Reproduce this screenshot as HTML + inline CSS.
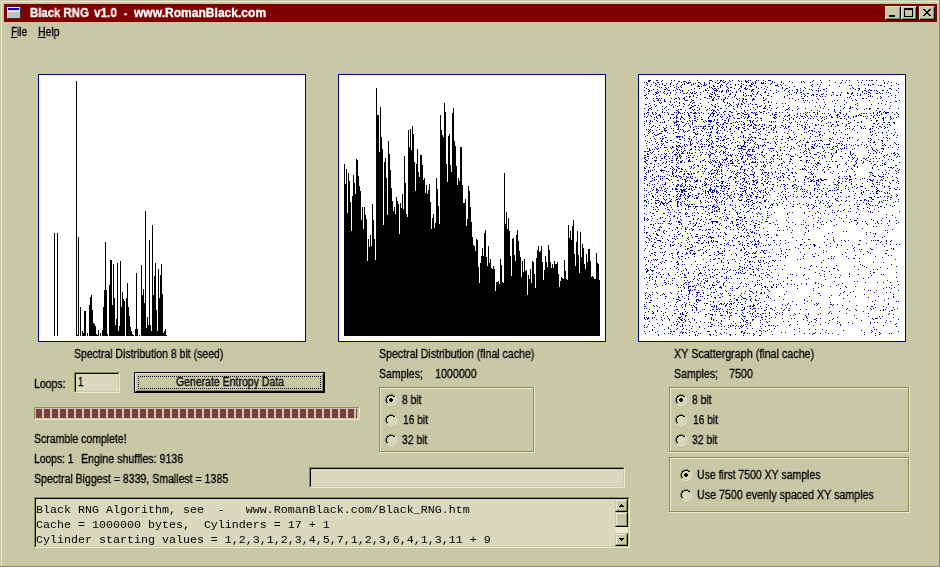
<!DOCTYPE html>
<html><head><meta charset="utf-8"><title>Black RNG</title>
<style>
html,body{margin:0;padding:0}
body{width:940px;height:567px;background:#c8c7a6;position:relative;overflow:hidden;font-family:"Liberation Sans",sans-serif;font-size:12px;color:#000}
.t{position:absolute;white-space:pre;font:12px/14px "Liberation Sans",sans-serif;color:#000;transform-origin:0 0;will-change:transform;-webkit-text-stroke:0.3px currentColor}
.m{position:absolute;white-space:pre;font:11.667px/15px "Liberation Mono",monospace;color:#000;left:0.4px;will-change:transform}
.panel{position:absolute;top:74px;width:266px;height:266px;border:1px solid #000080;background:#fff}
svg{display:block}
u{text-decoration:underline}
</style></head><body>
<div style="position:absolute;left:1px;top:1px;width:938px;height:1px;background:#ebe8d5"></div>
<div style="position:absolute;left:1px;top:1px;width:1px;height:565px;background:#ebe8d5"></div>
<div style="position:absolute;left:939px;top:0;width:1px;height:567px;background:#908c53"></div>
<div style="position:absolute;left:0;top:566px;width:940px;height:1px;background:#908c53"></div>
<div style="position:absolute;left:4px;top:4px;width:933px;height:18px;background:#800000"></div>
<svg style="position:absolute;left:7px;top:7px" width="14" height="12" viewBox="0 0 14 12" shape-rendering="crispEdges">
<rect x="0" y="0" width="14" height="12" fill="#303838"/>
<rect x="0" y="0" width="13" height="11" fill="#ffffff"/>
<rect x="1" y="1" width="12" height="10" fill="#c0c0c0"/>
<rect x="1" y="1" width="12" height="3" fill="#dcdcdc"/>
<rect x="1" y="4" width="12" height="1" fill="#ececec"/>
<rect x="1" y="1" width="11" height="2" fill="#0000ff"/>
</svg>
<div class="t" id="t_title1" style="left:29.91px;top:6px;transform:scaleX(0.9484);color:#fff;font-weight:bold">Black RNG</div><div class="t" id="t_title2" style="left:94.15px;top:6px;transform:scaleX(0.9789);color:#fff;font-weight:bold">v1.0</div><div class="t" id="t_title3" style="left:124.47px;top:7px;transform:scaleX(0.8000);color:#fff;font-weight:bold">-</div><div class="t" id="t_title4" style="left:134.25px;top:6px;transform:scaleX(1.0038);color:#fff;font-weight:bold">www.RomanBlack.com</div>
<div style="position:absolute;left:885px;top:6px;width:14px;height:12px;border:1px solid #ebe8d5;border-right-color:#000;border-bottom-color:#000;background:#c8c7a6"></div><div style="position:absolute;left:886px;top:7px;width:12px;height:10px;border:1px solid #c8c7a6;border-right-color:#908c53;border-bottom-color:#908c53;"><div style="position:absolute;left:2px;top:7px;width:6px;height:2px;background:#000"></div></div>
<div style="position:absolute;left:901px;top:6px;width:14px;height:12px;border:1px solid #ebe8d5;border-right-color:#000;border-bottom-color:#000;background:#c8c7a6"></div><div style="position:absolute;left:902px;top:7px;width:12px;height:10px;border:1px solid #c8c7a6;border-right-color:#908c53;border-bottom-color:#908c53;"><div style="position:absolute;left:1px;top:0px;width:7px;height:6px;border:1px solid #000;border-top-width:2px"></div></div>
<div style="position:absolute;left:919px;top:6px;width:14px;height:12px;border:1px solid #ebe8d5;border-right-color:#000;border-bottom-color:#000;background:#c8c7a6"></div><div style="position:absolute;left:920px;top:7px;width:12px;height:10px;border:1px solid #c8c7a6;border-right-color:#908c53;border-bottom-color:#908c53;"><svg style="position:absolute;left:2px;top:1px" width="8" height="7" viewBox="0 0 8 7" shape-rendering="crispEdges"><path d="M0 0h2v1h1v1h2v-1h1v-1h2v1h-1v1h-1v1h-1v1h1v1h1v1h1v1h-2v-1h-1v-1h-2v1h-1v1h-2v-1h1v-1h1v-1h1v-1h-1v-1h-1v-1h-1z" fill="#000"/></svg></div>
<div class="t" id="t_file" style="left:10.62px;top:25px;transform:scaleX(0.8284);"><u>F</u>ile</div><div class="t" id="t_help" style="left:38.32px;top:25px;transform:scaleX(0.8690);"><u>H</u>elp</div>
<div class="panel" style="left:38px"></div>
<div class="panel" style="left:338px"></div>
<div class="panel" style="left:638px"></div>
<svg style="position:absolute;left:0;top:0" width="940" height="567" viewBox="0 0 940 567" shape-rendering="crispEdges">
<path d="M54 233h1v103h-1zM57 233h1v103h-1zM76 81h1v255h-1zM77 335h1v1h-1zM78 237h1v99h-1zM80 307h1v29h-1zM82 331h1v5h-1zM83 333h1v3h-1zM84 311h1v25h-1zM85 311h1v25h-1zM87 333h1v3h-1zM89 305h1v31h-1zM90 297h1v39h-1zM91 295h1v41h-1zM92 310h1v26h-1zM93 323h1v13h-1zM94 324h1v12h-1zM95 326h1v10h-1zM96 334h1v2h-1zM97 335h1v1h-1zM98 330h1v6h-1zM100 333h1v3h-1zM102 330h1v6h-1zM103 307h1v29h-1zM104 290h1v46h-1zM105 242h1v94h-1zM106 290h1v46h-1zM107 334h1v2h-1zM109 285h1v51h-1zM110 260h1v76h-1zM111 260h1v76h-1zM112 305h1v31h-1zM113 264h1v72h-1zM114 298h1v38h-1zM115 325h1v11h-1zM116 319h1v17h-1zM117 263h1v73h-1zM118 331h1v5h-1zM119 326h1v10h-1zM120 261h1v75h-1zM121 307h1v29h-1zM122 292h1v44h-1zM123 299h1v37h-1zM124 301h1v35h-1zM126 298h1v38h-1zM127 283h1v53h-1zM128 307h1v29h-1zM129 316h1v20h-1zM130 327h1v9h-1zM131 331h1v5h-1zM132 334h1v2h-1zM133 335h1v1h-1zM135 329h1v7h-1zM136 273h1v63h-1zM137 329h1v7h-1zM139 335h1v1h-1zM141 265h1v71h-1zM142 295h1v41h-1zM143 289h1v47h-1zM144 303h1v33h-1zM145 211h1v125h-1zM146 328h1v8h-1zM147 317h1v19h-1zM148 325h1v11h-1zM149 240h1v96h-1zM150 325h1v11h-1zM151 331h1v5h-1zM152 225h1v111h-1zM153 295h1v41h-1zM154 276h1v60h-1zM155 263h1v73h-1zM156 310h1v26h-1zM157 331h1v5h-1zM158 269h1v67h-1zM159 298h1v38h-1zM160 275h1v61h-1zM161 264h1v72h-1zM162 294h1v42h-1zM163 333h1v3h-1zM164 331h1v5h-1zM165 329h1v7h-1zM166 335h1v1h-1z" fill="#000"/>
<path d="M344 164h1v172h-1zM345 184h1v152h-1zM346 169h1v167h-1zM347 213h1v123h-1zM348 173h1v163h-1zM349 181h1v155h-1zM350 202h1v134h-1zM351 231h1v105h-1zM352 196h1v140h-1zM353 175h1v161h-1zM354 183h1v153h-1zM355 194h1v142h-1zM356 159h1v177h-1zM357 160h1v176h-1zM358 176h1v160h-1zM359 186h1v150h-1zM360 191h1v145h-1zM361 220h1v116h-1zM362 207h1v129h-1zM363 229h1v107h-1zM364 207h1v129h-1zM365 215h1v121h-1zM366 219h1v117h-1zM367 261h1v75h-1zM368 239h1v97h-1zM369 247h1v89h-1zM370 235h1v101h-1zM371 246h1v90h-1zM372 204h1v132h-1zM373 220h1v116h-1zM374 239h1v97h-1zM375 260h1v76h-1zM376 88h1v248h-1zM377 115h1v221h-1zM378 115h1v221h-1zM379 152h1v184h-1zM380 107h1v229h-1zM381 137h1v199h-1zM382 149h1v187h-1zM383 225h1v111h-1zM384 162h1v174h-1zM385 158h1v178h-1zM386 178h1v158h-1zM387 215h1v121h-1zM388 141h1v195h-1zM389 154h1v182h-1zM390 170h1v166h-1zM391 188h1v148h-1zM392 201h1v135h-1zM393 211h1v125h-1zM394 207h1v129h-1zM395 214h1v122h-1zM396 197h1v139h-1zM397 201h1v135h-1zM398 204h1v132h-1zM399 234h1v102h-1zM400 203h1v133h-1zM401 208h1v128h-1zM402 194h1v142h-1zM403 209h1v127h-1zM404 156h1v180h-1zM405 183h1v153h-1zM406 214h1v122h-1zM407 217h1v119h-1zM408 130h1v206h-1zM409 147h1v189h-1zM410 129h1v207h-1zM411 150h1v186h-1zM412 126h1v210h-1zM413 134h1v202h-1zM414 162h1v174h-1zM415 191h1v145h-1zM416 164h1v172h-1zM417 149h1v187h-1zM418 172h1v164h-1zM419 177h1v159h-1zM420 155h1v181h-1zM421 155h1v181h-1zM422 165h1v171h-1zM423 180h1v156h-1zM424 178h1v158h-1zM425 193h1v143h-1zM426 185h1v151h-1zM427 194h1v142h-1zM428 190h1v146h-1zM429 184h1v152h-1zM430 202h1v134h-1zM431 229h1v107h-1zM432 218h1v118h-1zM433 214h1v122h-1zM434 228h1v108h-1zM435 223h1v113h-1zM436 178h1v158h-1zM437 189h1v147h-1zM438 206h1v130h-1zM439 224h1v112h-1zM440 115h1v221h-1zM441 130h1v206h-1zM442 135h1v201h-1zM443 137h1v199h-1zM444 103h1v233h-1zM445 112h1v224h-1zM446 164h1v172h-1zM447 182h1v154h-1zM448 136h1v200h-1zM449 134h1v202h-1zM450 165h1v171h-1zM451 172h1v164h-1zM452 113h1v223h-1zM453 108h1v228h-1zM454 141h1v195h-1zM455 146h1v190h-1zM456 166h1v170h-1zM457 185h1v151h-1zM458 178h1v158h-1zM459 181h1v155h-1zM460 147h1v189h-1zM461 147h1v189h-1zM462 185h1v151h-1zM463 203h1v133h-1zM464 203h1v133h-1zM465 199h1v137h-1zM466 226h1v110h-1zM467 219h1v117h-1zM468 186h1v150h-1zM469 191h1v145h-1zM470 207h1v129h-1zM471 222h1v114h-1zM472 237h1v99h-1zM473 245h1v91h-1zM474 246h1v90h-1zM475 251h1v85h-1zM476 239h1v97h-1zM477 240h1v96h-1zM478 267h1v69h-1zM479 283h1v53h-1zM480 263h1v73h-1zM481 256h1v80h-1zM482 248h1v88h-1zM483 256h1v80h-1zM484 233h1v103h-1zM485 230h1v106h-1zM486 257h1v79h-1zM487 266h1v70h-1zM488 246h1v90h-1zM489 263h1v73h-1zM490 259h1v77h-1zM491 268h1v68h-1zM492 269h1v67h-1zM493 266h1v70h-1zM494 269h1v67h-1zM495 291h1v45h-1zM496 282h1v54h-1zM497 282h1v54h-1zM498 281h1v55h-1zM499 284h1v52h-1zM500 259h1v77h-1zM501 265h1v71h-1zM502 282h1v54h-1zM503 283h1v53h-1zM504 173h1v163h-1zM505 224h1v112h-1zM506 212h1v124h-1zM507 229h1v107h-1zM508 218h1v118h-1zM509 231h1v105h-1zM510 256h1v80h-1zM511 276h1v60h-1zM512 239h1v97h-1zM513 238h1v98h-1zM514 255h1v81h-1zM515 261h1v75h-1zM516 235h1v101h-1zM517 230h1v106h-1zM518 241h1v95h-1zM519 251h1v85h-1zM520 257h1v79h-1zM521 277h1v59h-1zM522 261h1v75h-1zM523 272h1v64h-1zM524 259h1v77h-1zM525 271h1v65h-1zM526 270h1v66h-1zM527 295h1v41h-1zM528 275h1v61h-1zM529 279h1v57h-1zM530 269h1v67h-1zM531 283h1v53h-1zM532 261h1v75h-1zM533 262h1v74h-1zM534 274h1v62h-1zM535 288h1v48h-1zM536 258h1v78h-1zM537 250h1v86h-1zM538 246h1v90h-1zM539 252h1v84h-1zM540 251h1v85h-1zM541 246h1v90h-1zM542 262h1v74h-1zM543 280h1v56h-1zM544 270h1v66h-1zM545 256h1v80h-1zM546 262h1v74h-1zM547 267h1v69h-1zM548 245h1v91h-1zM549 250h1v86h-1zM550 262h1v74h-1zM551 268h1v68h-1zM552 264h1v72h-1zM553 268h1v68h-1zM554 261h1v75h-1zM555 264h1v72h-1zM556 264h1v72h-1zM557 262h1v74h-1zM558 274h1v62h-1zM559 287h1v49h-1zM560 281h1v55h-1zM561 277h1v59h-1zM562 278h1v58h-1zM563 279h1v57h-1zM564 260h1v76h-1zM565 271h1v65h-1zM566 279h1v57h-1zM567 280h1v56h-1zM568 225h1v111h-1zM569 238h1v98h-1zM570 231h1v105h-1zM571 240h1v96h-1zM572 226h1v110h-1zM573 220h1v116h-1zM574 254h1v82h-1zM575 266h1v70h-1zM576 242h1v94h-1zM577 231h1v105h-1zM578 255h1v81h-1zM579 273h1v63h-1zM580 232h1v104h-1zM581 257h1v79h-1zM582 244h1v92h-1zM583 248h1v88h-1zM584 264h1v72h-1zM585 269h1v67h-1zM586 254h1v82h-1zM587 262h1v74h-1zM588 249h1v87h-1zM589 249h1v87h-1zM590 261h1v75h-1zM591 277h1v59h-1zM592 276h1v60h-1zM593 277h1v59h-1zM594 279h1v57h-1zM595 279h1v57h-1zM596 253h1v83h-1zM597 263h1v73h-1zM598 264h1v72h-1zM599 280h1v56h-1z" fill="#000"/>
<path d="M648 80h1v1h-1zM649 80h1v1h-1zM650 80h1v1h-1zM656 80h1v1h-1zM657 80h1v1h-1zM662 80h1v1h-1zM671 80h1v1h-1zM674 80h1v1h-1zM689 80h1v1h-1zM697 80h1v1h-1zM709 80h1v1h-1zM710 80h1v1h-1zM711 80h1v1h-1zM717 80h1v1h-1zM720 80h1v1h-1zM721 80h1v1h-1zM723 80h1v1h-1zM729 80h1v1h-1zM732 80h1v1h-1zM738 80h1v1h-1zM745 80h1v1h-1zM748 80h1v1h-1zM750 80h1v1h-1zM756 80h1v1h-1zM758 80h1v1h-1zM763 80h1v1h-1zM768 80h1v1h-1zM769 80h1v1h-1zM770 80h1v1h-1zM813 80h1v1h-1zM820 80h1v1h-1zM829 80h1v1h-1zM842 80h1v1h-1zM846 80h1v1h-1zM849 80h1v1h-1zM857 80h1v1h-1zM862 80h1v1h-1zM866 80h1v1h-1zM869 80h1v1h-1zM871 80h1v1h-1zM872 80h1v1h-1zM876 80h1v1h-1zM883 80h1v1h-1zM648 81h1v1h-1zM649 81h1v1h-1zM661 81h1v1h-1zM678 81h1v1h-1zM679 81h1v1h-1zM683 81h1v1h-1zM684 81h1v1h-1zM685 81h1v1h-1zM712 81h1v1h-1zM720 81h1v1h-1zM722 81h1v1h-1zM725 81h1v1h-1zM730 81h1v1h-1zM739 81h1v1h-1zM741 81h1v1h-1zM745 81h1v1h-1zM746 81h1v1h-1zM747 81h1v1h-1zM755 81h1v1h-1zM765 81h1v1h-1zM772 81h1v1h-1zM781 81h1v1h-1zM789 81h1v1h-1zM801 81h1v1h-1zM803 81h1v1h-1zM812 81h1v1h-1zM888 81h1v1h-1zM644 82h1v1h-1zM646 82h1v1h-1zM653 82h1v1h-1zM657 82h1v1h-1zM658 82h1v1h-1zM671 82h1v1h-1zM681 82h1v1h-1zM686 82h1v1h-1zM688 82h1v1h-1zM689 82h1v1h-1zM690 82h1v1h-1zM698 82h1v1h-1zM699 82h1v1h-1zM704 82h1v1h-1zM709 82h1v1h-1zM715 82h1v1h-1zM719 82h1v1h-1zM723 82h1v1h-1zM724 82h1v1h-1zM728 82h1v1h-1zM746 82h1v1h-1zM748 82h1v1h-1zM752 82h1v1h-1zM755 82h1v1h-1zM761 82h1v1h-1zM763 82h1v1h-1zM772 82h1v1h-1zM774 82h1v1h-1zM781 82h1v1h-1zM792 82h1v1h-1zM801 82h1v1h-1zM804 82h1v1h-1zM810 82h1v1h-1zM821 82h1v1h-1zM835 82h1v1h-1zM841 82h1v1h-1zM845 82h1v1h-1zM858 82h1v1h-1zM861 82h1v1h-1zM884 82h1v1h-1zM891 82h1v1h-1zM647 83h1v1h-1zM655 83h1v1h-1zM662 83h1v1h-1zM666 83h1v1h-1zM670 83h1v1h-1zM677 83h1v1h-1zM684 83h1v1h-1zM687 83h1v1h-1zM688 83h1v1h-1zM693 83h1v1h-1zM695 83h1v1h-1zM700 83h1v1h-1zM704 83h1v1h-1zM709 83h1v1h-1zM717 83h1v1h-1zM718 83h1v1h-1zM727 83h1v1h-1zM741 83h1v1h-1zM751 83h1v1h-1zM753 83h1v1h-1zM755 83h1v1h-1zM761 83h1v1h-1zM762 83h1v1h-1zM763 83h1v1h-1zM765 83h1v1h-1zM771 83h1v1h-1zM783 83h1v1h-1zM840 83h1v1h-1zM884 83h1v1h-1zM887 83h1v1h-1zM896 83h1v1h-1zM646 84h1v1h-1zM651 84h1v1h-1zM656 84h1v1h-1zM659 84h1v1h-1zM662 84h1v1h-1zM670 84h1v1h-1zM676 84h1v1h-1zM682 84h1v1h-1zM684 84h1v1h-1zM691 84h1v1h-1zM693 84h1v1h-1zM701 84h1v1h-1zM704 84h1v1h-1zM706 84h1v1h-1zM721 84h1v1h-1zM726 84h1v1h-1zM730 84h1v1h-1zM735 84h1v1h-1zM738 84h1v1h-1zM743 84h1v1h-1zM751 84h1v1h-1zM752 84h1v1h-1zM770 84h1v1h-1zM777 84h1v1h-1zM780 84h1v1h-1zM812 84h1v1h-1zM817 84h1v1h-1zM820 84h1v1h-1zM864 84h1v1h-1zM868 84h1v1h-1zM872 84h1v1h-1zM873 84h1v1h-1zM898 84h1v1h-1zM647 85h1v1h-1zM655 85h1v1h-1zM664 85h1v1h-1zM665 85h1v1h-1zM673 85h1v1h-1zM681 85h1v1h-1zM691 85h1v1h-1zM698 85h1v1h-1zM703 85h1v1h-1zM704 85h1v1h-1zM705 85h1v1h-1zM713 85h1v1h-1zM720 85h1v1h-1zM722 85h1v1h-1zM735 85h1v1h-1zM741 85h1v1h-1zM746 85h1v1h-1zM749 85h1v1h-1zM750 85h1v1h-1zM754 85h1v1h-1zM775 85h1v1h-1zM776 85h1v1h-1zM777 85h1v1h-1zM781 85h1v1h-1zM785 85h1v1h-1zM811 85h1v1h-1zM829 85h1v1h-1zM849 85h1v1h-1zM851 85h1v1h-1zM858 85h1v1h-1zM868 85h1v1h-1zM870 85h1v1h-1zM878 85h1v1h-1zM880 85h1v1h-1zM881 85h1v1h-1zM891 85h1v1h-1zM650 86h1v1h-1zM657 86h1v1h-1zM670 86h1v1h-1zM676 86h1v1h-1zM680 86h1v1h-1zM697 86h1v1h-1zM698 86h1v1h-1zM699 86h1v1h-1zM701 86h1v1h-1zM709 86h1v1h-1zM713 86h1v1h-1zM714 86h1v1h-1zM717 86h1v1h-1zM720 86h1v1h-1zM726 86h1v1h-1zM740 86h1v1h-1zM741 86h1v1h-1zM750 86h1v1h-1zM751 86h1v1h-1zM756 86h1v1h-1zM765 86h1v1h-1zM778 86h1v1h-1zM794 86h1v1h-1zM812 86h1v1h-1zM819 86h1v1h-1zM839 86h1v1h-1zM884 86h1v1h-1zM644 87h1v1h-1zM659 87h1v1h-1zM661 87h1v1h-1zM665 87h1v1h-1zM668 87h1v1h-1zM674 87h1v1h-1zM678 87h1v1h-1zM681 87h1v1h-1zM709 87h1v1h-1zM711 87h1v1h-1zM720 87h1v1h-1zM727 87h1v1h-1zM730 87h1v1h-1zM731 87h1v1h-1zM741 87h1v1h-1zM745 87h1v1h-1zM756 87h1v1h-1zM761 87h1v1h-1zM767 87h1v1h-1zM782 87h1v1h-1zM789 87h1v1h-1zM804 87h1v1h-1zM852 87h1v1h-1zM646 88h1v1h-1zM666 88h1v1h-1zM676 88h1v1h-1zM694 88h1v1h-1zM699 88h1v1h-1zM707 88h1v1h-1zM712 88h1v1h-1zM714 88h1v1h-1zM715 88h1v1h-1zM718 88h1v1h-1zM728 88h1v1h-1zM734 88h1v1h-1zM739 88h1v1h-1zM744 88h1v1h-1zM745 88h1v1h-1zM747 88h1v1h-1zM758 88h1v1h-1zM764 88h1v1h-1zM782 88h1v1h-1zM786 88h1v1h-1zM787 88h1v1h-1zM800 88h1v1h-1zM805 88h1v1h-1zM818 88h1v1h-1zM826 88h1v1h-1zM850 88h1v1h-1zM853 88h1v1h-1zM858 88h1v1h-1zM859 88h1v1h-1zM865 88h1v1h-1zM889 88h1v1h-1zM890 88h1v1h-1zM898 88h1v1h-1zM648 89h1v1h-1zM653 89h1v1h-1zM657 89h1v1h-1zM664 89h1v1h-1zM665 89h1v1h-1zM667 89h1v1h-1zM677 89h1v1h-1zM679 89h1v1h-1zM691 89h1v1h-1zM705 89h1v1h-1zM713 89h1v1h-1zM716 89h1v1h-1zM727 89h1v1h-1zM738 89h1v1h-1zM745 89h1v1h-1zM746 89h1v1h-1zM749 89h1v1h-1zM752 89h1v1h-1zM753 89h1v1h-1zM766 89h1v1h-1zM785 89h1v1h-1zM796 89h1v1h-1zM797 89h1v1h-1zM809 89h1v1h-1zM811 89h1v1h-1zM823 89h1v1h-1zM824 89h1v1h-1zM855 89h1v1h-1zM859 89h1v1h-1zM869 89h1v1h-1zM891 89h1v1h-1zM644 90h1v1h-1zM649 90h1v1h-1zM651 90h1v1h-1zM668 90h1v1h-1zM669 90h1v1h-1zM673 90h1v1h-1zM675 90h1v1h-1zM680 90h1v1h-1zM682 90h1v1h-1zM688 90h1v1h-1zM705 90h1v1h-1zM706 90h1v1h-1zM708 90h1v1h-1zM714 90h1v1h-1zM715 90h1v1h-1zM716 90h1v1h-1zM717 90h1v1h-1zM722 90h1v1h-1zM726 90h1v1h-1zM728 90h1v1h-1zM730 90h1v1h-1zM740 90h1v1h-1zM751 90h1v1h-1zM752 90h1v1h-1zM770 90h1v1h-1zM776 90h1v1h-1zM784 90h1v1h-1zM789 90h1v1h-1zM792 90h1v1h-1zM797 90h1v1h-1zM800 90h1v1h-1zM803 90h1v1h-1zM812 90h1v1h-1zM816 90h1v1h-1zM818 90h1v1h-1zM820 90h1v1h-1zM858 90h1v1h-1zM864 90h1v1h-1zM865 90h1v1h-1zM868 90h1v1h-1zM870 90h1v1h-1zM871 90h1v1h-1zM874 90h1v1h-1zM876 90h1v1h-1zM882 90h1v1h-1zM883 90h1v1h-1zM887 90h1v1h-1zM896 90h1v1h-1zM648 91h1v1h-1zM649 91h1v1h-1zM657 91h1v1h-1zM660 91h1v1h-1zM664 91h1v1h-1zM682 91h1v1h-1zM694 91h1v1h-1zM703 91h1v1h-1zM716 91h1v1h-1zM719 91h1v1h-1zM721 91h1v1h-1zM722 91h1v1h-1zM726 91h1v1h-1zM728 91h1v1h-1zM736 91h1v1h-1zM740 91h1v1h-1zM751 91h1v1h-1zM753 91h1v1h-1zM758 91h1v1h-1zM765 91h1v1h-1zM778 91h1v1h-1zM788 91h1v1h-1zM797 91h1v1h-1zM818 91h1v1h-1zM826 91h1v1h-1zM862 91h1v1h-1zM866 91h1v1h-1zM877 91h1v1h-1zM655 92h1v1h-1zM656 92h1v1h-1zM658 92h1v1h-1zM663 92h1v1h-1zM670 92h1v1h-1zM676 92h1v1h-1zM680 92h1v1h-1zM687 92h1v1h-1zM690 92h1v1h-1zM692 92h1v1h-1zM696 92h1v1h-1zM700 92h1v1h-1zM707 92h1v1h-1zM712 92h1v1h-1zM714 92h1v1h-1zM721 92h1v1h-1zM726 92h1v1h-1zM732 92h1v1h-1zM736 92h1v1h-1zM743 92h1v1h-1zM757 92h1v1h-1zM764 92h1v1h-1zM765 92h1v1h-1zM776 92h1v1h-1zM789 92h1v1h-1zM794 92h1v1h-1zM796 92h1v1h-1zM800 92h1v1h-1zM801 92h1v1h-1zM832 92h1v1h-1zM833 92h1v1h-1zM841 92h1v1h-1zM847 92h1v1h-1zM852 92h1v1h-1zM862 92h1v1h-1zM868 92h1v1h-1zM869 92h1v1h-1zM879 92h1v1h-1zM886 92h1v1h-1zM888 92h1v1h-1zM898 92h1v1h-1zM648 93h1v1h-1zM656 93h1v1h-1zM657 93h1v1h-1zM664 93h1v1h-1zM667 93h1v1h-1zM670 93h1v1h-1zM683 93h1v1h-1zM684 93h1v1h-1zM686 93h1v1h-1zM691 93h1v1h-1zM692 93h1v1h-1zM694 93h1v1h-1zM695 93h1v1h-1zM710 93h1v1h-1zM714 93h1v1h-1zM730 93h1v1h-1zM745 93h1v1h-1zM752 93h1v1h-1zM757 93h1v1h-1zM768 93h1v1h-1zM773 93h1v1h-1zM796 93h1v1h-1zM803 93h1v1h-1zM807 93h1v1h-1zM808 93h1v1h-1zM823 93h1v1h-1zM847 93h1v1h-1zM848 93h1v1h-1zM851 93h1v1h-1zM852 93h1v1h-1zM857 93h1v1h-1zM864 93h1v1h-1zM866 93h1v1h-1zM870 93h1v1h-1zM876 93h1v1h-1zM877 93h1v1h-1zM880 93h1v1h-1zM882 93h1v1h-1zM890 93h1v1h-1zM646 94h1v1h-1zM653 94h1v1h-1zM655 94h1v1h-1zM666 94h1v1h-1zM675 94h1v1h-1zM689 94h1v1h-1zM700 94h1v1h-1zM711 94h1v1h-1zM712 94h1v1h-1zM715 94h1v1h-1zM717 94h1v1h-1zM729 94h1v1h-1zM730 94h1v1h-1zM735 94h1v1h-1zM743 94h1v1h-1zM753 94h1v1h-1zM756 94h1v1h-1zM760 94h1v1h-1zM789 94h1v1h-1zM791 94h1v1h-1zM801 94h1v1h-1zM804 94h1v1h-1zM812 94h1v1h-1zM813 94h1v1h-1zM816 94h1v1h-1zM817 94h1v1h-1zM821 94h1v1h-1zM822 94h1v1h-1zM826 94h1v1h-1zM833 94h1v1h-1zM840 94h1v1h-1zM851 94h1v1h-1zM860 94h1v1h-1zM868 94h1v1h-1zM644 95h1v1h-1zM645 95h1v1h-1zM659 95h1v1h-1zM669 95h1v1h-1zM693 95h1v1h-1zM697 95h1v1h-1zM709 95h1v1h-1zM715 95h1v1h-1zM723 95h1v1h-1zM735 95h1v1h-1zM743 95h1v1h-1zM746 95h1v1h-1zM748 95h1v1h-1zM750 95h1v1h-1zM751 95h1v1h-1zM761 95h1v1h-1zM767 95h1v1h-1zM768 95h1v1h-1zM787 95h1v1h-1zM805 95h1v1h-1zM811 95h1v1h-1zM813 95h1v1h-1zM819 95h1v1h-1zM831 95h1v1h-1zM836 95h1v1h-1zM837 95h1v1h-1zM840 95h1v1h-1zM853 95h1v1h-1zM857 95h1v1h-1zM860 95h1v1h-1zM870 95h1v1h-1zM891 95h1v1h-1zM895 95h1v1h-1zM656 96h1v1h-1zM686 96h1v1h-1zM689 96h1v1h-1zM690 96h1v1h-1zM693 96h1v1h-1zM709 96h1v1h-1zM710 96h1v1h-1zM711 96h1v1h-1zM717 96h1v1h-1zM718 96h1v1h-1zM719 96h1v1h-1zM728 96h1v1h-1zM734 96h1v1h-1zM745 96h1v1h-1zM751 96h1v1h-1zM755 96h1v1h-1zM771 96h1v1h-1zM784 96h1v1h-1zM801 96h1v1h-1zM804 96h1v1h-1zM807 96h1v1h-1zM816 96h1v1h-1zM820 96h1v1h-1zM822 96h1v1h-1zM825 96h1v1h-1zM850 96h1v1h-1zM868 96h1v1h-1zM870 96h1v1h-1zM872 96h1v1h-1zM880 96h1v1h-1zM888 96h1v1h-1zM646 97h1v1h-1zM678 97h1v1h-1zM684 97h1v1h-1zM689 97h1v1h-1zM696 97h1v1h-1zM704 97h1v1h-1zM705 97h1v1h-1zM711 97h1v1h-1zM714 97h1v1h-1zM725 97h1v1h-1zM732 97h1v1h-1zM763 97h1v1h-1zM784 97h1v1h-1zM847 97h1v1h-1zM849 97h1v1h-1zM881 97h1v1h-1zM895 97h1v1h-1zM645 98h1v1h-1zM647 98h1v1h-1zM653 98h1v1h-1zM656 98h1v1h-1zM657 98h1v1h-1zM659 98h1v1h-1zM661 98h1v1h-1zM671 98h1v1h-1zM675 98h1v1h-1zM676 98h1v1h-1zM679 98h1v1h-1zM683 98h1v1h-1zM684 98h1v1h-1zM707 98h1v1h-1zM709 98h1v1h-1zM713 98h1v1h-1zM718 98h1v1h-1zM725 98h1v1h-1zM727 98h1v1h-1zM736 98h1v1h-1zM739 98h1v1h-1zM742 98h1v1h-1zM743 98h1v1h-1zM753 98h1v1h-1zM763 98h1v1h-1zM766 98h1v1h-1zM789 98h1v1h-1zM792 98h1v1h-1zM802 98h1v1h-1zM803 98h1v1h-1zM817 98h1v1h-1zM851 98h1v1h-1zM862 98h1v1h-1zM863 98h1v1h-1zM866 98h1v1h-1zM877 98h1v1h-1zM880 98h1v1h-1zM658 99h1v1h-1zM664 99h1v1h-1zM674 99h1v1h-1zM679 99h1v1h-1zM684 99h1v1h-1zM691 99h1v1h-1zM700 99h1v1h-1zM712 99h1v1h-1zM713 99h1v1h-1zM716 99h1v1h-1zM721 99h1v1h-1zM723 99h1v1h-1zM724 99h1v1h-1zM737 99h1v1h-1zM743 99h1v1h-1zM745 99h1v1h-1zM746 99h1v1h-1zM752 99h1v1h-1zM753 99h1v1h-1zM754 99h1v1h-1zM765 99h1v1h-1zM798 99h1v1h-1zM818 99h1v1h-1zM823 99h1v1h-1zM855 99h1v1h-1zM653 100h1v1h-1zM657 100h1v1h-1zM658 100h1v1h-1zM660 100h1v1h-1zM664 100h1v1h-1zM685 100h1v1h-1zM686 100h1v1h-1zM687 100h1v1h-1zM692 100h1v1h-1zM693 100h1v1h-1zM712 100h1v1h-1zM713 100h1v1h-1zM723 100h1v1h-1zM739 100h1v1h-1zM742 100h1v1h-1zM752 100h1v1h-1zM763 100h1v1h-1zM764 100h1v1h-1zM795 100h1v1h-1zM803 100h1v1h-1zM805 100h1v1h-1zM807 100h1v1h-1zM812 100h1v1h-1zM834 100h1v1h-1zM837 100h1v1h-1zM844 100h1v1h-1zM852 100h1v1h-1zM856 100h1v1h-1zM869 100h1v1h-1zM882 100h1v1h-1zM899 100h1v1h-1zM654 101h1v1h-1zM664 101h1v1h-1zM665 101h1v1h-1zM670 101h1v1h-1zM676 101h1v1h-1zM691 101h1v1h-1zM723 101h1v1h-1zM742 101h1v1h-1zM746 101h1v1h-1zM768 101h1v1h-1zM832 101h1v1h-1zM886 101h1v1h-1zM895 101h1v1h-1zM896 101h1v1h-1zM659 102h1v1h-1zM661 102h1v1h-1zM670 102h1v1h-1zM674 102h1v1h-1zM679 102h1v1h-1zM690 102h1v1h-1zM693 102h1v1h-1zM694 102h1v1h-1zM708 102h1v1h-1zM724 102h1v1h-1zM727 102h1v1h-1zM733 102h1v1h-1zM743 102h1v1h-1zM768 102h1v1h-1zM771 102h1v1h-1zM804 102h1v1h-1zM809 102h1v1h-1zM816 102h1v1h-1zM824 102h1v1h-1zM846 102h1v1h-1zM890 102h1v1h-1zM649 103h1v1h-1zM660 103h1v1h-1zM679 103h1v1h-1zM683 103h1v1h-1zM692 103h1v1h-1zM700 103h1v1h-1zM717 103h1v1h-1zM727 103h1v1h-1zM729 103h1v1h-1zM738 103h1v1h-1zM741 103h1v1h-1zM744 103h1v1h-1zM750 103h1v1h-1zM764 103h1v1h-1zM776 103h1v1h-1zM782 103h1v1h-1zM785 103h1v1h-1zM835 103h1v1h-1zM857 103h1v1h-1zM878 103h1v1h-1zM881 103h1v1h-1zM645 104h1v1h-1zM646 104h1v1h-1zM654 104h1v1h-1zM669 104h1v1h-1zM672 104h1v1h-1zM684 104h1v1h-1zM689 104h1v1h-1zM711 104h1v1h-1zM715 104h1v1h-1zM730 104h1v1h-1zM736 104h1v1h-1zM738 104h1v1h-1zM741 104h1v1h-1zM742 104h1v1h-1zM748 104h1v1h-1zM752 104h1v1h-1zM755 104h1v1h-1zM756 104h1v1h-1zM825 104h1v1h-1zM844 104h1v1h-1zM855 104h1v1h-1zM871 104h1v1h-1zM885 104h1v1h-1zM650 105h1v1h-1zM656 105h1v1h-1zM671 105h1v1h-1zM675 105h1v1h-1zM679 105h1v1h-1zM688 105h1v1h-1zM691 105h1v1h-1zM694 105h1v1h-1zM695 105h1v1h-1zM698 105h1v1h-1zM712 105h1v1h-1zM725 105h1v1h-1zM729 105h1v1h-1zM731 105h1v1h-1zM737 105h1v1h-1zM761 105h1v1h-1zM765 105h1v1h-1zM769 105h1v1h-1zM770 105h1v1h-1zM788 105h1v1h-1zM819 105h1v1h-1zM857 105h1v1h-1zM648 106h1v1h-1zM655 106h1v1h-1zM662 106h1v1h-1zM666 106h1v1h-1zM673 106h1v1h-1zM677 106h1v1h-1zM683 106h1v1h-1zM692 106h1v1h-1zM693 106h1v1h-1zM701 106h1v1h-1zM714 106h1v1h-1zM715 106h1v1h-1zM718 106h1v1h-1zM728 106h1v1h-1zM733 106h1v1h-1zM737 106h1v1h-1zM740 106h1v1h-1zM745 106h1v1h-1zM748 106h1v1h-1zM757 106h1v1h-1zM759 106h1v1h-1zM760 106h1v1h-1zM765 106h1v1h-1zM783 106h1v1h-1zM797 106h1v1h-1zM815 106h1v1h-1zM824 106h1v1h-1zM834 106h1v1h-1zM840 106h1v1h-1zM850 106h1v1h-1zM890 106h1v1h-1zM651 107h1v1h-1zM665 107h1v1h-1zM673 107h1v1h-1zM690 107h1v1h-1zM691 107h1v1h-1zM697 107h1v1h-1zM705 107h1v1h-1zM715 107h1v1h-1zM737 107h1v1h-1zM753 107h1v1h-1zM757 107h1v1h-1zM764 107h1v1h-1zM769 107h1v1h-1zM777 107h1v1h-1zM789 107h1v1h-1zM820 107h1v1h-1zM844 107h1v1h-1zM850 107h1v1h-1zM852 107h1v1h-1zM644 108h1v1h-1zM649 108h1v1h-1zM650 108h1v1h-1zM664 108h1v1h-1zM689 108h1v1h-1zM690 108h1v1h-1zM699 108h1v1h-1zM709 108h1v1h-1zM720 108h1v1h-1zM721 108h1v1h-1zM726 108h1v1h-1zM733 108h1v1h-1zM741 108h1v1h-1zM763 108h1v1h-1zM764 108h1v1h-1zM765 108h1v1h-1zM771 108h1v1h-1zM776 108h1v1h-1zM788 108h1v1h-1zM798 108h1v1h-1zM805 108h1v1h-1zM823 108h1v1h-1zM843 108h1v1h-1zM849 108h1v1h-1zM850 108h1v1h-1zM856 108h1v1h-1zM866 108h1v1h-1zM869 108h1v1h-1zM870 108h1v1h-1zM877 108h1v1h-1zM878 108h1v1h-1zM889 108h1v1h-1zM898 108h1v1h-1zM648 109h1v1h-1zM651 109h1v1h-1zM662 109h1v1h-1zM668 109h1v1h-1zM678 109h1v1h-1zM680 109h1v1h-1zM681 109h1v1h-1zM692 109h1v1h-1zM694 109h1v1h-1zM699 109h1v1h-1zM707 109h1v1h-1zM712 109h1v1h-1zM717 109h1v1h-1zM734 109h1v1h-1zM750 109h1v1h-1zM755 109h1v1h-1zM767 109h1v1h-1zM786 109h1v1h-1zM787 109h1v1h-1zM789 109h1v1h-1zM797 109h1v1h-1zM828 109h1v1h-1zM834 109h1v1h-1zM857 109h1v1h-1zM864 109h1v1h-1zM869 109h1v1h-1zM882 109h1v1h-1zM648 110h1v1h-1zM657 110h1v1h-1zM666 110h1v1h-1zM676 110h1v1h-1zM677 110h1v1h-1zM685 110h1v1h-1zM693 110h1v1h-1zM697 110h1v1h-1zM706 110h1v1h-1zM711 110h1v1h-1zM713 110h1v1h-1zM714 110h1v1h-1zM718 110h1v1h-1zM744 110h1v1h-1zM747 110h1v1h-1zM770 110h1v1h-1zM785 110h1v1h-1zM792 110h1v1h-1zM811 110h1v1h-1zM817 110h1v1h-1zM834 110h1v1h-1zM840 110h1v1h-1zM876 110h1v1h-1zM662 111h1v1h-1zM678 111h1v1h-1zM713 111h1v1h-1zM715 111h1v1h-1zM724 111h1v1h-1zM725 111h1v1h-1zM729 111h1v1h-1zM730 111h1v1h-1zM736 111h1v1h-1zM744 111h1v1h-1zM759 111h1v1h-1zM763 111h1v1h-1zM764 111h1v1h-1zM819 111h1v1h-1zM834 111h1v1h-1zM849 111h1v1h-1zM879 111h1v1h-1zM880 111h1v1h-1zM884 111h1v1h-1zM647 112h1v1h-1zM648 112h1v1h-1zM652 112h1v1h-1zM655 112h1v1h-1zM662 112h1v1h-1zM664 112h1v1h-1zM667 112h1v1h-1zM674 112h1v1h-1zM676 112h1v1h-1zM678 112h1v1h-1zM679 112h1v1h-1zM684 112h1v1h-1zM687 112h1v1h-1zM690 112h1v1h-1zM691 112h1v1h-1zM694 112h1v1h-1zM695 112h1v1h-1zM698 112h1v1h-1zM701 112h1v1h-1zM712 112h1v1h-1zM716 112h1v1h-1zM719 112h1v1h-1zM723 112h1v1h-1zM731 112h1v1h-1zM732 112h1v1h-1zM741 112h1v1h-1zM745 112h1v1h-1zM751 112h1v1h-1zM752 112h1v1h-1zM754 112h1v1h-1zM756 112h1v1h-1zM760 112h1v1h-1zM761 112h1v1h-1zM768 112h1v1h-1zM775 112h1v1h-1zM776 112h1v1h-1zM779 112h1v1h-1zM782 112h1v1h-1zM787 112h1v1h-1zM805 112h1v1h-1zM807 112h1v1h-1zM809 112h1v1h-1zM813 112h1v1h-1zM814 112h1v1h-1zM817 112h1v1h-1zM835 112h1v1h-1zM839 112h1v1h-1zM840 112h1v1h-1zM873 112h1v1h-1zM877 112h1v1h-1zM879 112h1v1h-1zM883 112h1v1h-1zM885 112h1v1h-1zM886 112h1v1h-1zM887 112h1v1h-1zM888 112h1v1h-1zM892 112h1v1h-1zM896 112h1v1h-1zM644 113h1v1h-1zM646 113h1v1h-1zM652 113h1v1h-1zM656 113h1v1h-1zM668 113h1v1h-1zM678 113h1v1h-1zM680 113h1v1h-1zM682 113h1v1h-1zM688 113h1v1h-1zM693 113h1v1h-1zM694 113h1v1h-1zM695 113h1v1h-1zM696 113h1v1h-1zM699 113h1v1h-1zM703 113h1v1h-1zM708 113h1v1h-1zM711 113h1v1h-1zM712 113h1v1h-1zM713 113h1v1h-1zM714 113h1v1h-1zM737 113h1v1h-1zM738 113h1v1h-1zM739 113h1v1h-1zM742 113h1v1h-1zM743 113h1v1h-1zM747 113h1v1h-1zM753 113h1v1h-1zM755 113h1v1h-1zM763 113h1v1h-1zM766 113h1v1h-1zM772 113h1v1h-1zM797 113h1v1h-1zM800 113h1v1h-1zM803 113h1v1h-1zM806 113h1v1h-1zM817 113h1v1h-1zM822 113h1v1h-1zM824 113h1v1h-1zM828 113h1v1h-1zM840 113h1v1h-1zM846 113h1v1h-1zM861 113h1v1h-1zM863 113h1v1h-1zM864 113h1v1h-1zM866 113h1v1h-1zM870 113h1v1h-1zM873 113h1v1h-1zM877 113h1v1h-1zM881 113h1v1h-1zM885 113h1v1h-1zM886 113h1v1h-1zM897 113h1v1h-1zM644 114h1v1h-1zM648 114h1v1h-1zM653 114h1v1h-1zM655 114h1v1h-1zM659 114h1v1h-1zM668 114h1v1h-1zM671 114h1v1h-1zM672 114h1v1h-1zM673 114h1v1h-1zM677 114h1v1h-1zM684 114h1v1h-1zM688 114h1v1h-1zM710 114h1v1h-1zM713 114h1v1h-1zM717 114h1v1h-1zM718 114h1v1h-1zM721 114h1v1h-1zM724 114h1v1h-1zM728 114h1v1h-1zM737 114h1v1h-1zM744 114h1v1h-1zM745 114h1v1h-1zM746 114h1v1h-1zM748 114h1v1h-1zM755 114h1v1h-1zM756 114h1v1h-1zM757 114h1v1h-1zM772 114h1v1h-1zM774 114h1v1h-1zM775 114h1v1h-1zM776 114h1v1h-1zM789 114h1v1h-1zM797 114h1v1h-1zM805 114h1v1h-1zM815 114h1v1h-1zM817 114h1v1h-1zM830 114h1v1h-1zM837 114h1v1h-1zM838 114h1v1h-1zM843 114h1v1h-1zM846 114h1v1h-1zM859 114h1v1h-1zM876 114h1v1h-1zM881 114h1v1h-1zM894 114h1v1h-1zM898 114h1v1h-1zM650 115h1v1h-1zM658 115h1v1h-1zM659 115h1v1h-1zM660 115h1v1h-1zM676 115h1v1h-1zM688 115h1v1h-1zM689 115h1v1h-1zM694 115h1v1h-1zM699 115h1v1h-1zM710 115h1v1h-1zM713 115h1v1h-1zM717 115h1v1h-1zM729 115h1v1h-1zM732 115h1v1h-1zM741 115h1v1h-1zM748 115h1v1h-1zM755 115h1v1h-1zM770 115h1v1h-1zM774 115h1v1h-1zM785 115h1v1h-1zM788 115h1v1h-1zM789 115h1v1h-1zM794 115h1v1h-1zM800 115h1v1h-1zM806 115h1v1h-1zM810 115h1v1h-1zM829 115h1v1h-1zM836 115h1v1h-1zM837 115h1v1h-1zM845 115h1v1h-1zM856 115h1v1h-1zM858 115h1v1h-1zM860 115h1v1h-1zM861 115h1v1h-1zM871 115h1v1h-1zM874 115h1v1h-1zM877 115h1v1h-1zM879 115h1v1h-1zM644 116h1v1h-1zM647 116h1v1h-1zM651 116h1v1h-1zM656 116h1v1h-1zM660 116h1v1h-1zM676 116h1v1h-1zM681 116h1v1h-1zM689 116h1v1h-1zM694 116h1v1h-1zM695 116h1v1h-1zM709 116h1v1h-1zM712 116h1v1h-1zM715 116h1v1h-1zM720 116h1v1h-1zM722 116h1v1h-1zM729 116h1v1h-1zM730 116h1v1h-1zM743 116h1v1h-1zM748 116h1v1h-1zM749 116h1v1h-1zM775 116h1v1h-1zM779 116h1v1h-1zM784 116h1v1h-1zM787 116h1v1h-1zM797 116h1v1h-1zM801 116h1v1h-1zM802 116h1v1h-1zM804 116h1v1h-1zM807 116h1v1h-1zM811 116h1v1h-1zM814 116h1v1h-1zM816 116h1v1h-1zM820 116h1v1h-1zM826 116h1v1h-1zM831 116h1v1h-1zM837 116h1v1h-1zM839 116h1v1h-1zM844 116h1v1h-1zM848 116h1v1h-1zM853 116h1v1h-1zM855 116h1v1h-1zM856 116h1v1h-1zM863 116h1v1h-1zM865 116h1v1h-1zM867 116h1v1h-1zM873 116h1v1h-1zM890 116h1v1h-1zM898 116h1v1h-1zM646 117h1v1h-1zM654 117h1v1h-1zM656 117h1v1h-1zM660 117h1v1h-1zM662 117h1v1h-1zM670 117h1v1h-1zM674 117h1v1h-1zM676 117h1v1h-1zM677 117h1v1h-1zM681 117h1v1h-1zM682 117h1v1h-1zM690 117h1v1h-1zM697 117h1v1h-1zM701 117h1v1h-1zM708 117h1v1h-1zM721 117h1v1h-1zM727 117h1v1h-1zM733 117h1v1h-1zM741 117h1v1h-1zM745 117h1v1h-1zM747 117h1v1h-1zM748 117h1v1h-1zM751 117h1v1h-1zM757 117h1v1h-1zM773 117h1v1h-1zM774 117h1v1h-1zM776 117h1v1h-1zM791 117h1v1h-1zM796 117h1v1h-1zM805 117h1v1h-1zM822 117h1v1h-1zM824 117h1v1h-1zM831 117h1v1h-1zM832 117h1v1h-1zM837 117h1v1h-1zM848 117h1v1h-1zM853 117h1v1h-1zM873 117h1v1h-1zM878 117h1v1h-1zM883 117h1v1h-1zM885 117h1v1h-1zM890 117h1v1h-1zM896 117h1v1h-1zM657 118h1v1h-1zM670 118h1v1h-1zM673 118h1v1h-1zM676 118h1v1h-1zM680 118h1v1h-1zM683 118h1v1h-1zM689 118h1v1h-1zM694 118h1v1h-1zM695 118h1v1h-1zM708 118h1v1h-1zM726 118h1v1h-1zM729 118h1v1h-1zM734 118h1v1h-1zM737 118h1v1h-1zM738 118h1v1h-1zM739 118h1v1h-1zM744 118h1v1h-1zM747 118h1v1h-1zM755 118h1v1h-1zM760 118h1v1h-1zM761 118h1v1h-1zM774 118h1v1h-1zM775 118h1v1h-1zM783 118h1v1h-1zM789 118h1v1h-1zM793 118h1v1h-1zM799 118h1v1h-1zM803 118h1v1h-1zM808 118h1v1h-1zM810 118h1v1h-1zM813 118h1v1h-1zM821 118h1v1h-1zM826 118h1v1h-1zM840 118h1v1h-1zM841 118h1v1h-1zM844 118h1v1h-1zM850 118h1v1h-1zM866 118h1v1h-1zM870 118h1v1h-1zM875 118h1v1h-1zM882 118h1v1h-1zM883 118h1v1h-1zM891 118h1v1h-1zM893 118h1v1h-1zM654 119h1v1h-1zM663 119h1v1h-1zM680 119h1v1h-1zM684 119h1v1h-1zM697 119h1v1h-1zM701 119h1v1h-1zM702 119h1v1h-1zM714 119h1v1h-1zM717 119h1v1h-1zM722 119h1v1h-1zM728 119h1v1h-1zM785 119h1v1h-1zM789 119h1v1h-1zM793 119h1v1h-1zM817 119h1v1h-1zM824 119h1v1h-1zM846 119h1v1h-1zM883 119h1v1h-1zM890 119h1v1h-1zM646 120h1v1h-1zM650 120h1v1h-1zM656 120h1v1h-1zM668 120h1v1h-1zM676 120h1v1h-1zM689 120h1v1h-1zM692 120h1v1h-1zM694 120h1v1h-1zM695 120h1v1h-1zM705 120h1v1h-1zM708 120h1v1h-1zM709 120h1v1h-1zM710 120h1v1h-1zM711 120h1v1h-1zM714 120h1v1h-1zM717 120h1v1h-1zM724 120h1v1h-1zM725 120h1v1h-1zM728 120h1v1h-1zM747 120h1v1h-1zM749 120h1v1h-1zM750 120h1v1h-1zM753 120h1v1h-1zM757 120h1v1h-1zM761 120h1v1h-1zM783 120h1v1h-1zM787 120h1v1h-1zM807 120h1v1h-1zM818 120h1v1h-1zM822 120h1v1h-1zM854 120h1v1h-1zM871 120h1v1h-1zM876 120h1v1h-1zM877 120h1v1h-1zM883 120h1v1h-1zM644 121h1v1h-1zM646 121h1v1h-1zM650 121h1v1h-1zM652 121h1v1h-1zM657 121h1v1h-1zM664 121h1v1h-1zM673 121h1v1h-1zM676 121h1v1h-1zM677 121h1v1h-1zM678 121h1v1h-1zM681 121h1v1h-1zM687 121h1v1h-1zM690 121h1v1h-1zM696 121h1v1h-1zM703 121h1v1h-1zM706 121h1v1h-1zM708 121h1v1h-1zM709 121h1v1h-1zM710 121h1v1h-1zM711 121h1v1h-1zM713 121h1v1h-1zM728 121h1v1h-1zM736 121h1v1h-1zM739 121h1v1h-1zM741 121h1v1h-1zM750 121h1v1h-1zM752 121h1v1h-1zM756 121h1v1h-1zM769 121h1v1h-1zM771 121h1v1h-1zM773 121h1v1h-1zM775 121h1v1h-1zM795 121h1v1h-1zM800 121h1v1h-1zM821 121h1v1h-1zM836 121h1v1h-1zM838 121h1v1h-1zM848 121h1v1h-1zM861 121h1v1h-1zM876 121h1v1h-1zM649 122h1v1h-1zM660 122h1v1h-1zM662 122h1v1h-1zM664 122h1v1h-1zM674 122h1v1h-1zM675 122h1v1h-1zM676 122h1v1h-1zM682 122h1v1h-1zM683 122h1v1h-1zM692 122h1v1h-1zM704 122h1v1h-1zM710 122h1v1h-1zM716 122h1v1h-1zM717 122h1v1h-1zM718 122h1v1h-1zM724 122h1v1h-1zM725 122h1v1h-1zM733 122h1v1h-1zM735 122h1v1h-1zM737 122h1v1h-1zM743 122h1v1h-1zM750 122h1v1h-1zM752 122h1v1h-1zM771 122h1v1h-1zM782 122h1v1h-1zM789 122h1v1h-1zM791 122h1v1h-1zM797 122h1v1h-1zM804 122h1v1h-1zM806 122h1v1h-1zM828 122h1v1h-1zM830 122h1v1h-1zM836 122h1v1h-1zM850 122h1v1h-1zM857 122h1v1h-1zM858 122h1v1h-1zM861 122h1v1h-1zM883 122h1v1h-1zM884 122h1v1h-1zM888 122h1v1h-1zM889 122h1v1h-1zM893 122h1v1h-1zM894 122h1v1h-1zM644 123h1v1h-1zM650 123h1v1h-1zM674 123h1v1h-1zM686 123h1v1h-1zM688 123h1v1h-1zM692 123h1v1h-1zM716 123h1v1h-1zM723 123h1v1h-1zM726 123h1v1h-1zM727 123h1v1h-1zM730 123h1v1h-1zM731 123h1v1h-1zM744 123h1v1h-1zM753 123h1v1h-1zM790 123h1v1h-1zM812 123h1v1h-1zM826 123h1v1h-1zM842 123h1v1h-1zM848 123h1v1h-1zM849 123h1v1h-1zM873 123h1v1h-1zM874 123h1v1h-1zM878 123h1v1h-1zM894 123h1v1h-1zM649 124h1v1h-1zM676 124h1v1h-1zM677 124h1v1h-1zM679 124h1v1h-1zM685 124h1v1h-1zM692 124h1v1h-1zM708 124h1v1h-1zM709 124h1v1h-1zM717 124h1v1h-1zM720 124h1v1h-1zM722 124h1v1h-1zM723 124h1v1h-1zM738 124h1v1h-1zM741 124h1v1h-1zM743 124h1v1h-1zM744 124h1v1h-1zM748 124h1v1h-1zM751 124h1v1h-1zM754 124h1v1h-1zM755 124h1v1h-1zM759 124h1v1h-1zM762 124h1v1h-1zM764 124h1v1h-1zM785 124h1v1h-1zM797 124h1v1h-1zM799 124h1v1h-1zM805 124h1v1h-1zM807 124h1v1h-1zM815 124h1v1h-1zM818 124h1v1h-1zM832 124h1v1h-1zM833 124h1v1h-1zM837 124h1v1h-1zM846 124h1v1h-1zM877 124h1v1h-1zM882 124h1v1h-1zM887 124h1v1h-1zM889 124h1v1h-1zM644 125h1v1h-1zM653 125h1v1h-1zM659 125h1v1h-1zM666 125h1v1h-1zM674 125h1v1h-1zM676 125h1v1h-1zM678 125h1v1h-1zM684 125h1v1h-1zM689 125h1v1h-1zM705 125h1v1h-1zM713 125h1v1h-1zM718 125h1v1h-1zM733 125h1v1h-1zM747 125h1v1h-1zM750 125h1v1h-1zM751 125h1v1h-1zM755 125h1v1h-1zM756 125h1v1h-1zM758 125h1v1h-1zM764 125h1v1h-1zM769 125h1v1h-1zM770 125h1v1h-1zM771 125h1v1h-1zM775 125h1v1h-1zM781 125h1v1h-1zM782 125h1v1h-1zM801 125h1v1h-1zM802 125h1v1h-1zM815 125h1v1h-1zM816 125h1v1h-1zM821 125h1v1h-1zM823 125h1v1h-1zM831 125h1v1h-1zM837 125h1v1h-1zM838 125h1v1h-1zM846 125h1v1h-1zM857 125h1v1h-1zM890 125h1v1h-1zM649 126h1v1h-1zM652 126h1v1h-1zM655 126h1v1h-1zM670 126h1v1h-1zM678 126h1v1h-1zM683 126h1v1h-1zM690 126h1v1h-1zM695 126h1v1h-1zM696 126h1v1h-1zM698 126h1v1h-1zM700 126h1v1h-1zM701 126h1v1h-1zM703 126h1v1h-1zM704 126h1v1h-1zM705 126h1v1h-1zM708 126h1v1h-1zM709 126h1v1h-1zM711 126h1v1h-1zM712 126h1v1h-1zM719 126h1v1h-1zM722 126h1v1h-1zM726 126h1v1h-1zM731 126h1v1h-1zM736 126h1v1h-1zM744 126h1v1h-1zM749 126h1v1h-1zM753 126h1v1h-1zM761 126h1v1h-1zM762 126h1v1h-1zM775 126h1v1h-1zM783 126h1v1h-1zM785 126h1v1h-1zM788 126h1v1h-1zM789 126h1v1h-1zM797 126h1v1h-1zM804 126h1v1h-1zM805 126h1v1h-1zM809 126h1v1h-1zM828 126h1v1h-1zM831 126h1v1h-1zM835 126h1v1h-1zM845 126h1v1h-1zM849 126h1v1h-1zM854 126h1v1h-1zM860 126h1v1h-1zM864 126h1v1h-1zM872 126h1v1h-1zM873 126h1v1h-1zM879 126h1v1h-1zM880 126h1v1h-1zM884 126h1v1h-1zM651 127h1v1h-1zM657 127h1v1h-1zM663 127h1v1h-1zM666 127h1v1h-1zM678 127h1v1h-1zM690 127h1v1h-1zM693 127h1v1h-1zM703 127h1v1h-1zM712 127h1v1h-1zM717 127h1v1h-1zM721 127h1v1h-1zM723 127h1v1h-1zM726 127h1v1h-1zM735 127h1v1h-1zM738 127h1v1h-1zM739 127h1v1h-1zM742 127h1v1h-1zM753 127h1v1h-1zM755 127h1v1h-1zM766 127h1v1h-1zM768 127h1v1h-1zM773 127h1v1h-1zM775 127h1v1h-1zM780 127h1v1h-1zM785 127h1v1h-1zM788 127h1v1h-1zM802 127h1v1h-1zM805 127h1v1h-1zM809 127h1v1h-1zM861 127h1v1h-1zM876 127h1v1h-1zM881 127h1v1h-1zM885 127h1v1h-1zM887 127h1v1h-1zM664 128h1v1h-1zM665 128h1v1h-1zM671 128h1v1h-1zM673 128h1v1h-1zM678 128h1v1h-1zM696 128h1v1h-1zM698 128h1v1h-1zM702 128h1v1h-1zM703 128h1v1h-1zM705 128h1v1h-1zM710 128h1v1h-1zM712 128h1v1h-1zM717 128h1v1h-1zM722 128h1v1h-1zM730 128h1v1h-1zM736 128h1v1h-1zM738 128h1v1h-1zM743 128h1v1h-1zM744 128h1v1h-1zM747 128h1v1h-1zM753 128h1v1h-1zM754 128h1v1h-1zM756 128h1v1h-1zM760 128h1v1h-1zM763 128h1v1h-1zM764 128h1v1h-1zM771 128h1v1h-1zM774 128h1v1h-1zM784 128h1v1h-1zM786 128h1v1h-1zM804 128h1v1h-1zM806 128h1v1h-1zM814 128h1v1h-1zM820 128h1v1h-1zM847 128h1v1h-1zM849 128h1v1h-1zM853 128h1v1h-1zM861 128h1v1h-1zM863 128h1v1h-1zM865 128h1v1h-1zM870 128h1v1h-1zM872 128h1v1h-1zM878 128h1v1h-1zM884 128h1v1h-1zM646 129h1v1h-1zM648 129h1v1h-1zM650 129h1v1h-1zM659 129h1v1h-1zM664 129h1v1h-1zM677 129h1v1h-1zM678 129h1v1h-1zM680 129h1v1h-1zM682 129h1v1h-1zM693 129h1v1h-1zM694 129h1v1h-1zM704 129h1v1h-1zM707 129h1v1h-1zM710 129h1v1h-1zM716 129h1v1h-1zM724 129h1v1h-1zM729 129h1v1h-1zM730 129h1v1h-1zM738 129h1v1h-1zM748 129h1v1h-1zM758 129h1v1h-1zM759 129h1v1h-1zM763 129h1v1h-1zM771 129h1v1h-1zM773 129h1v1h-1zM789 129h1v1h-1zM798 129h1v1h-1zM804 129h1v1h-1zM828 129h1v1h-1zM833 129h1v1h-1zM845 129h1v1h-1zM852 129h1v1h-1zM869 129h1v1h-1zM870 129h1v1h-1zM894 129h1v1h-1zM649 130h1v1h-1zM652 130h1v1h-1zM656 130h1v1h-1zM664 130h1v1h-1zM665 130h1v1h-1zM666 130h1v1h-1zM673 130h1v1h-1zM683 130h1v1h-1zM688 130h1v1h-1zM689 130h1v1h-1zM693 130h1v1h-1zM701 130h1v1h-1zM718 130h1v1h-1zM720 130h1v1h-1zM724 130h1v1h-1zM744 130h1v1h-1zM745 130h1v1h-1zM756 130h1v1h-1zM766 130h1v1h-1zM773 130h1v1h-1zM791 130h1v1h-1zM809 130h1v1h-1zM811 130h1v1h-1zM812 130h1v1h-1zM839 130h1v1h-1zM854 130h1v1h-1zM874 130h1v1h-1zM888 130h1v1h-1zM648 131h1v1h-1zM650 131h1v1h-1zM661 131h1v1h-1zM662 131h1v1h-1zM665 131h1v1h-1zM679 131h1v1h-1zM683 131h1v1h-1zM685 131h1v1h-1zM687 131h1v1h-1zM697 131h1v1h-1zM702 131h1v1h-1zM711 131h1v1h-1zM717 131h1v1h-1zM727 131h1v1h-1zM730 131h1v1h-1zM734 131h1v1h-1zM741 131h1v1h-1zM760 131h1v1h-1zM776 131h1v1h-1zM788 131h1v1h-1zM808 131h1v1h-1zM812 131h1v1h-1zM814 131h1v1h-1zM818 131h1v1h-1zM820 131h1v1h-1zM829 131h1v1h-1zM870 131h1v1h-1zM872 131h1v1h-1zM649 132h1v1h-1zM653 132h1v1h-1zM667 132h1v1h-1zM675 132h1v1h-1zM676 132h1v1h-1zM684 132h1v1h-1zM693 132h1v1h-1zM694 132h1v1h-1zM706 132h1v1h-1zM708 132h1v1h-1zM710 132h1v1h-1zM711 132h1v1h-1zM716 132h1v1h-1zM717 132h1v1h-1zM741 132h1v1h-1zM742 132h1v1h-1zM752 132h1v1h-1zM753 132h1v1h-1zM755 132h1v1h-1zM758 132h1v1h-1zM768 132h1v1h-1zM769 132h1v1h-1zM773 132h1v1h-1zM776 132h1v1h-1zM784 132h1v1h-1zM793 132h1v1h-1zM804 132h1v1h-1zM806 132h1v1h-1zM816 132h1v1h-1zM819 132h1v1h-1zM833 132h1v1h-1zM836 132h1v1h-1zM841 132h1v1h-1zM857 132h1v1h-1zM870 132h1v1h-1zM878 132h1v1h-1zM882 132h1v1h-1zM886 132h1v1h-1zM895 132h1v1h-1zM648 133h1v1h-1zM652 133h1v1h-1zM659 133h1v1h-1zM660 133h1v1h-1zM661 133h1v1h-1zM669 133h1v1h-1zM673 133h1v1h-1zM678 133h1v1h-1zM695 133h1v1h-1zM697 133h1v1h-1zM717 133h1v1h-1zM719 133h1v1h-1zM722 133h1v1h-1zM731 133h1v1h-1zM732 133h1v1h-1zM759 133h1v1h-1zM787 133h1v1h-1zM810 133h1v1h-1zM824 133h1v1h-1zM833 133h1v1h-1zM875 133h1v1h-1zM882 133h1v1h-1zM891 133h1v1h-1zM644 134h1v1h-1zM654 134h1v1h-1zM657 134h1v1h-1zM658 134h1v1h-1zM695 134h1v1h-1zM696 134h1v1h-1zM697 134h1v1h-1zM700 134h1v1h-1zM710 134h1v1h-1zM749 134h1v1h-1zM750 134h1v1h-1zM760 134h1v1h-1zM765 134h1v1h-1zM794 134h1v1h-1zM801 134h1v1h-1zM812 134h1v1h-1zM819 134h1v1h-1zM820 134h1v1h-1zM835 134h1v1h-1zM845 134h1v1h-1zM847 134h1v1h-1zM872 134h1v1h-1zM894 134h1v1h-1zM647 135h1v1h-1zM655 135h1v1h-1zM656 135h1v1h-1zM664 135h1v1h-1zM684 135h1v1h-1zM703 135h1v1h-1zM707 135h1v1h-1zM709 135h1v1h-1zM710 135h1v1h-1zM725 135h1v1h-1zM731 135h1v1h-1zM743 135h1v1h-1zM758 135h1v1h-1zM767 135h1v1h-1zM819 135h1v1h-1zM822 135h1v1h-1zM871 135h1v1h-1zM876 135h1v1h-1zM887 135h1v1h-1zM893 135h1v1h-1zM897 135h1v1h-1zM645 136h1v1h-1zM653 136h1v1h-1zM662 136h1v1h-1zM676 136h1v1h-1zM677 136h1v1h-1zM678 136h1v1h-1zM679 136h1v1h-1zM680 136h1v1h-1zM682 136h1v1h-1zM689 136h1v1h-1zM694 136h1v1h-1zM709 136h1v1h-1zM715 136h1v1h-1zM718 136h1v1h-1zM720 136h1v1h-1zM724 136h1v1h-1zM740 136h1v1h-1zM743 136h1v1h-1zM751 136h1v1h-1zM775 136h1v1h-1zM777 136h1v1h-1zM782 136h1v1h-1zM789 136h1v1h-1zM796 136h1v1h-1zM810 136h1v1h-1zM815 136h1v1h-1zM817 136h1v1h-1zM665 137h1v1h-1zM666 137h1v1h-1zM676 137h1v1h-1zM677 137h1v1h-1zM679 137h1v1h-1zM682 137h1v1h-1zM693 137h1v1h-1zM696 137h1v1h-1zM711 137h1v1h-1zM721 137h1v1h-1zM725 137h1v1h-1zM733 137h1v1h-1zM738 137h1v1h-1zM743 137h1v1h-1zM745 137h1v1h-1zM748 137h1v1h-1zM750 137h1v1h-1zM752 137h1v1h-1zM754 137h1v1h-1zM755 137h1v1h-1zM789 137h1v1h-1zM790 137h1v1h-1zM794 137h1v1h-1zM820 137h1v1h-1zM832 137h1v1h-1zM840 137h1v1h-1zM849 137h1v1h-1zM852 137h1v1h-1zM883 137h1v1h-1zM886 137h1v1h-1zM896 137h1v1h-1zM650 138h1v1h-1zM654 138h1v1h-1zM660 138h1v1h-1zM662 138h1v1h-1zM663 138h1v1h-1zM684 138h1v1h-1zM688 138h1v1h-1zM689 138h1v1h-1zM709 138h1v1h-1zM716 138h1v1h-1zM717 138h1v1h-1zM718 138h1v1h-1zM727 138h1v1h-1zM728 138h1v1h-1zM749 138h1v1h-1zM755 138h1v1h-1zM759 138h1v1h-1zM760 138h1v1h-1zM765 138h1v1h-1zM773 138h1v1h-1zM787 138h1v1h-1zM788 138h1v1h-1zM804 138h1v1h-1zM809 138h1v1h-1zM829 138h1v1h-1zM830 138h1v1h-1zM843 138h1v1h-1zM847 138h1v1h-1zM849 138h1v1h-1zM868 138h1v1h-1zM870 138h1v1h-1zM887 138h1v1h-1zM889 138h1v1h-1zM655 139h1v1h-1zM662 139h1v1h-1zM679 139h1v1h-1zM680 139h1v1h-1zM689 139h1v1h-1zM691 139h1v1h-1zM696 139h1v1h-1zM701 139h1v1h-1zM706 139h1v1h-1zM708 139h1v1h-1zM718 139h1v1h-1zM723 139h1v1h-1zM724 139h1v1h-1zM726 139h1v1h-1zM733 139h1v1h-1zM748 139h1v1h-1zM751 139h1v1h-1zM762 139h1v1h-1zM763 139h1v1h-1zM765 139h1v1h-1zM776 139h1v1h-1zM781 139h1v1h-1zM782 139h1v1h-1zM791 139h1v1h-1zM792 139h1v1h-1zM795 139h1v1h-1zM831 139h1v1h-1zM833 139h1v1h-1zM837 139h1v1h-1zM858 139h1v1h-1zM871 139h1v1h-1zM878 139h1v1h-1zM645 140h1v1h-1zM651 140h1v1h-1zM661 140h1v1h-1zM667 140h1v1h-1zM670 140h1v1h-1zM671 140h1v1h-1zM684 140h1v1h-1zM691 140h1v1h-1zM700 140h1v1h-1zM707 140h1v1h-1zM711 140h1v1h-1zM720 140h1v1h-1zM722 140h1v1h-1zM723 140h1v1h-1zM730 140h1v1h-1zM743 140h1v1h-1zM747 140h1v1h-1zM748 140h1v1h-1zM750 140h1v1h-1zM752 140h1v1h-1zM788 140h1v1h-1zM800 140h1v1h-1zM803 140h1v1h-1zM816 140h1v1h-1zM818 140h1v1h-1zM820 140h1v1h-1zM821 140h1v1h-1zM829 140h1v1h-1zM847 140h1v1h-1zM857 140h1v1h-1zM870 140h1v1h-1zM881 140h1v1h-1zM882 140h1v1h-1zM887 140h1v1h-1zM647 141h1v1h-1zM655 141h1v1h-1zM661 141h1v1h-1zM662 141h1v1h-1zM665 141h1v1h-1zM676 141h1v1h-1zM688 141h1v1h-1zM690 141h1v1h-1zM698 141h1v1h-1zM701 141h1v1h-1zM706 141h1v1h-1zM708 141h1v1h-1zM712 141h1v1h-1zM716 141h1v1h-1zM717 141h1v1h-1zM737 141h1v1h-1zM744 141h1v1h-1zM753 141h1v1h-1zM774 141h1v1h-1zM777 141h1v1h-1zM799 141h1v1h-1zM807 141h1v1h-1zM812 141h1v1h-1zM814 141h1v1h-1zM822 141h1v1h-1zM830 141h1v1h-1zM840 141h1v1h-1zM842 141h1v1h-1zM868 141h1v1h-1zM874 141h1v1h-1zM882 141h1v1h-1zM649 142h1v1h-1zM657 142h1v1h-1zM666 142h1v1h-1zM667 142h1v1h-1zM673 142h1v1h-1zM677 142h1v1h-1zM678 142h1v1h-1zM690 142h1v1h-1zM696 142h1v1h-1zM709 142h1v1h-1zM712 142h1v1h-1zM726 142h1v1h-1zM732 142h1v1h-1zM735 142h1v1h-1zM739 142h1v1h-1zM744 142h1v1h-1zM745 142h1v1h-1zM747 142h1v1h-1zM750 142h1v1h-1zM755 142h1v1h-1zM764 142h1v1h-1zM767 142h1v1h-1zM768 142h1v1h-1zM775 142h1v1h-1zM785 142h1v1h-1zM797 142h1v1h-1zM806 142h1v1h-1zM807 142h1v1h-1zM808 142h1v1h-1zM833 142h1v1h-1zM862 142h1v1h-1zM870 142h1v1h-1zM873 142h1v1h-1zM874 142h1v1h-1zM894 142h1v1h-1zM646 143h1v1h-1zM656 143h1v1h-1zM661 143h1v1h-1zM663 143h1v1h-1zM680 143h1v1h-1zM690 143h1v1h-1zM692 143h1v1h-1zM697 143h1v1h-1zM701 143h1v1h-1zM711 143h1v1h-1zM713 143h1v1h-1zM720 143h1v1h-1zM724 143h1v1h-1zM731 143h1v1h-1zM744 143h1v1h-1zM749 143h1v1h-1zM754 143h1v1h-1zM770 143h1v1h-1zM775 143h1v1h-1zM781 143h1v1h-1zM796 143h1v1h-1zM815 143h1v1h-1zM819 143h1v1h-1zM829 143h1v1h-1zM836 143h1v1h-1zM838 143h1v1h-1zM839 143h1v1h-1zM841 143h1v1h-1zM882 143h1v1h-1zM895 143h1v1h-1zM652 144h1v1h-1zM658 144h1v1h-1zM662 144h1v1h-1zM684 144h1v1h-1zM686 144h1v1h-1zM690 144h1v1h-1zM691 144h1v1h-1zM700 144h1v1h-1zM702 144h1v1h-1zM704 144h1v1h-1zM706 144h1v1h-1zM709 144h1v1h-1zM711 144h1v1h-1zM728 144h1v1h-1zM744 144h1v1h-1zM755 144h1v1h-1zM757 144h1v1h-1zM764 144h1v1h-1zM776 144h1v1h-1zM787 144h1v1h-1zM802 144h1v1h-1zM805 144h1v1h-1zM812 144h1v1h-1zM814 144h1v1h-1zM824 144h1v1h-1zM826 144h1v1h-1zM827 144h1v1h-1zM828 144h1v1h-1zM829 144h1v1h-1zM842 144h1v1h-1zM846 144h1v1h-1zM849 144h1v1h-1zM855 144h1v1h-1zM861 144h1v1h-1zM866 144h1v1h-1zM875 144h1v1h-1zM884 144h1v1h-1zM896 144h1v1h-1zM898 144h1v1h-1zM646 145h1v1h-1zM661 145h1v1h-1zM664 145h1v1h-1zM676 145h1v1h-1zM678 145h1v1h-1zM679 145h1v1h-1zM684 145h1v1h-1zM687 145h1v1h-1zM690 145h1v1h-1zM708 145h1v1h-1zM709 145h1v1h-1zM716 145h1v1h-1zM718 145h1v1h-1zM720 145h1v1h-1zM723 145h1v1h-1zM737 145h1v1h-1zM738 145h1v1h-1zM740 145h1v1h-1zM743 145h1v1h-1zM747 145h1v1h-1zM758 145h1v1h-1zM760 145h1v1h-1zM762 145h1v1h-1zM763 145h1v1h-1zM765 145h1v1h-1zM798 145h1v1h-1zM805 145h1v1h-1zM814 145h1v1h-1zM817 145h1v1h-1zM837 145h1v1h-1zM841 145h1v1h-1zM844 145h1v1h-1zM851 145h1v1h-1zM853 145h1v1h-1zM857 145h1v1h-1zM858 145h1v1h-1zM864 145h1v1h-1zM870 145h1v1h-1zM882 145h1v1h-1zM883 145h1v1h-1zM885 145h1v1h-1zM890 145h1v1h-1zM657 146h1v1h-1zM672 146h1v1h-1zM676 146h1v1h-1zM677 146h1v1h-1zM679 146h1v1h-1zM680 146h1v1h-1zM682 146h1v1h-1zM685 146h1v1h-1zM694 146h1v1h-1zM695 146h1v1h-1zM698 146h1v1h-1zM701 146h1v1h-1zM702 146h1v1h-1zM704 146h1v1h-1zM708 146h1v1h-1zM711 146h1v1h-1zM712 146h1v1h-1zM717 146h1v1h-1zM721 146h1v1h-1zM722 146h1v1h-1zM724 146h1v1h-1zM737 146h1v1h-1zM741 146h1v1h-1zM742 146h1v1h-1zM743 146h1v1h-1zM744 146h1v1h-1zM745 146h1v1h-1zM754 146h1v1h-1zM758 146h1v1h-1zM762 146h1v1h-1zM775 146h1v1h-1zM784 146h1v1h-1zM791 146h1v1h-1zM799 146h1v1h-1zM801 146h1v1h-1zM805 146h1v1h-1zM811 146h1v1h-1zM812 146h1v1h-1zM816 146h1v1h-1zM819 146h1v1h-1zM822 146h1v1h-1zM833 146h1v1h-1zM835 146h1v1h-1zM836 146h1v1h-1zM846 146h1v1h-1zM867 146h1v1h-1zM655 147h1v1h-1zM660 147h1v1h-1zM664 147h1v1h-1zM665 147h1v1h-1zM666 147h1v1h-1zM670 147h1v1h-1zM672 147h1v1h-1zM673 147h1v1h-1zM678 147h1v1h-1zM681 147h1v1h-1zM695 147h1v1h-1zM699 147h1v1h-1zM701 147h1v1h-1zM712 147h1v1h-1zM713 147h1v1h-1zM719 147h1v1h-1zM724 147h1v1h-1zM725 147h1v1h-1zM735 147h1v1h-1zM741 147h1v1h-1zM745 147h1v1h-1zM751 147h1v1h-1zM753 147h1v1h-1zM756 147h1v1h-1zM758 147h1v1h-1zM780 147h1v1h-1zM787 147h1v1h-1zM793 147h1v1h-1zM812 147h1v1h-1zM813 147h1v1h-1zM822 147h1v1h-1zM827 147h1v1h-1zM829 147h1v1h-1zM832 147h1v1h-1zM837 147h1v1h-1zM844 147h1v1h-1zM866 147h1v1h-1zM871 147h1v1h-1zM888 147h1v1h-1zM892 147h1v1h-1zM898 147h1v1h-1zM647 148h1v1h-1zM649 148h1v1h-1zM656 148h1v1h-1zM658 148h1v1h-1zM671 148h1v1h-1zM676 148h1v1h-1zM684 148h1v1h-1zM691 148h1v1h-1zM710 148h1v1h-1zM726 148h1v1h-1zM727 148h1v1h-1zM730 148h1v1h-1zM738 148h1v1h-1zM739 148h1v1h-1zM740 148h1v1h-1zM741 148h1v1h-1zM742 148h1v1h-1zM758 148h1v1h-1zM768 148h1v1h-1zM770 148h1v1h-1zM771 148h1v1h-1zM772 148h1v1h-1zM773 148h1v1h-1zM791 148h1v1h-1zM794 148h1v1h-1zM805 148h1v1h-1zM808 148h1v1h-1zM811 148h1v1h-1zM813 148h1v1h-1zM814 148h1v1h-1zM823 148h1v1h-1zM833 148h1v1h-1zM840 148h1v1h-1zM842 148h1v1h-1zM844 148h1v1h-1zM846 148h1v1h-1zM854 148h1v1h-1zM872 148h1v1h-1zM881 148h1v1h-1zM882 148h1v1h-1zM883 148h1v1h-1zM649 149h1v1h-1zM652 149h1v1h-1zM654 149h1v1h-1zM657 149h1v1h-1zM667 149h1v1h-1zM676 149h1v1h-1zM677 149h1v1h-1zM681 149h1v1h-1zM690 149h1v1h-1zM691 149h1v1h-1zM695 149h1v1h-1zM698 149h1v1h-1zM702 149h1v1h-1zM707 149h1v1h-1zM712 149h1v1h-1zM716 149h1v1h-1zM725 149h1v1h-1zM734 149h1v1h-1zM743 149h1v1h-1zM744 149h1v1h-1zM745 149h1v1h-1zM748 149h1v1h-1zM749 149h1v1h-1zM750 149h1v1h-1zM752 149h1v1h-1zM753 149h1v1h-1zM763 149h1v1h-1zM780 149h1v1h-1zM790 149h1v1h-1zM800 149h1v1h-1zM808 149h1v1h-1zM831 149h1v1h-1zM832 149h1v1h-1zM838 149h1v1h-1zM841 149h1v1h-1zM852 149h1v1h-1zM872 149h1v1h-1zM876 149h1v1h-1zM883 149h1v1h-1zM897 149h1v1h-1zM649 150h1v1h-1zM650 150h1v1h-1zM665 150h1v1h-1zM674 150h1v1h-1zM677 150h1v1h-1zM679 150h1v1h-1zM684 150h1v1h-1zM685 150h1v1h-1zM689 150h1v1h-1zM699 150h1v1h-1zM715 150h1v1h-1zM721 150h1v1h-1zM733 150h1v1h-1zM741 150h1v1h-1zM748 150h1v1h-1zM752 150h1v1h-1zM769 150h1v1h-1zM773 150h1v1h-1zM780 150h1v1h-1zM784 150h1v1h-1zM805 150h1v1h-1zM809 150h1v1h-1zM824 150h1v1h-1zM836 150h1v1h-1zM868 150h1v1h-1zM873 150h1v1h-1zM874 150h1v1h-1zM877 150h1v1h-1zM644 151h1v1h-1zM645 151h1v1h-1zM647 151h1v1h-1zM648 151h1v1h-1zM653 151h1v1h-1zM658 151h1v1h-1zM668 151h1v1h-1zM673 151h1v1h-1zM681 151h1v1h-1zM683 151h1v1h-1zM709 151h1v1h-1zM716 151h1v1h-1zM720 151h1v1h-1zM723 151h1v1h-1zM725 151h1v1h-1zM739 151h1v1h-1zM747 151h1v1h-1zM749 151h1v1h-1zM752 151h1v1h-1zM753 151h1v1h-1zM754 151h1v1h-1zM762 151h1v1h-1zM771 151h1v1h-1zM776 151h1v1h-1zM789 151h1v1h-1zM804 151h1v1h-1zM806 151h1v1h-1zM823 151h1v1h-1zM836 151h1v1h-1zM841 151h1v1h-1zM850 151h1v1h-1zM875 151h1v1h-1zM882 151h1v1h-1zM650 152h1v1h-1zM652 152h1v1h-1zM672 152h1v1h-1zM676 152h1v1h-1zM678 152h1v1h-1zM682 152h1v1h-1zM687 152h1v1h-1zM689 152h1v1h-1zM695 152h1v1h-1zM700 152h1v1h-1zM702 152h1v1h-1zM706 152h1v1h-1zM710 152h1v1h-1zM715 152h1v1h-1zM719 152h1v1h-1zM723 152h1v1h-1zM724 152h1v1h-1zM728 152h1v1h-1zM742 152h1v1h-1zM746 152h1v1h-1zM761 152h1v1h-1zM762 152h1v1h-1zM777 152h1v1h-1zM800 152h1v1h-1zM803 152h1v1h-1zM809 152h1v1h-1zM817 152h1v1h-1zM818 152h1v1h-1zM825 152h1v1h-1zM828 152h1v1h-1zM835 152h1v1h-1zM836 152h1v1h-1zM850 152h1v1h-1zM868 152h1v1h-1zM876 152h1v1h-1zM879 152h1v1h-1zM894 152h1v1h-1zM647 153h1v1h-1zM651 153h1v1h-1zM664 153h1v1h-1zM666 153h1v1h-1zM669 153h1v1h-1zM677 153h1v1h-1zM681 153h1v1h-1zM682 153h1v1h-1zM683 153h1v1h-1zM687 153h1v1h-1zM689 153h1v1h-1zM691 153h1v1h-1zM692 153h1v1h-1zM711 153h1v1h-1zM712 153h1v1h-1zM713 153h1v1h-1zM723 153h1v1h-1zM725 153h1v1h-1zM738 153h1v1h-1zM740 153h1v1h-1zM746 153h1v1h-1zM757 153h1v1h-1zM766 153h1v1h-1zM782 153h1v1h-1zM806 153h1v1h-1zM810 153h1v1h-1zM820 153h1v1h-1zM831 153h1v1h-1zM833 153h1v1h-1zM845 153h1v1h-1zM850 153h1v1h-1zM853 153h1v1h-1zM870 153h1v1h-1zM873 153h1v1h-1zM876 153h1v1h-1zM881 153h1v1h-1zM891 153h1v1h-1zM893 153h1v1h-1zM894 153h1v1h-1zM897 153h1v1h-1zM647 154h1v1h-1zM648 154h1v1h-1zM654 154h1v1h-1zM658 154h1v1h-1zM661 154h1v1h-1zM665 154h1v1h-1zM674 154h1v1h-1zM675 154h1v1h-1zM676 154h1v1h-1zM679 154h1v1h-1zM701 154h1v1h-1zM705 154h1v1h-1zM708 154h1v1h-1zM710 154h1v1h-1zM714 154h1v1h-1zM720 154h1v1h-1zM727 154h1v1h-1zM730 154h1v1h-1zM732 154h1v1h-1zM741 154h1v1h-1zM747 154h1v1h-1zM748 154h1v1h-1zM749 154h1v1h-1zM750 154h1v1h-1zM752 154h1v1h-1zM755 154h1v1h-1zM759 154h1v1h-1zM761 154h1v1h-1zM777 154h1v1h-1zM786 154h1v1h-1zM788 154h1v1h-1zM795 154h1v1h-1zM804 154h1v1h-1zM814 154h1v1h-1zM815 154h1v1h-1zM816 154h1v1h-1zM831 154h1v1h-1zM850 154h1v1h-1zM852 154h1v1h-1zM887 154h1v1h-1zM895 154h1v1h-1zM898 154h1v1h-1zM644 155h1v1h-1zM645 155h1v1h-1zM666 155h1v1h-1zM675 155h1v1h-1zM679 155h1v1h-1zM680 155h1v1h-1zM688 155h1v1h-1zM690 155h1v1h-1zM694 155h1v1h-1zM700 155h1v1h-1zM709 155h1v1h-1zM710 155h1v1h-1zM725 155h1v1h-1zM728 155h1v1h-1zM730 155h1v1h-1zM731 155h1v1h-1zM735 155h1v1h-1zM737 155h1v1h-1zM743 155h1v1h-1zM745 155h1v1h-1zM747 155h1v1h-1zM750 155h1v1h-1zM751 155h1v1h-1zM762 155h1v1h-1zM764 155h1v1h-1zM773 155h1v1h-1zM774 155h1v1h-1zM777 155h1v1h-1zM781 155h1v1h-1zM790 155h1v1h-1zM797 155h1v1h-1zM822 155h1v1h-1zM824 155h1v1h-1zM832 155h1v1h-1zM851 155h1v1h-1zM855 155h1v1h-1zM869 155h1v1h-1zM884 155h1v1h-1zM886 155h1v1h-1zM894 155h1v1h-1zM647 156h1v1h-1zM648 156h1v1h-1zM655 156h1v1h-1zM660 156h1v1h-1zM664 156h1v1h-1zM665 156h1v1h-1zM668 156h1v1h-1zM672 156h1v1h-1zM677 156h1v1h-1zM679 156h1v1h-1zM681 156h1v1h-1zM686 156h1v1h-1zM697 156h1v1h-1zM709 156h1v1h-1zM715 156h1v1h-1zM717 156h1v1h-1zM731 156h1v1h-1zM740 156h1v1h-1zM742 156h1v1h-1zM748 156h1v1h-1zM749 156h1v1h-1zM754 156h1v1h-1zM763 156h1v1h-1zM773 156h1v1h-1zM779 156h1v1h-1zM791 156h1v1h-1zM792 156h1v1h-1zM793 156h1v1h-1zM801 156h1v1h-1zM806 156h1v1h-1zM807 156h1v1h-1zM810 156h1v1h-1zM819 156h1v1h-1zM824 156h1v1h-1zM832 156h1v1h-1zM840 156h1v1h-1zM841 156h1v1h-1zM848 156h1v1h-1zM875 156h1v1h-1zM883 156h1v1h-1zM889 156h1v1h-1zM897 156h1v1h-1zM899 156h1v1h-1zM644 157h1v1h-1zM645 157h1v1h-1zM654 157h1v1h-1zM656 157h1v1h-1zM664 157h1v1h-1zM677 157h1v1h-1zM680 157h1v1h-1zM688 157h1v1h-1zM689 157h1v1h-1zM692 157h1v1h-1zM693 157h1v1h-1zM709 157h1v1h-1zM726 157h1v1h-1zM736 157h1v1h-1zM742 157h1v1h-1zM751 157h1v1h-1zM755 157h1v1h-1zM764 157h1v1h-1zM771 157h1v1h-1zM799 157h1v1h-1zM800 157h1v1h-1zM812 157h1v1h-1zM818 157h1v1h-1zM825 157h1v1h-1zM831 157h1v1h-1zM849 157h1v1h-1zM852 157h1v1h-1zM854 157h1v1h-1zM868 157h1v1h-1zM884 157h1v1h-1zM896 157h1v1h-1zM644 158h1v1h-1zM648 158h1v1h-1zM652 158h1v1h-1zM656 158h1v1h-1zM661 158h1v1h-1zM662 158h1v1h-1zM664 158h1v1h-1zM669 158h1v1h-1zM672 158h1v1h-1zM676 158h1v1h-1zM677 158h1v1h-1zM680 158h1v1h-1zM686 158h1v1h-1zM713 158h1v1h-1zM716 158h1v1h-1zM726 158h1v1h-1zM727 158h1v1h-1zM741 158h1v1h-1zM742 158h1v1h-1zM747 158h1v1h-1zM752 158h1v1h-1zM754 158h1v1h-1zM772 158h1v1h-1zM777 158h1v1h-1zM781 158h1v1h-1zM790 158h1v1h-1zM813 158h1v1h-1zM822 158h1v1h-1zM842 158h1v1h-1zM853 158h1v1h-1zM857 158h1v1h-1zM863 158h1v1h-1zM864 158h1v1h-1zM866 158h1v1h-1zM873 158h1v1h-1zM876 158h1v1h-1zM879 158h1v1h-1zM645 159h1v1h-1zM666 159h1v1h-1zM676 159h1v1h-1zM689 159h1v1h-1zM696 159h1v1h-1zM704 159h1v1h-1zM710 159h1v1h-1zM722 159h1v1h-1zM724 159h1v1h-1zM725 159h1v1h-1zM726 159h1v1h-1zM732 159h1v1h-1zM737 159h1v1h-1zM741 159h1v1h-1zM747 159h1v1h-1zM750 159h1v1h-1zM755 159h1v1h-1zM757 159h1v1h-1zM766 159h1v1h-1zM770 159h1v1h-1zM773 159h1v1h-1zM779 159h1v1h-1zM781 159h1v1h-1zM790 159h1v1h-1zM791 159h1v1h-1zM831 159h1v1h-1zM852 159h1v1h-1zM857 159h1v1h-1zM865 159h1v1h-1zM870 159h1v1h-1zM888 159h1v1h-1zM891 159h1v1h-1zM646 160h1v1h-1zM647 160h1v1h-1zM654 160h1v1h-1zM655 160h1v1h-1zM656 160h1v1h-1zM660 160h1v1h-1zM671 160h1v1h-1zM672 160h1v1h-1zM676 160h1v1h-1zM678 160h1v1h-1zM682 160h1v1h-1zM688 160h1v1h-1zM689 160h1v1h-1zM702 160h1v1h-1zM703 160h1v1h-1zM712 160h1v1h-1zM714 160h1v1h-1zM717 160h1v1h-1zM723 160h1v1h-1zM725 160h1v1h-1zM730 160h1v1h-1zM731 160h1v1h-1zM735 160h1v1h-1zM738 160h1v1h-1zM745 160h1v1h-1zM800 160h1v1h-1zM801 160h1v1h-1zM806 160h1v1h-1zM807 160h1v1h-1zM809 160h1v1h-1zM814 160h1v1h-1zM819 160h1v1h-1zM848 160h1v1h-1zM856 160h1v1h-1zM861 160h1v1h-1zM867 160h1v1h-1zM882 160h1v1h-1zM893 160h1v1h-1zM644 161h1v1h-1zM645 161h1v1h-1zM655 161h1v1h-1zM666 161h1v1h-1zM669 161h1v1h-1zM680 161h1v1h-1zM681 161h1v1h-1zM688 161h1v1h-1zM689 161h1v1h-1zM690 161h1v1h-1zM692 161h1v1h-1zM700 161h1v1h-1zM705 161h1v1h-1zM708 161h1v1h-1zM710 161h1v1h-1zM713 161h1v1h-1zM715 161h1v1h-1zM719 161h1v1h-1zM727 161h1v1h-1zM730 161h1v1h-1zM732 161h1v1h-1zM737 161h1v1h-1zM743 161h1v1h-1zM745 161h1v1h-1zM752 161h1v1h-1zM755 161h1v1h-1zM760 161h1v1h-1zM763 161h1v1h-1zM766 161h1v1h-1zM771 161h1v1h-1zM773 161h1v1h-1zM783 161h1v1h-1zM789 161h1v1h-1zM790 161h1v1h-1zM806 161h1v1h-1zM826 161h1v1h-1zM829 161h1v1h-1zM832 161h1v1h-1zM835 161h1v1h-1zM836 161h1v1h-1zM851 161h1v1h-1zM855 161h1v1h-1zM863 161h1v1h-1zM869 161h1v1h-1zM870 161h1v1h-1zM873 161h1v1h-1zM877 161h1v1h-1zM645 162h1v1h-1zM663 162h1v1h-1zM666 162h1v1h-1zM671 162h1v1h-1zM672 162h1v1h-1zM677 162h1v1h-1zM680 162h1v1h-1zM681 162h1v1h-1zM684 162h1v1h-1zM700 162h1v1h-1zM709 162h1v1h-1zM711 162h1v1h-1zM715 162h1v1h-1zM716 162h1v1h-1zM719 162h1v1h-1zM722 162h1v1h-1zM724 162h1v1h-1zM732 162h1v1h-1zM743 162h1v1h-1zM744 162h1v1h-1zM751 162h1v1h-1zM752 162h1v1h-1zM753 162h1v1h-1zM754 162h1v1h-1zM755 162h1v1h-1zM757 162h1v1h-1zM761 162h1v1h-1zM763 162h1v1h-1zM769 162h1v1h-1zM770 162h1v1h-1zM784 162h1v1h-1zM806 162h1v1h-1zM808 162h1v1h-1zM817 162h1v1h-1zM818 162h1v1h-1zM846 162h1v1h-1zM856 162h1v1h-1zM863 162h1v1h-1zM885 162h1v1h-1zM899 162h1v1h-1zM646 163h1v1h-1zM650 163h1v1h-1zM651 163h1v1h-1zM658 163h1v1h-1zM662 163h1v1h-1zM665 163h1v1h-1zM678 163h1v1h-1zM710 163h1v1h-1zM720 163h1v1h-1zM728 163h1v1h-1zM730 163h1v1h-1zM731 163h1v1h-1zM732 163h1v1h-1zM733 163h1v1h-1zM738 163h1v1h-1zM739 163h1v1h-1zM749 163h1v1h-1zM767 163h1v1h-1zM771 163h1v1h-1zM781 163h1v1h-1zM782 163h1v1h-1zM789 163h1v1h-1zM792 163h1v1h-1zM811 163h1v1h-1zM815 163h1v1h-1zM817 163h1v1h-1zM818 163h1v1h-1zM819 163h1v1h-1zM845 163h1v1h-1zM856 163h1v1h-1zM862 163h1v1h-1zM871 163h1v1h-1zM882 163h1v1h-1zM884 163h1v1h-1zM647 164h1v1h-1zM654 164h1v1h-1zM669 164h1v1h-1zM676 164h1v1h-1zM694 164h1v1h-1zM712 164h1v1h-1zM718 164h1v1h-1zM720 164h1v1h-1zM721 164h1v1h-1zM726 164h1v1h-1zM744 164h1v1h-1zM746 164h1v1h-1zM749 164h1v1h-1zM757 164h1v1h-1zM764 164h1v1h-1zM779 164h1v1h-1zM816 164h1v1h-1zM820 164h1v1h-1zM828 164h1v1h-1zM839 164h1v1h-1zM846 164h1v1h-1zM855 164h1v1h-1zM874 164h1v1h-1zM875 164h1v1h-1zM884 164h1v1h-1zM885 164h1v1h-1zM660 165h1v1h-1zM693 165h1v1h-1zM697 165h1v1h-1zM698 165h1v1h-1zM702 165h1v1h-1zM705 165h1v1h-1zM714 165h1v1h-1zM720 165h1v1h-1zM722 165h1v1h-1zM728 165h1v1h-1zM732 165h1v1h-1zM734 165h1v1h-1zM736 165h1v1h-1zM763 165h1v1h-1zM765 165h1v1h-1zM770 165h1v1h-1zM778 165h1v1h-1zM781 165h1v1h-1zM787 165h1v1h-1zM804 165h1v1h-1zM813 165h1v1h-1zM817 165h1v1h-1zM837 165h1v1h-1zM853 165h1v1h-1zM854 165h1v1h-1zM873 165h1v1h-1zM880 165h1v1h-1zM882 165h1v1h-1zM895 165h1v1h-1zM896 165h1v1h-1zM646 166h1v1h-1zM654 166h1v1h-1zM658 166h1v1h-1zM666 166h1v1h-1zM671 166h1v1h-1zM676 166h1v1h-1zM678 166h1v1h-1zM689 166h1v1h-1zM691 166h1v1h-1zM698 166h1v1h-1zM714 166h1v1h-1zM718 166h1v1h-1zM719 166h1v1h-1zM726 166h1v1h-1zM735 166h1v1h-1zM737 166h1v1h-1zM741 166h1v1h-1zM742 166h1v1h-1zM751 166h1v1h-1zM755 166h1v1h-1zM756 166h1v1h-1zM761 166h1v1h-1zM763 166h1v1h-1zM765 166h1v1h-1zM795 166h1v1h-1zM805 166h1v1h-1zM815 166h1v1h-1zM827 166h1v1h-1zM837 166h1v1h-1zM848 166h1v1h-1zM854 166h1v1h-1zM857 166h1v1h-1zM877 166h1v1h-1zM644 167h1v1h-1zM649 167h1v1h-1zM653 167h1v1h-1zM664 167h1v1h-1zM665 167h1v1h-1zM672 167h1v1h-1zM677 167h1v1h-1zM691 167h1v1h-1zM694 167h1v1h-1zM702 167h1v1h-1zM716 167h1v1h-1zM719 167h1v1h-1zM721 167h1v1h-1zM741 167h1v1h-1zM752 167h1v1h-1zM764 167h1v1h-1zM782 167h1v1h-1zM785 167h1v1h-1zM808 167h1v1h-1zM812 167h1v1h-1zM816 167h1v1h-1zM824 167h1v1h-1zM829 167h1v1h-1zM830 167h1v1h-1zM837 167h1v1h-1zM857 167h1v1h-1zM872 167h1v1h-1zM888 167h1v1h-1zM890 167h1v1h-1zM891 167h1v1h-1zM893 167h1v1h-1zM644 168h1v1h-1zM645 168h1v1h-1zM670 168h1v1h-1zM673 168h1v1h-1zM678 168h1v1h-1zM679 168h1v1h-1zM681 168h1v1h-1zM690 168h1v1h-1zM693 168h1v1h-1zM704 168h1v1h-1zM706 168h1v1h-1zM728 168h1v1h-1zM740 168h1v1h-1zM748 168h1v1h-1zM753 168h1v1h-1zM771 168h1v1h-1zM777 168h1v1h-1zM787 168h1v1h-1zM792 168h1v1h-1zM802 168h1v1h-1zM804 168h1v1h-1zM851 168h1v1h-1zM872 168h1v1h-1zM892 168h1v1h-1zM897 168h1v1h-1zM654 169h1v1h-1zM661 169h1v1h-1zM672 169h1v1h-1zM674 169h1v1h-1zM676 169h1v1h-1zM681 169h1v1h-1zM682 169h1v1h-1zM685 169h1v1h-1zM700 169h1v1h-1zM705 169h1v1h-1zM712 169h1v1h-1zM716 169h1v1h-1zM718 169h1v1h-1zM721 169h1v1h-1zM740 169h1v1h-1zM742 169h1v1h-1zM744 169h1v1h-1zM745 169h1v1h-1zM752 169h1v1h-1zM760 169h1v1h-1zM762 169h1v1h-1zM788 169h1v1h-1zM800 169h1v1h-1zM802 169h1v1h-1zM803 169h1v1h-1zM805 169h1v1h-1zM810 169h1v1h-1zM814 169h1v1h-1zM817 169h1v1h-1zM823 169h1v1h-1zM828 169h1v1h-1zM847 169h1v1h-1zM852 169h1v1h-1zM878 169h1v1h-1zM899 169h1v1h-1zM644 170h1v1h-1zM648 170h1v1h-1zM650 170h1v1h-1zM652 170h1v1h-1zM660 170h1v1h-1zM661 170h1v1h-1zM662 170h1v1h-1zM663 170h1v1h-1zM664 170h1v1h-1zM673 170h1v1h-1zM676 170h1v1h-1zM711 170h1v1h-1zM714 170h1v1h-1zM715 170h1v1h-1zM717 170h1v1h-1zM721 170h1v1h-1zM727 170h1v1h-1zM730 170h1v1h-1zM737 170h1v1h-1zM744 170h1v1h-1zM747 170h1v1h-1zM751 170h1v1h-1zM761 170h1v1h-1zM763 170h1v1h-1zM780 170h1v1h-1zM788 170h1v1h-1zM806 170h1v1h-1zM822 170h1v1h-1zM885 170h1v1h-1zM889 170h1v1h-1zM895 170h1v1h-1zM898 170h1v1h-1zM648 171h1v1h-1zM650 171h1v1h-1zM656 171h1v1h-1zM661 171h1v1h-1zM666 171h1v1h-1zM668 171h1v1h-1zM672 171h1v1h-1zM676 171h1v1h-1zM680 171h1v1h-1zM681 171h1v1h-1zM684 171h1v1h-1zM686 171h1v1h-1zM690 171h1v1h-1zM698 171h1v1h-1zM702 171h1v1h-1zM704 171h1v1h-1zM710 171h1v1h-1zM717 171h1v1h-1zM719 171h1v1h-1zM721 171h1v1h-1zM732 171h1v1h-1zM734 171h1v1h-1zM744 171h1v1h-1zM752 171h1v1h-1zM775 171h1v1h-1zM811 171h1v1h-1zM824 171h1v1h-1zM833 171h1v1h-1zM842 171h1v1h-1zM846 171h1v1h-1zM854 171h1v1h-1zM896 171h1v1h-1zM646 172h1v1h-1zM648 172h1v1h-1zM663 172h1v1h-1zM672 172h1v1h-1zM675 172h1v1h-1zM679 172h1v1h-1zM697 172h1v1h-1zM708 172h1v1h-1zM714 172h1v1h-1zM717 172h1v1h-1zM731 172h1v1h-1zM737 172h1v1h-1zM738 172h1v1h-1zM740 172h1v1h-1zM743 172h1v1h-1zM754 172h1v1h-1zM762 172h1v1h-1zM764 172h1v1h-1zM765 172h1v1h-1zM766 172h1v1h-1zM768 172h1v1h-1zM771 172h1v1h-1zM775 172h1v1h-1zM780 172h1v1h-1zM786 172h1v1h-1zM791 172h1v1h-1zM792 172h1v1h-1zM795 172h1v1h-1zM808 172h1v1h-1zM810 172h1v1h-1zM824 172h1v1h-1zM830 172h1v1h-1zM869 172h1v1h-1zM870 172h1v1h-1zM871 172h1v1h-1zM882 172h1v1h-1zM886 172h1v1h-1zM898 172h1v1h-1zM645 173h1v1h-1zM672 173h1v1h-1zM673 173h1v1h-1zM684 173h1v1h-1zM687 173h1v1h-1zM688 173h1v1h-1zM691 173h1v1h-1zM693 173h1v1h-1zM694 173h1v1h-1zM703 173h1v1h-1zM709 173h1v1h-1zM711 173h1v1h-1zM712 173h1v1h-1zM713 173h1v1h-1zM716 173h1v1h-1zM721 173h1v1h-1zM733 173h1v1h-1zM736 173h1v1h-1zM739 173h1v1h-1zM744 173h1v1h-1zM745 173h1v1h-1zM754 173h1v1h-1zM762 173h1v1h-1zM768 173h1v1h-1zM772 173h1v1h-1zM778 173h1v1h-1zM782 173h1v1h-1zM783 173h1v1h-1zM792 173h1v1h-1zM796 173h1v1h-1zM811 173h1v1h-1zM813 173h1v1h-1zM832 173h1v1h-1zM838 173h1v1h-1zM872 173h1v1h-1zM888 173h1v1h-1zM896 173h1v1h-1zM646 174h1v1h-1zM652 174h1v1h-1zM667 174h1v1h-1zM672 174h1v1h-1zM683 174h1v1h-1zM684 174h1v1h-1zM688 174h1v1h-1zM689 174h1v1h-1zM691 174h1v1h-1zM708 174h1v1h-1zM711 174h1v1h-1zM717 174h1v1h-1zM719 174h1v1h-1zM722 174h1v1h-1zM735 174h1v1h-1zM737 174h1v1h-1zM746 174h1v1h-1zM750 174h1v1h-1zM751 174h1v1h-1zM752 174h1v1h-1zM753 174h1v1h-1zM761 174h1v1h-1zM763 174h1v1h-1zM767 174h1v1h-1zM772 174h1v1h-1zM784 174h1v1h-1zM811 174h1v1h-1zM812 174h1v1h-1zM855 174h1v1h-1zM870 174h1v1h-1zM883 174h1v1h-1zM885 174h1v1h-1zM652 175h1v1h-1zM658 175h1v1h-1zM669 175h1v1h-1zM673 175h1v1h-1zM676 175h1v1h-1zM678 175h1v1h-1zM715 175h1v1h-1zM725 175h1v1h-1zM736 175h1v1h-1zM744 175h1v1h-1zM747 175h1v1h-1zM753 175h1v1h-1zM765 175h1v1h-1zM768 175h1v1h-1zM782 175h1v1h-1zM788 175h1v1h-1zM789 175h1v1h-1zM849 175h1v1h-1zM854 175h1v1h-1zM872 175h1v1h-1zM873 175h1v1h-1zM878 175h1v1h-1zM644 176h1v1h-1zM645 176h1v1h-1zM650 176h1v1h-1zM656 176h1v1h-1zM658 176h1v1h-1zM660 176h1v1h-1zM662 176h1v1h-1zM664 176h1v1h-1zM671 176h1v1h-1zM673 176h1v1h-1zM675 176h1v1h-1zM676 176h1v1h-1zM679 176h1v1h-1zM680 176h1v1h-1zM683 176h1v1h-1zM686 176h1v1h-1zM690 176h1v1h-1zM692 176h1v1h-1zM701 176h1v1h-1zM710 176h1v1h-1zM713 176h1v1h-1zM722 176h1v1h-1zM730 176h1v1h-1zM731 176h1v1h-1zM737 176h1v1h-1zM740 176h1v1h-1zM748 176h1v1h-1zM754 176h1v1h-1zM757 176h1v1h-1zM765 176h1v1h-1zM776 176h1v1h-1zM780 176h1v1h-1zM783 176h1v1h-1zM793 176h1v1h-1zM794 176h1v1h-1zM805 176h1v1h-1zM806 176h1v1h-1zM813 176h1v1h-1zM815 176h1v1h-1zM839 176h1v1h-1zM844 176h1v1h-1zM846 176h1v1h-1zM849 176h1v1h-1zM850 176h1v1h-1zM869 176h1v1h-1zM874 176h1v1h-1zM875 176h1v1h-1zM879 176h1v1h-1zM880 176h1v1h-1zM882 176h1v1h-1zM883 176h1v1h-1zM892 176h1v1h-1zM646 177h1v1h-1zM654 177h1v1h-1zM677 177h1v1h-1zM681 177h1v1h-1zM687 177h1v1h-1zM688 177h1v1h-1zM690 177h1v1h-1zM695 177h1v1h-1zM708 177h1v1h-1zM713 177h1v1h-1zM715 177h1v1h-1zM721 177h1v1h-1zM729 177h1v1h-1zM730 177h1v1h-1zM734 177h1v1h-1zM735 177h1v1h-1zM745 177h1v1h-1zM753 177h1v1h-1zM762 177h1v1h-1zM767 177h1v1h-1zM768 177h1v1h-1zM774 177h1v1h-1zM778 177h1v1h-1zM780 177h1v1h-1zM783 177h1v1h-1zM787 177h1v1h-1zM805 177h1v1h-1zM809 177h1v1h-1zM813 177h1v1h-1zM838 177h1v1h-1zM850 177h1v1h-1zM881 177h1v1h-1zM887 177h1v1h-1zM896 177h1v1h-1zM644 178h1v1h-1zM645 178h1v1h-1zM652 178h1v1h-1zM660 178h1v1h-1zM662 178h1v1h-1zM666 178h1v1h-1zM667 178h1v1h-1zM680 178h1v1h-1zM686 178h1v1h-1zM691 178h1v1h-1zM692 178h1v1h-1zM705 178h1v1h-1zM706 178h1v1h-1zM710 178h1v1h-1zM721 178h1v1h-1zM728 178h1v1h-1zM735 178h1v1h-1zM742 178h1v1h-1zM743 178h1v1h-1zM744 178h1v1h-1zM749 178h1v1h-1zM770 178h1v1h-1zM777 178h1v1h-1zM788 178h1v1h-1zM807 178h1v1h-1zM808 178h1v1h-1zM820 178h1v1h-1zM839 178h1v1h-1zM842 178h1v1h-1zM845 178h1v1h-1zM847 178h1v1h-1zM855 178h1v1h-1zM862 178h1v1h-1zM864 178h1v1h-1zM883 178h1v1h-1zM897 178h1v1h-1zM646 179h1v1h-1zM654 179h1v1h-1zM656 179h1v1h-1zM660 179h1v1h-1zM668 179h1v1h-1zM671 179h1v1h-1zM682 179h1v1h-1zM684 179h1v1h-1zM685 179h1v1h-1zM697 179h1v1h-1zM705 179h1v1h-1zM707 179h1v1h-1zM711 179h1v1h-1zM716 179h1v1h-1zM733 179h1v1h-1zM740 179h1v1h-1zM744 179h1v1h-1zM757 179h1v1h-1zM762 179h1v1h-1zM765 179h1v1h-1zM767 179h1v1h-1zM777 179h1v1h-1zM789 179h1v1h-1zM795 179h1v1h-1zM804 179h1v1h-1zM810 179h1v1h-1zM813 179h1v1h-1zM818 179h1v1h-1zM820 179h1v1h-1zM821 179h1v1h-1zM824 179h1v1h-1zM825 179h1v1h-1zM826 179h1v1h-1zM834 179h1v1h-1zM846 179h1v1h-1zM849 179h1v1h-1zM850 179h1v1h-1zM851 179h1v1h-1zM860 179h1v1h-1zM867 179h1v1h-1zM869 179h1v1h-1zM870 179h1v1h-1zM873 179h1v1h-1zM881 179h1v1h-1zM644 180h1v1h-1zM652 180h1v1h-1zM654 180h1v1h-1zM662 180h1v1h-1zM669 180h1v1h-1zM677 180h1v1h-1zM678 180h1v1h-1zM685 180h1v1h-1zM687 180h1v1h-1zM689 180h1v1h-1zM694 180h1v1h-1zM696 180h1v1h-1zM697 180h1v1h-1zM700 180h1v1h-1zM709 180h1v1h-1zM714 180h1v1h-1zM717 180h1v1h-1zM718 180h1v1h-1zM728 180h1v1h-1zM744 180h1v1h-1zM752 180h1v1h-1zM753 180h1v1h-1zM755 180h1v1h-1zM756 180h1v1h-1zM761 180h1v1h-1zM779 180h1v1h-1zM780 180h1v1h-1zM783 180h1v1h-1zM795 180h1v1h-1zM804 180h1v1h-1zM811 180h1v1h-1zM812 180h1v1h-1zM816 180h1v1h-1zM817 180h1v1h-1zM818 180h1v1h-1zM821 180h1v1h-1zM822 180h1v1h-1zM823 180h1v1h-1zM838 180h1v1h-1zM849 180h1v1h-1zM870 180h1v1h-1zM871 180h1v1h-1zM872 180h1v1h-1zM877 180h1v1h-1zM880 180h1v1h-1zM882 180h1v1h-1zM885 180h1v1h-1zM892 180h1v1h-1zM893 180h1v1h-1zM897 180h1v1h-1zM650 181h1v1h-1zM651 181h1v1h-1zM658 181h1v1h-1zM685 181h1v1h-1zM686 181h1v1h-1zM690 181h1v1h-1zM695 181h1v1h-1zM696 181h1v1h-1zM697 181h1v1h-1zM700 181h1v1h-1zM704 181h1v1h-1zM712 181h1v1h-1zM721 181h1v1h-1zM722 181h1v1h-1zM723 181h1v1h-1zM735 181h1v1h-1zM736 181h1v1h-1zM738 181h1v1h-1zM743 181h1v1h-1zM746 181h1v1h-1zM748 181h1v1h-1zM753 181h1v1h-1zM754 181h1v1h-1zM757 181h1v1h-1zM764 181h1v1h-1zM765 181h1v1h-1zM768 181h1v1h-1zM770 181h1v1h-1zM793 181h1v1h-1zM798 181h1v1h-1zM808 181h1v1h-1zM810 181h1v1h-1zM811 181h1v1h-1zM813 181h1v1h-1zM814 181h1v1h-1zM818 181h1v1h-1zM837 181h1v1h-1zM842 181h1v1h-1zM845 181h1v1h-1zM851 181h1v1h-1zM867 181h1v1h-1zM872 181h1v1h-1zM898 181h1v1h-1zM665 182h1v1h-1zM672 182h1v1h-1zM685 182h1v1h-1zM694 182h1v1h-1zM705 182h1v1h-1zM711 182h1v1h-1zM719 182h1v1h-1zM722 182h1v1h-1zM725 182h1v1h-1zM735 182h1v1h-1zM742 182h1v1h-1zM745 182h1v1h-1zM746 182h1v1h-1zM753 182h1v1h-1zM756 182h1v1h-1zM757 182h1v1h-1zM767 182h1v1h-1zM777 182h1v1h-1zM804 182h1v1h-1zM816 182h1v1h-1zM820 182h1v1h-1zM833 182h1v1h-1zM838 182h1v1h-1zM839 182h1v1h-1zM849 182h1v1h-1zM876 182h1v1h-1zM877 182h1v1h-1zM879 182h1v1h-1zM889 182h1v1h-1zM896 182h1v1h-1zM644 183h1v1h-1zM649 183h1v1h-1zM657 183h1v1h-1zM665 183h1v1h-1zM682 183h1v1h-1zM704 183h1v1h-1zM706 183h1v1h-1zM714 183h1v1h-1zM716 183h1v1h-1zM721 183h1v1h-1zM722 183h1v1h-1zM727 183h1v1h-1zM729 183h1v1h-1zM737 183h1v1h-1zM740 183h1v1h-1zM747 183h1v1h-1zM749 183h1v1h-1zM756 183h1v1h-1zM761 183h1v1h-1zM762 183h1v1h-1zM766 183h1v1h-1zM767 183h1v1h-1zM816 183h1v1h-1zM838 183h1v1h-1zM841 183h1v1h-1zM851 183h1v1h-1zM862 183h1v1h-1zM872 183h1v1h-1zM882 183h1v1h-1zM890 183h1v1h-1zM898 183h1v1h-1zM647 184h1v1h-1zM652 184h1v1h-1zM654 184h1v1h-1zM662 184h1v1h-1zM664 184h1v1h-1zM665 184h1v1h-1zM673 184h1v1h-1zM677 184h1v1h-1zM678 184h1v1h-1zM681 184h1v1h-1zM685 184h1v1h-1zM689 184h1v1h-1zM696 184h1v1h-1zM702 184h1v1h-1zM705 184h1v1h-1zM706 184h1v1h-1zM708 184h1v1h-1zM711 184h1v1h-1zM740 184h1v1h-1zM743 184h1v1h-1zM749 184h1v1h-1zM752 184h1v1h-1zM753 184h1v1h-1zM754 184h1v1h-1zM763 184h1v1h-1zM769 184h1v1h-1zM772 184h1v1h-1zM773 184h1v1h-1zM781 184h1v1h-1zM783 184h1v1h-1zM784 184h1v1h-1zM787 184h1v1h-1zM794 184h1v1h-1zM795 184h1v1h-1zM804 184h1v1h-1zM816 184h1v1h-1zM818 184h1v1h-1zM824 184h1v1h-1zM834 184h1v1h-1zM835 184h1v1h-1zM837 184h1v1h-1zM851 184h1v1h-1zM856 184h1v1h-1zM873 184h1v1h-1zM877 184h1v1h-1zM879 184h1v1h-1zM647 185h1v1h-1zM649 185h1v1h-1zM660 185h1v1h-1zM676 185h1v1h-1zM678 185h1v1h-1zM680 185h1v1h-1zM682 185h1v1h-1zM685 185h1v1h-1zM690 185h1v1h-1zM704 185h1v1h-1zM705 185h1v1h-1zM710 185h1v1h-1zM716 185h1v1h-1zM720 185h1v1h-1zM721 185h1v1h-1zM723 185h1v1h-1zM726 185h1v1h-1zM727 185h1v1h-1zM729 185h1v1h-1zM736 185h1v1h-1zM742 185h1v1h-1zM755 185h1v1h-1zM763 185h1v1h-1zM777 185h1v1h-1zM785 185h1v1h-1zM792 185h1v1h-1zM793 185h1v1h-1zM796 185h1v1h-1zM809 185h1v1h-1zM814 185h1v1h-1zM817 185h1v1h-1zM819 185h1v1h-1zM829 185h1v1h-1zM836 185h1v1h-1zM838 185h1v1h-1zM846 185h1v1h-1zM882 185h1v1h-1zM654 186h1v1h-1zM663 186h1v1h-1zM669 186h1v1h-1zM676 186h1v1h-1zM677 186h1v1h-1zM680 186h1v1h-1zM681 186h1v1h-1zM684 186h1v1h-1zM687 186h1v1h-1zM689 186h1v1h-1zM691 186h1v1h-1zM692 186h1v1h-1zM695 186h1v1h-1zM702 186h1v1h-1zM714 186h1v1h-1zM716 186h1v1h-1zM717 186h1v1h-1zM718 186h1v1h-1zM721 186h1v1h-1zM722 186h1v1h-1zM724 186h1v1h-1zM725 186h1v1h-1zM744 186h1v1h-1zM745 186h1v1h-1zM773 186h1v1h-1zM780 186h1v1h-1zM784 186h1v1h-1zM792 186h1v1h-1zM798 186h1v1h-1zM801 186h1v1h-1zM845 186h1v1h-1zM854 186h1v1h-1zM860 186h1v1h-1zM861 186h1v1h-1zM862 186h1v1h-1zM871 186h1v1h-1zM872 186h1v1h-1zM874 186h1v1h-1zM884 186h1v1h-1zM888 186h1v1h-1zM889 186h1v1h-1zM653 187h1v1h-1zM659 187h1v1h-1zM661 187h1v1h-1zM683 187h1v1h-1zM693 187h1v1h-1zM695 187h1v1h-1zM696 187h1v1h-1zM699 187h1v1h-1zM706 187h1v1h-1zM710 187h1v1h-1zM721 187h1v1h-1zM726 187h1v1h-1zM739 187h1v1h-1zM746 187h1v1h-1zM749 187h1v1h-1zM755 187h1v1h-1zM757 187h1v1h-1zM767 187h1v1h-1zM794 187h1v1h-1zM796 187h1v1h-1zM818 187h1v1h-1zM836 187h1v1h-1zM838 187h1v1h-1zM848 187h1v1h-1zM852 187h1v1h-1zM857 187h1v1h-1zM876 187h1v1h-1zM884 187h1v1h-1zM897 187h1v1h-1zM644 188h1v1h-1zM651 188h1v1h-1zM656 188h1v1h-1zM661 188h1v1h-1zM665 188h1v1h-1zM667 188h1v1h-1zM672 188h1v1h-1zM675 188h1v1h-1zM676 188h1v1h-1zM686 188h1v1h-1zM689 188h1v1h-1zM691 188h1v1h-1zM700 188h1v1h-1zM710 188h1v1h-1zM715 188h1v1h-1zM721 188h1v1h-1zM723 188h1v1h-1zM724 188h1v1h-1zM728 188h1v1h-1zM729 188h1v1h-1zM735 188h1v1h-1zM740 188h1v1h-1zM741 188h1v1h-1zM742 188h1v1h-1zM744 188h1v1h-1zM749 188h1v1h-1zM751 188h1v1h-1zM754 188h1v1h-1zM756 188h1v1h-1zM765 188h1v1h-1zM771 188h1v1h-1zM772 188h1v1h-1zM784 188h1v1h-1zM787 188h1v1h-1zM793 188h1v1h-1zM797 188h1v1h-1zM801 188h1v1h-1zM814 188h1v1h-1zM815 188h1v1h-1zM823 188h1v1h-1zM827 188h1v1h-1zM834 188h1v1h-1zM845 188h1v1h-1zM856 188h1v1h-1zM865 188h1v1h-1zM877 188h1v1h-1zM889 188h1v1h-1zM890 188h1v1h-1zM894 188h1v1h-1zM653 189h1v1h-1zM656 189h1v1h-1zM657 189h1v1h-1zM664 189h1v1h-1zM672 189h1v1h-1zM675 189h1v1h-1zM676 189h1v1h-1zM677 189h1v1h-1zM680 189h1v1h-1zM681 189h1v1h-1zM683 189h1v1h-1zM684 189h1v1h-1zM685 189h1v1h-1zM688 189h1v1h-1zM689 189h1v1h-1zM691 189h1v1h-1zM694 189h1v1h-1zM702 189h1v1h-1zM709 189h1v1h-1zM710 189h1v1h-1zM711 189h1v1h-1zM714 189h1v1h-1zM728 189h1v1h-1zM746 189h1v1h-1zM751 189h1v1h-1zM765 189h1v1h-1zM772 189h1v1h-1zM785 189h1v1h-1zM796 189h1v1h-1zM800 189h1v1h-1zM802 189h1v1h-1zM804 189h1v1h-1zM814 189h1v1h-1zM817 189h1v1h-1zM819 189h1v1h-1zM837 189h1v1h-1zM838 189h1v1h-1zM848 189h1v1h-1zM876 189h1v1h-1zM895 189h1v1h-1zM896 189h1v1h-1zM899 189h1v1h-1zM644 190h1v1h-1zM646 190h1v1h-1zM652 190h1v1h-1zM656 190h1v1h-1zM658 190h1v1h-1zM660 190h1v1h-1zM662 190h1v1h-1zM666 190h1v1h-1zM681 190h1v1h-1zM682 190h1v1h-1zM683 190h1v1h-1zM684 190h1v1h-1zM692 190h1v1h-1zM705 190h1v1h-1zM709 190h1v1h-1zM710 190h1v1h-1zM712 190h1v1h-1zM713 190h1v1h-1zM714 190h1v1h-1zM716 190h1v1h-1zM720 190h1v1h-1zM724 190h1v1h-1zM736 190h1v1h-1zM744 190h1v1h-1zM745 190h1v1h-1zM754 190h1v1h-1zM758 190h1v1h-1zM761 190h1v1h-1zM763 190h1v1h-1zM770 190h1v1h-1zM807 190h1v1h-1zM814 190h1v1h-1zM821 190h1v1h-1zM829 190h1v1h-1zM830 190h1v1h-1zM832 190h1v1h-1zM834 190h1v1h-1zM836 190h1v1h-1zM841 190h1v1h-1zM861 190h1v1h-1zM866 190h1v1h-1zM868 190h1v1h-1zM877 190h1v1h-1zM878 190h1v1h-1zM889 190h1v1h-1zM650 191h1v1h-1zM657 191h1v1h-1zM664 191h1v1h-1zM665 191h1v1h-1zM670 191h1v1h-1zM676 191h1v1h-1zM677 191h1v1h-1zM679 191h1v1h-1zM681 191h1v1h-1zM682 191h1v1h-1zM684 191h1v1h-1zM685 191h1v1h-1zM686 191h1v1h-1zM703 191h1v1h-1zM705 191h1v1h-1zM707 191h1v1h-1zM708 191h1v1h-1zM710 191h1v1h-1zM712 191h1v1h-1zM714 191h1v1h-1zM716 191h1v1h-1zM717 191h1v1h-1zM722 191h1v1h-1zM723 191h1v1h-1zM727 191h1v1h-1zM733 191h1v1h-1zM740 191h1v1h-1zM742 191h1v1h-1zM743 191h1v1h-1zM745 191h1v1h-1zM755 191h1v1h-1zM759 191h1v1h-1zM760 191h1v1h-1zM765 191h1v1h-1zM774 191h1v1h-1zM782 191h1v1h-1zM785 191h1v1h-1zM794 191h1v1h-1zM796 191h1v1h-1zM802 191h1v1h-1zM804 191h1v1h-1zM806 191h1v1h-1zM817 191h1v1h-1zM822 191h1v1h-1zM828 191h1v1h-1zM849 191h1v1h-1zM853 191h1v1h-1zM863 191h1v1h-1zM872 191h1v1h-1zM876 191h1v1h-1zM877 191h1v1h-1zM879 191h1v1h-1zM881 191h1v1h-1zM648 192h1v1h-1zM656 192h1v1h-1zM657 192h1v1h-1zM666 192h1v1h-1zM681 192h1v1h-1zM682 192h1v1h-1zM690 192h1v1h-1zM705 192h1v1h-1zM708 192h1v1h-1zM711 192h1v1h-1zM712 192h1v1h-1zM713 192h1v1h-1zM716 192h1v1h-1zM718 192h1v1h-1zM731 192h1v1h-1zM745 192h1v1h-1zM751 192h1v1h-1zM752 192h1v1h-1zM757 192h1v1h-1zM760 192h1v1h-1zM763 192h1v1h-1zM765 192h1v1h-1zM768 192h1v1h-1zM781 192h1v1h-1zM788 192h1v1h-1zM807 192h1v1h-1zM810 192h1v1h-1zM825 192h1v1h-1zM840 192h1v1h-1zM841 192h1v1h-1zM861 192h1v1h-1zM863 192h1v1h-1zM876 192h1v1h-1zM884 192h1v1h-1zM887 192h1v1h-1zM651 193h1v1h-1zM663 193h1v1h-1zM678 193h1v1h-1zM684 193h1v1h-1zM688 193h1v1h-1zM698 193h1v1h-1zM699 193h1v1h-1zM702 193h1v1h-1zM705 193h1v1h-1zM708 193h1v1h-1zM717 193h1v1h-1zM720 193h1v1h-1zM723 193h1v1h-1zM726 193h1v1h-1zM727 193h1v1h-1zM734 193h1v1h-1zM737 193h1v1h-1zM742 193h1v1h-1zM746 193h1v1h-1zM752 193h1v1h-1zM766 193h1v1h-1zM778 193h1v1h-1zM805 193h1v1h-1zM810 193h1v1h-1zM819 193h1v1h-1zM826 193h1v1h-1zM834 193h1v1h-1zM837 193h1v1h-1zM855 193h1v1h-1zM861 193h1v1h-1zM870 193h1v1h-1zM873 193h1v1h-1zM876 193h1v1h-1zM877 193h1v1h-1zM885 193h1v1h-1zM887 193h1v1h-1zM889 193h1v1h-1zM646 194h1v1h-1zM649 194h1v1h-1zM655 194h1v1h-1zM665 194h1v1h-1zM668 194h1v1h-1zM669 194h1v1h-1zM677 194h1v1h-1zM680 194h1v1h-1zM681 194h1v1h-1zM684 194h1v1h-1zM688 194h1v1h-1zM692 194h1v1h-1zM698 194h1v1h-1zM701 194h1v1h-1zM709 194h1v1h-1zM712 194h1v1h-1zM719 194h1v1h-1zM724 194h1v1h-1zM731 194h1v1h-1zM734 194h1v1h-1zM738 194h1v1h-1zM740 194h1v1h-1zM741 194h1v1h-1zM745 194h1v1h-1zM749 194h1v1h-1zM753 194h1v1h-1zM757 194h1v1h-1zM767 194h1v1h-1zM769 194h1v1h-1zM783 194h1v1h-1zM785 194h1v1h-1zM793 194h1v1h-1zM803 194h1v1h-1zM810 194h1v1h-1zM814 194h1v1h-1zM822 194h1v1h-1zM825 194h1v1h-1zM826 194h1v1h-1zM862 194h1v1h-1zM896 194h1v1h-1zM644 195h1v1h-1zM652 195h1v1h-1zM660 195h1v1h-1zM669 195h1v1h-1zM676 195h1v1h-1zM680 195h1v1h-1zM683 195h1v1h-1zM685 195h1v1h-1zM689 195h1v1h-1zM690 195h1v1h-1zM695 195h1v1h-1zM696 195h1v1h-1zM705 195h1v1h-1zM707 195h1v1h-1zM727 195h1v1h-1zM728 195h1v1h-1zM730 195h1v1h-1zM741 195h1v1h-1zM742 195h1v1h-1zM747 195h1v1h-1zM750 195h1v1h-1zM751 195h1v1h-1zM763 195h1v1h-1zM765 195h1v1h-1zM780 195h1v1h-1zM790 195h1v1h-1zM854 195h1v1h-1zM891 195h1v1h-1zM897 195h1v1h-1zM646 196h1v1h-1zM652 196h1v1h-1zM653 196h1v1h-1zM657 196h1v1h-1zM663 196h1v1h-1zM666 196h1v1h-1zM673 196h1v1h-1zM677 196h1v1h-1zM679 196h1v1h-1zM680 196h1v1h-1zM687 196h1v1h-1zM688 196h1v1h-1zM689 196h1v1h-1zM692 196h1v1h-1zM698 196h1v1h-1zM710 196h1v1h-1zM712 196h1v1h-1zM713 196h1v1h-1zM715 196h1v1h-1zM720 196h1v1h-1zM729 196h1v1h-1zM733 196h1v1h-1zM740 196h1v1h-1zM748 196h1v1h-1zM750 196h1v1h-1zM755 196h1v1h-1zM756 196h1v1h-1zM757 196h1v1h-1zM763 196h1v1h-1zM777 196h1v1h-1zM785 196h1v1h-1zM788 196h1v1h-1zM793 196h1v1h-1zM797 196h1v1h-1zM801 196h1v1h-1zM804 196h1v1h-1zM806 196h1v1h-1zM812 196h1v1h-1zM817 196h1v1h-1zM821 196h1v1h-1zM826 196h1v1h-1zM832 196h1v1h-1zM838 196h1v1h-1zM840 196h1v1h-1zM848 196h1v1h-1zM849 196h1v1h-1zM874 196h1v1h-1zM880 196h1v1h-1zM884 196h1v1h-1zM887 196h1v1h-1zM888 196h1v1h-1zM896 196h1v1h-1zM644 197h1v1h-1zM653 197h1v1h-1zM676 197h1v1h-1zM684 197h1v1h-1zM688 197h1v1h-1zM696 197h1v1h-1zM697 197h1v1h-1zM703 197h1v1h-1zM706 197h1v1h-1zM710 197h1v1h-1zM715 197h1v1h-1zM717 197h1v1h-1zM724 197h1v1h-1zM729 197h1v1h-1zM734 197h1v1h-1zM739 197h1v1h-1zM742 197h1v1h-1zM746 197h1v1h-1zM751 197h1v1h-1zM756 197h1v1h-1zM759 197h1v1h-1zM760 197h1v1h-1zM763 197h1v1h-1zM782 197h1v1h-1zM785 197h1v1h-1zM796 197h1v1h-1zM803 197h1v1h-1zM809 197h1v1h-1zM816 197h1v1h-1zM817 197h1v1h-1zM828 197h1v1h-1zM846 197h1v1h-1zM859 197h1v1h-1zM869 197h1v1h-1zM870 197h1v1h-1zM871 197h1v1h-1zM877 197h1v1h-1zM878 197h1v1h-1zM890 197h1v1h-1zM891 197h1v1h-1zM655 198h1v1h-1zM658 198h1v1h-1zM663 198h1v1h-1zM669 198h1v1h-1zM678 198h1v1h-1zM680 198h1v1h-1zM685 198h1v1h-1zM687 198h1v1h-1zM694 198h1v1h-1zM696 198h1v1h-1zM697 198h1v1h-1zM708 198h1v1h-1zM712 198h1v1h-1zM723 198h1v1h-1zM727 198h1v1h-1zM730 198h1v1h-1zM731 198h1v1h-1zM756 198h1v1h-1zM762 198h1v1h-1zM786 198h1v1h-1zM810 198h1v1h-1zM835 198h1v1h-1zM837 198h1v1h-1zM854 198h1v1h-1zM871 198h1v1h-1zM887 198h1v1h-1zM647 199h1v1h-1zM651 199h1v1h-1zM664 199h1v1h-1zM666 199h1v1h-1zM671 199h1v1h-1zM676 199h1v1h-1zM677 199h1v1h-1zM679 199h1v1h-1zM685 199h1v1h-1zM714 199h1v1h-1zM716 199h1v1h-1zM726 199h1v1h-1zM738 199h1v1h-1zM741 199h1v1h-1zM747 199h1v1h-1zM748 199h1v1h-1zM749 199h1v1h-1zM766 199h1v1h-1zM777 199h1v1h-1zM781 199h1v1h-1zM786 199h1v1h-1zM835 199h1v1h-1zM864 199h1v1h-1zM865 199h1v1h-1zM872 199h1v1h-1zM873 199h1v1h-1zM890 199h1v1h-1zM898 199h1v1h-1zM644 200h1v1h-1zM645 200h1v1h-1zM655 200h1v1h-1zM656 200h1v1h-1zM657 200h1v1h-1zM658 200h1v1h-1zM665 200h1v1h-1zM670 200h1v1h-1zM675 200h1v1h-1zM687 200h1v1h-1zM700 200h1v1h-1zM705 200h1v1h-1zM715 200h1v1h-1zM717 200h1v1h-1zM722 200h1v1h-1zM732 200h1v1h-1zM739 200h1v1h-1zM740 200h1v1h-1zM741 200h1v1h-1zM746 200h1v1h-1zM751 200h1v1h-1zM752 200h1v1h-1zM764 200h1v1h-1zM765 200h1v1h-1zM774 200h1v1h-1zM815 200h1v1h-1zM818 200h1v1h-1zM822 200h1v1h-1zM829 200h1v1h-1zM836 200h1v1h-1zM837 200h1v1h-1zM841 200h1v1h-1zM846 200h1v1h-1zM857 200h1v1h-1zM860 200h1v1h-1zM861 200h1v1h-1zM864 200h1v1h-1zM866 200h1v1h-1zM868 200h1v1h-1zM883 200h1v1h-1zM885 200h1v1h-1zM887 200h1v1h-1zM644 201h1v1h-1zM646 201h1v1h-1zM648 201h1v1h-1zM659 201h1v1h-1zM661 201h1v1h-1zM669 201h1v1h-1zM670 201h1v1h-1zM671 201h1v1h-1zM677 201h1v1h-1zM678 201h1v1h-1zM682 201h1v1h-1zM684 201h1v1h-1zM689 201h1v1h-1zM700 201h1v1h-1zM707 201h1v1h-1zM711 201h1v1h-1zM716 201h1v1h-1zM721 201h1v1h-1zM724 201h1v1h-1zM732 201h1v1h-1zM744 201h1v1h-1zM746 201h1v1h-1zM748 201h1v1h-1zM750 201h1v1h-1zM757 201h1v1h-1zM764 201h1v1h-1zM765 201h1v1h-1zM768 201h1v1h-1zM783 201h1v1h-1zM788 201h1v1h-1zM793 201h1v1h-1zM820 201h1v1h-1zM826 201h1v1h-1zM838 201h1v1h-1zM845 201h1v1h-1zM849 201h1v1h-1zM868 201h1v1h-1zM871 201h1v1h-1zM879 201h1v1h-1zM881 201h1v1h-1zM895 201h1v1h-1zM898 201h1v1h-1zM646 202h1v1h-1zM655 202h1v1h-1zM658 202h1v1h-1zM661 202h1v1h-1zM662 202h1v1h-1zM665 202h1v1h-1zM668 202h1v1h-1zM677 202h1v1h-1zM678 202h1v1h-1zM680 202h1v1h-1zM701 202h1v1h-1zM705 202h1v1h-1zM708 202h1v1h-1zM716 202h1v1h-1zM719 202h1v1h-1zM721 202h1v1h-1zM748 202h1v1h-1zM752 202h1v1h-1zM756 202h1v1h-1zM759 202h1v1h-1zM760 202h1v1h-1zM779 202h1v1h-1zM815 202h1v1h-1zM820 202h1v1h-1zM828 202h1v1h-1zM856 202h1v1h-1zM863 202h1v1h-1zM879 202h1v1h-1zM882 202h1v1h-1zM893 202h1v1h-1zM648 203h1v1h-1zM651 203h1v1h-1zM655 203h1v1h-1zM656 203h1v1h-1zM660 203h1v1h-1zM662 203h1v1h-1zM663 203h1v1h-1zM664 203h1v1h-1zM666 203h1v1h-1zM667 203h1v1h-1zM677 203h1v1h-1zM681 203h1v1h-1zM684 203h1v1h-1zM700 203h1v1h-1zM717 203h1v1h-1zM724 203h1v1h-1zM753 203h1v1h-1zM754 203h1v1h-1zM761 203h1v1h-1zM773 203h1v1h-1zM776 203h1v1h-1zM782 203h1v1h-1zM790 203h1v1h-1zM799 203h1v1h-1zM806 203h1v1h-1zM819 203h1v1h-1zM823 203h1v1h-1zM827 203h1v1h-1zM832 203h1v1h-1zM866 203h1v1h-1zM868 203h1v1h-1zM878 203h1v1h-1zM660 204h1v1h-1zM663 204h1v1h-1zM677 204h1v1h-1zM680 204h1v1h-1zM685 204h1v1h-1zM687 204h1v1h-1zM689 204h1v1h-1zM691 204h1v1h-1zM692 204h1v1h-1zM694 204h1v1h-1zM714 204h1v1h-1zM721 204h1v1h-1zM724 204h1v1h-1zM730 204h1v1h-1zM742 204h1v1h-1zM746 204h1v1h-1zM748 204h1v1h-1zM752 204h1v1h-1zM771 204h1v1h-1zM772 204h1v1h-1zM777 204h1v1h-1zM793 204h1v1h-1zM797 204h1v1h-1zM803 204h1v1h-1zM808 204h1v1h-1zM811 204h1v1h-1zM840 204h1v1h-1zM854 204h1v1h-1zM857 204h1v1h-1zM859 204h1v1h-1zM866 204h1v1h-1zM869 204h1v1h-1zM886 204h1v1h-1zM644 205h1v1h-1zM646 205h1v1h-1zM659 205h1v1h-1zM664 205h1v1h-1zM666 205h1v1h-1zM670 205h1v1h-1zM677 205h1v1h-1zM681 205h1v1h-1zM686 205h1v1h-1zM688 205h1v1h-1zM708 205h1v1h-1zM710 205h1v1h-1zM713 205h1v1h-1zM716 205h1v1h-1zM730 205h1v1h-1zM732 205h1v1h-1zM735 205h1v1h-1zM743 205h1v1h-1zM751 205h1v1h-1zM770 205h1v1h-1zM772 205h1v1h-1zM777 205h1v1h-1zM786 205h1v1h-1zM806 205h1v1h-1zM808 205h1v1h-1zM813 205h1v1h-1zM825 205h1v1h-1zM828 205h1v1h-1zM831 205h1v1h-1zM839 205h1v1h-1zM849 205h1v1h-1zM870 205h1v1h-1zM872 205h1v1h-1zM875 205h1v1h-1zM877 205h1v1h-1zM890 205h1v1h-1zM894 205h1v1h-1zM646 206h1v1h-1zM651 206h1v1h-1zM656 206h1v1h-1zM677 206h1v1h-1zM678 206h1v1h-1zM688 206h1v1h-1zM689 206h1v1h-1zM690 206h1v1h-1zM693 206h1v1h-1zM695 206h1v1h-1zM696 206h1v1h-1zM697 206h1v1h-1zM700 206h1v1h-1zM701 206h1v1h-1zM702 206h1v1h-1zM706 206h1v1h-1zM712 206h1v1h-1zM713 206h1v1h-1zM714 206h1v1h-1zM717 206h1v1h-1zM739 206h1v1h-1zM745 206h1v1h-1zM748 206h1v1h-1zM753 206h1v1h-1zM759 206h1v1h-1zM765 206h1v1h-1zM792 206h1v1h-1zM793 206h1v1h-1zM807 206h1v1h-1zM814 206h1v1h-1zM816 206h1v1h-1zM829 206h1v1h-1zM830 206h1v1h-1zM857 206h1v1h-1zM858 206h1v1h-1zM880 206h1v1h-1zM881 206h1v1h-1zM892 206h1v1h-1zM653 207h1v1h-1zM657 207h1v1h-1zM667 207h1v1h-1zM671 207h1v1h-1zM688 207h1v1h-1zM695 207h1v1h-1zM703 207h1v1h-1zM705 207h1v1h-1zM706 207h1v1h-1zM712 207h1v1h-1zM715 207h1v1h-1zM716 207h1v1h-1zM718 207h1v1h-1zM725 207h1v1h-1zM735 207h1v1h-1zM744 207h1v1h-1zM757 207h1v1h-1zM765 207h1v1h-1zM769 207h1v1h-1zM771 207h1v1h-1zM800 207h1v1h-1zM813 207h1v1h-1zM827 207h1v1h-1zM829 207h1v1h-1zM867 207h1v1h-1zM878 207h1v1h-1zM884 207h1v1h-1zM644 208h1v1h-1zM665 208h1v1h-1zM685 208h1v1h-1zM694 208h1v1h-1zM709 208h1v1h-1zM714 208h1v1h-1zM719 208h1v1h-1zM732 208h1v1h-1zM750 208h1v1h-1zM751 208h1v1h-1zM753 208h1v1h-1zM756 208h1v1h-1zM760 208h1v1h-1zM768 208h1v1h-1zM784 208h1v1h-1zM808 208h1v1h-1zM812 208h1v1h-1zM819 208h1v1h-1zM850 208h1v1h-1zM857 208h1v1h-1zM863 208h1v1h-1zM869 208h1v1h-1zM653 209h1v1h-1zM655 209h1v1h-1zM658 209h1v1h-1zM667 209h1v1h-1zM668 209h1v1h-1zM672 209h1v1h-1zM681 209h1v1h-1zM685 209h1v1h-1zM688 209h1v1h-1zM696 209h1v1h-1zM703 209h1v1h-1zM708 209h1v1h-1zM712 209h1v1h-1zM718 209h1v1h-1zM719 209h1v1h-1zM725 209h1v1h-1zM733 209h1v1h-1zM740 209h1v1h-1zM754 209h1v1h-1zM760 209h1v1h-1zM844 209h1v1h-1zM858 209h1v1h-1zM874 209h1v1h-1zM669 210h1v1h-1zM678 210h1v1h-1zM714 210h1v1h-1zM716 210h1v1h-1zM724 210h1v1h-1zM725 210h1v1h-1zM735 210h1v1h-1zM749 210h1v1h-1zM825 210h1v1h-1zM832 210h1v1h-1zM838 210h1v1h-1zM843 210h1v1h-1zM656 211h1v1h-1zM657 211h1v1h-1zM674 211h1v1h-1zM705 211h1v1h-1zM712 211h1v1h-1zM714 211h1v1h-1zM716 211h1v1h-1zM717 211h1v1h-1zM719 211h1v1h-1zM729 211h1v1h-1zM743 211h1v1h-1zM747 211h1v1h-1zM748 211h1v1h-1zM767 211h1v1h-1zM809 211h1v1h-1zM817 211h1v1h-1zM837 211h1v1h-1zM840 211h1v1h-1zM848 211h1v1h-1zM850 211h1v1h-1zM868 211h1v1h-1zM870 211h1v1h-1zM878 211h1v1h-1zM899 211h1v1h-1zM650 212h1v1h-1zM668 212h1v1h-1zM670 212h1v1h-1zM676 212h1v1h-1zM679 212h1v1h-1zM680 212h1v1h-1zM686 212h1v1h-1zM694 212h1v1h-1zM697 212h1v1h-1zM708 212h1v1h-1zM711 212h1v1h-1zM712 212h1v1h-1zM724 212h1v1h-1zM736 212h1v1h-1zM737 212h1v1h-1zM740 212h1v1h-1zM746 212h1v1h-1zM752 212h1v1h-1zM758 212h1v1h-1zM774 212h1v1h-1zM789 212h1v1h-1zM792 212h1v1h-1zM804 212h1v1h-1zM818 212h1v1h-1zM832 212h1v1h-1zM834 212h1v1h-1zM856 212h1v1h-1zM870 212h1v1h-1zM872 212h1v1h-1zM644 213h1v1h-1zM652 213h1v1h-1zM653 213h1v1h-1zM663 213h1v1h-1zM664 213h1v1h-1zM685 213h1v1h-1zM687 213h1v1h-1zM692 213h1v1h-1zM698 213h1v1h-1zM702 213h1v1h-1zM709 213h1v1h-1zM722 213h1v1h-1zM737 213h1v1h-1zM739 213h1v1h-1zM756 213h1v1h-1zM759 213h1v1h-1zM761 213h1v1h-1zM767 213h1v1h-1zM787 213h1v1h-1zM804 213h1v1h-1zM815 213h1v1h-1zM820 213h1v1h-1zM824 213h1v1h-1zM646 214h1v1h-1zM670 214h1v1h-1zM678 214h1v1h-1zM685 214h1v1h-1zM686 214h1v1h-1zM707 214h1v1h-1zM714 214h1v1h-1zM726 214h1v1h-1zM729 214h1v1h-1zM737 214h1v1h-1zM757 214h1v1h-1zM760 214h1v1h-1zM771 214h1v1h-1zM787 214h1v1h-1zM828 214h1v1h-1zM859 214h1v1h-1zM886 214h1v1h-1zM654 215h1v1h-1zM667 215h1v1h-1zM674 215h1v1h-1zM692 215h1v1h-1zM694 215h1v1h-1zM709 215h1v1h-1zM744 215h1v1h-1zM767 215h1v1h-1zM769 215h1v1h-1zM812 215h1v1h-1zM836 215h1v1h-1zM846 215h1v1h-1zM892 215h1v1h-1zM651 216h1v1h-1zM669 216h1v1h-1zM673 216h1v1h-1zM674 216h1v1h-1zM680 216h1v1h-1zM686 216h1v1h-1zM688 216h1v1h-1zM689 216h1v1h-1zM701 216h1v1h-1zM715 216h1v1h-1zM717 216h1v1h-1zM723 216h1v1h-1zM726 216h1v1h-1zM738 216h1v1h-1zM753 216h1v1h-1zM757 216h1v1h-1zM762 216h1v1h-1zM808 216h1v1h-1zM644 217h1v1h-1zM660 217h1v1h-1zM662 217h1v1h-1zM677 217h1v1h-1zM705 217h1v1h-1zM720 217h1v1h-1zM727 217h1v1h-1zM732 217h1v1h-1zM739 217h1v1h-1zM740 217h1v1h-1zM741 217h1v1h-1zM744 217h1v1h-1zM745 217h1v1h-1zM750 217h1v1h-1zM767 217h1v1h-1zM768 217h1v1h-1zM788 217h1v1h-1zM818 217h1v1h-1zM839 217h1v1h-1zM846 217h1v1h-1zM886 217h1v1h-1zM895 217h1v1h-1zM644 218h1v1h-1zM647 218h1v1h-1zM652 218h1v1h-1zM660 218h1v1h-1zM665 218h1v1h-1zM670 218h1v1h-1zM677 218h1v1h-1zM693 218h1v1h-1zM698 218h1v1h-1zM711 218h1v1h-1zM719 218h1v1h-1zM725 218h1v1h-1zM727 218h1v1h-1zM728 218h1v1h-1zM744 218h1v1h-1zM813 218h1v1h-1zM820 218h1v1h-1zM841 218h1v1h-1zM857 218h1v1h-1zM882 218h1v1h-1zM644 219h1v1h-1zM646 219h1v1h-1zM648 219h1v1h-1zM657 219h1v1h-1zM680 219h1v1h-1zM693 219h1v1h-1zM697 219h1v1h-1zM701 219h1v1h-1zM706 219h1v1h-1zM709 219h1v1h-1zM710 219h1v1h-1zM721 219h1v1h-1zM736 219h1v1h-1zM737 219h1v1h-1zM738 219h1v1h-1zM742 219h1v1h-1zM762 219h1v1h-1zM766 219h1v1h-1zM834 219h1v1h-1zM850 219h1v1h-1zM871 219h1v1h-1zM644 220h1v1h-1zM647 220h1v1h-1zM651 220h1v1h-1zM670 220h1v1h-1zM681 220h1v1h-1zM700 220h1v1h-1zM724 220h1v1h-1zM726 220h1v1h-1zM736 220h1v1h-1zM740 220h1v1h-1zM752 220h1v1h-1zM756 220h1v1h-1zM776 220h1v1h-1zM786 220h1v1h-1zM803 220h1v1h-1zM818 220h1v1h-1zM830 220h1v1h-1zM854 220h1v1h-1zM855 220h1v1h-1zM856 220h1v1h-1zM873 220h1v1h-1zM881 220h1v1h-1zM889 220h1v1h-1zM896 220h1v1h-1zM663 221h1v1h-1zM664 221h1v1h-1zM669 221h1v1h-1zM676 221h1v1h-1zM678 221h1v1h-1zM679 221h1v1h-1zM689 221h1v1h-1zM690 221h1v1h-1zM703 221h1v1h-1zM711 221h1v1h-1zM712 221h1v1h-1zM713 221h1v1h-1zM714 221h1v1h-1zM715 221h1v1h-1zM716 221h1v1h-1zM717 221h1v1h-1zM731 221h1v1h-1zM732 221h1v1h-1zM742 221h1v1h-1zM745 221h1v1h-1zM746 221h1v1h-1zM751 221h1v1h-1zM759 221h1v1h-1zM765 221h1v1h-1zM766 221h1v1h-1zM767 221h1v1h-1zM822 221h1v1h-1zM831 221h1v1h-1zM843 221h1v1h-1zM851 221h1v1h-1zM862 221h1v1h-1zM865 221h1v1h-1zM877 221h1v1h-1zM889 221h1v1h-1zM678 222h1v1h-1zM679 222h1v1h-1zM680 222h1v1h-1zM696 222h1v1h-1zM705 222h1v1h-1zM712 222h1v1h-1zM716 222h1v1h-1zM717 222h1v1h-1zM732 222h1v1h-1zM737 222h1v1h-1zM753 222h1v1h-1zM761 222h1v1h-1zM773 222h1v1h-1zM788 222h1v1h-1zM792 222h1v1h-1zM805 222h1v1h-1zM817 222h1v1h-1zM820 222h1v1h-1zM826 222h1v1h-1zM849 222h1v1h-1zM857 222h1v1h-1zM877 222h1v1h-1zM898 222h1v1h-1zM655 223h1v1h-1zM658 223h1v1h-1zM660 223h1v1h-1zM662 223h1v1h-1zM668 223h1v1h-1zM669 223h1v1h-1zM671 223h1v1h-1zM681 223h1v1h-1zM690 223h1v1h-1zM693 223h1v1h-1zM696 223h1v1h-1zM699 223h1v1h-1zM708 223h1v1h-1zM712 223h1v1h-1zM720 223h1v1h-1zM730 223h1v1h-1zM732 223h1v1h-1zM740 223h1v1h-1zM746 223h1v1h-1zM755 223h1v1h-1zM756 223h1v1h-1zM769 223h1v1h-1zM770 223h1v1h-1zM857 223h1v1h-1zM866 223h1v1h-1zM875 223h1v1h-1zM878 223h1v1h-1zM881 223h1v1h-1zM887 223h1v1h-1zM896 223h1v1h-1zM650 224h1v1h-1zM651 224h1v1h-1zM653 224h1v1h-1zM670 224h1v1h-1zM679 224h1v1h-1zM681 224h1v1h-1zM688 224h1v1h-1zM695 224h1v1h-1zM704 224h1v1h-1zM719 224h1v1h-1zM736 224h1v1h-1zM737 224h1v1h-1zM738 224h1v1h-1zM743 224h1v1h-1zM750 224h1v1h-1zM758 224h1v1h-1zM759 224h1v1h-1zM775 224h1v1h-1zM777 224h1v1h-1zM795 224h1v1h-1zM801 224h1v1h-1zM803 224h1v1h-1zM813 224h1v1h-1zM821 224h1v1h-1zM823 224h1v1h-1zM836 224h1v1h-1zM856 224h1v1h-1zM867 224h1v1h-1zM653 225h1v1h-1zM694 225h1v1h-1zM695 225h1v1h-1zM715 225h1v1h-1zM721 225h1v1h-1zM733 225h1v1h-1zM736 225h1v1h-1zM742 225h1v1h-1zM754 225h1v1h-1zM755 225h1v1h-1zM806 225h1v1h-1zM808 225h1v1h-1zM834 225h1v1h-1zM888 225h1v1h-1zM644 226h1v1h-1zM660 226h1v1h-1zM682 226h1v1h-1zM693 226h1v1h-1zM698 226h1v1h-1zM700 226h1v1h-1zM701 226h1v1h-1zM726 226h1v1h-1zM728 226h1v1h-1zM737 226h1v1h-1zM744 226h1v1h-1zM754 226h1v1h-1zM786 226h1v1h-1zM813 226h1v1h-1zM873 226h1v1h-1zM876 226h1v1h-1zM648 227h1v1h-1zM652 227h1v1h-1zM659 227h1v1h-1zM661 227h1v1h-1zM676 227h1v1h-1zM677 227h1v1h-1zM685 227h1v1h-1zM687 227h1v1h-1zM712 227h1v1h-1zM725 227h1v1h-1zM730 227h1v1h-1zM739 227h1v1h-1zM741 227h1v1h-1zM755 227h1v1h-1zM759 227h1v1h-1zM778 227h1v1h-1zM789 227h1v1h-1zM805 227h1v1h-1zM817 227h1v1h-1zM644 228h1v1h-1zM654 228h1v1h-1zM669 228h1v1h-1zM677 228h1v1h-1zM681 228h1v1h-1zM685 228h1v1h-1zM691 228h1v1h-1zM717 228h1v1h-1zM726 228h1v1h-1zM737 228h1v1h-1zM744 228h1v1h-1zM754 228h1v1h-1zM763 228h1v1h-1zM806 228h1v1h-1zM819 228h1v1h-1zM862 228h1v1h-1zM658 229h1v1h-1zM659 229h1v1h-1zM675 229h1v1h-1zM685 229h1v1h-1zM686 229h1v1h-1zM689 229h1v1h-1zM692 229h1v1h-1zM693 229h1v1h-1zM699 229h1v1h-1zM700 229h1v1h-1zM706 229h1v1h-1zM708 229h1v1h-1zM709 229h1v1h-1zM710 229h1v1h-1zM718 229h1v1h-1zM719 229h1v1h-1zM730 229h1v1h-1zM733 229h1v1h-1zM738 229h1v1h-1zM743 229h1v1h-1zM746 229h1v1h-1zM750 229h1v1h-1zM787 229h1v1h-1zM892 229h1v1h-1zM644 230h1v1h-1zM657 230h1v1h-1zM659 230h1v1h-1zM664 230h1v1h-1zM672 230h1v1h-1zM692 230h1v1h-1zM702 230h1v1h-1zM705 230h1v1h-1zM713 230h1v1h-1zM742 230h1v1h-1zM746 230h1v1h-1zM756 230h1v1h-1zM758 230h1v1h-1zM777 230h1v1h-1zM779 230h1v1h-1zM783 230h1v1h-1zM792 230h1v1h-1zM808 230h1v1h-1zM885 230h1v1h-1zM887 230h1v1h-1zM655 231h1v1h-1zM663 231h1v1h-1zM666 231h1v1h-1zM678 231h1v1h-1zM685 231h1v1h-1zM750 231h1v1h-1zM752 231h1v1h-1zM767 231h1v1h-1zM808 231h1v1h-1zM843 231h1v1h-1zM846 231h1v1h-1zM644 232h1v1h-1zM646 232h1v1h-1zM647 232h1v1h-1zM663 232h1v1h-1zM677 232h1v1h-1zM708 232h1v1h-1zM712 232h1v1h-1zM716 232h1v1h-1zM720 232h1v1h-1zM724 232h1v1h-1zM738 232h1v1h-1zM744 232h1v1h-1zM747 232h1v1h-1zM751 232h1v1h-1zM752 232h1v1h-1zM754 232h1v1h-1zM791 232h1v1h-1zM805 232h1v1h-1zM832 232h1v1h-1zM866 232h1v1h-1zM870 232h1v1h-1zM887 232h1v1h-1zM646 233h1v1h-1zM653 233h1v1h-1zM656 233h1v1h-1zM664 233h1v1h-1zM680 233h1v1h-1zM687 233h1v1h-1zM690 233h1v1h-1zM709 233h1v1h-1zM725 233h1v1h-1zM748 233h1v1h-1zM754 233h1v1h-1zM756 233h1v1h-1zM828 233h1v1h-1zM873 233h1v1h-1zM875 233h1v1h-1zM656 234h1v1h-1zM657 234h1v1h-1zM674 234h1v1h-1zM678 234h1v1h-1zM679 234h1v1h-1zM696 234h1v1h-1zM697 234h1v1h-1zM707 234h1v1h-1zM725 234h1v1h-1zM726 234h1v1h-1zM759 234h1v1h-1zM764 234h1v1h-1zM767 234h1v1h-1zM768 234h1v1h-1zM776 234h1v1h-1zM804 234h1v1h-1zM866 234h1v1h-1zM875 234h1v1h-1zM649 235h1v1h-1zM657 235h1v1h-1zM658 235h1v1h-1zM669 235h1v1h-1zM682 235h1v1h-1zM691 235h1v1h-1zM702 235h1v1h-1zM704 235h1v1h-1zM718 235h1v1h-1zM735 235h1v1h-1zM741 235h1v1h-1zM747 235h1v1h-1zM748 235h1v1h-1zM759 235h1v1h-1zM766 235h1v1h-1zM776 235h1v1h-1zM777 235h1v1h-1zM650 236h1v1h-1zM661 236h1v1h-1zM674 236h1v1h-1zM676 236h1v1h-1zM682 236h1v1h-1zM695 236h1v1h-1zM696 236h1v1h-1zM697 236h1v1h-1zM706 236h1v1h-1zM709 236h1v1h-1zM710 236h1v1h-1zM718 236h1v1h-1zM720 236h1v1h-1zM723 236h1v1h-1zM740 236h1v1h-1zM741 236h1v1h-1zM743 236h1v1h-1zM746 236h1v1h-1zM749 236h1v1h-1zM753 236h1v1h-1zM824 236h1v1h-1zM874 236h1v1h-1zM884 236h1v1h-1zM646 237h1v1h-1zM647 237h1v1h-1zM655 237h1v1h-1zM688 237h1v1h-1zM692 237h1v1h-1zM700 237h1v1h-1zM702 237h1v1h-1zM708 237h1v1h-1zM710 237h1v1h-1zM711 237h1v1h-1zM712 237h1v1h-1zM713 237h1v1h-1zM733 237h1v1h-1zM737 237h1v1h-1zM744 237h1v1h-1zM760 237h1v1h-1zM768 237h1v1h-1zM771 237h1v1h-1zM792 237h1v1h-1zM833 237h1v1h-1zM882 237h1v1h-1zM648 238h1v1h-1zM651 238h1v1h-1zM656 238h1v1h-1zM662 238h1v1h-1zM672 238h1v1h-1zM674 238h1v1h-1zM677 238h1v1h-1zM687 238h1v1h-1zM698 238h1v1h-1zM700 238h1v1h-1zM711 238h1v1h-1zM723 238h1v1h-1zM734 238h1v1h-1zM736 238h1v1h-1zM747 238h1v1h-1zM649 239h1v1h-1zM654 239h1v1h-1zM667 239h1v1h-1zM675 239h1v1h-1zM688 239h1v1h-1zM754 239h1v1h-1zM802 239h1v1h-1zM808 239h1v1h-1zM809 239h1v1h-1zM827 239h1v1h-1zM833 239h1v1h-1zM649 240h1v1h-1zM657 240h1v1h-1zM658 240h1v1h-1zM659 240h1v1h-1zM660 240h1v1h-1zM668 240h1v1h-1zM686 240h1v1h-1zM698 240h1v1h-1zM699 240h1v1h-1zM704 240h1v1h-1zM711 240h1v1h-1zM713 240h1v1h-1zM725 240h1v1h-1zM729 240h1v1h-1zM732 240h1v1h-1zM746 240h1v1h-1zM754 240h1v1h-1zM758 240h1v1h-1zM766 240h1v1h-1zM773 240h1v1h-1zM774 240h1v1h-1zM780 240h1v1h-1zM785 240h1v1h-1zM796 240h1v1h-1zM833 240h1v1h-1zM841 240h1v1h-1zM844 240h1v1h-1zM848 240h1v1h-1zM859 240h1v1h-1zM860 240h1v1h-1zM871 240h1v1h-1zM873 240h1v1h-1zM875 240h1v1h-1zM877 240h1v1h-1zM878 240h1v1h-1zM886 240h1v1h-1zM891 240h1v1h-1zM645 241h1v1h-1zM651 241h1v1h-1zM660 241h1v1h-1zM670 241h1v1h-1zM673 241h1v1h-1zM689 241h1v1h-1zM708 241h1v1h-1zM711 241h1v1h-1zM713 241h1v1h-1zM715 241h1v1h-1zM716 241h1v1h-1zM717 241h1v1h-1zM732 241h1v1h-1zM738 241h1v1h-1zM739 241h1v1h-1zM750 241h1v1h-1zM752 241h1v1h-1zM755 241h1v1h-1zM757 241h1v1h-1zM758 241h1v1h-1zM834 241h1v1h-1zM845 241h1v1h-1zM881 241h1v1h-1zM886 241h1v1h-1zM890 241h1v1h-1zM646 242h1v1h-1zM648 242h1v1h-1zM654 242h1v1h-1zM655 242h1v1h-1zM662 242h1v1h-1zM665 242h1v1h-1zM672 242h1v1h-1zM681 242h1v1h-1zM687 242h1v1h-1zM694 242h1v1h-1zM696 242h1v1h-1zM697 242h1v1h-1zM703 242h1v1h-1zM706 242h1v1h-1zM708 242h1v1h-1zM712 242h1v1h-1zM717 242h1v1h-1zM728 242h1v1h-1zM742 242h1v1h-1zM751 242h1v1h-1zM759 242h1v1h-1zM774 242h1v1h-1zM788 242h1v1h-1zM804 242h1v1h-1zM824 242h1v1h-1zM880 242h1v1h-1zM678 243h1v1h-1zM698 243h1v1h-1zM701 243h1v1h-1zM702 243h1v1h-1zM708 243h1v1h-1zM724 243h1v1h-1zM727 243h1v1h-1zM740 243h1v1h-1zM747 243h1v1h-1zM748 243h1v1h-1zM755 243h1v1h-1zM758 243h1v1h-1zM761 243h1v1h-1zM780 243h1v1h-1zM785 243h1v1h-1zM830 243h1v1h-1zM866 243h1v1h-1zM886 243h1v1h-1zM653 244h1v1h-1zM665 244h1v1h-1zM670 244h1v1h-1zM674 244h1v1h-1zM680 244h1v1h-1zM689 244h1v1h-1zM691 244h1v1h-1zM720 244h1v1h-1zM721 244h1v1h-1zM726 244h1v1h-1zM728 244h1v1h-1zM739 244h1v1h-1zM742 244h1v1h-1zM752 244h1v1h-1zM754 244h1v1h-1zM755 244h1v1h-1zM756 244h1v1h-1zM758 244h1v1h-1zM768 244h1v1h-1zM770 244h1v1h-1zM776 244h1v1h-1zM800 244h1v1h-1zM801 244h1v1h-1zM810 244h1v1h-1zM813 244h1v1h-1zM814 244h1v1h-1zM837 244h1v1h-1zM858 244h1v1h-1zM859 244h1v1h-1zM876 244h1v1h-1zM882 244h1v1h-1zM890 244h1v1h-1zM896 244h1v1h-1zM899 244h1v1h-1zM647 245h1v1h-1zM652 245h1v1h-1zM661 245h1v1h-1zM670 245h1v1h-1zM672 245h1v1h-1zM673 245h1v1h-1zM681 245h1v1h-1zM692 245h1v1h-1zM709 245h1v1h-1zM713 245h1v1h-1zM716 245h1v1h-1zM724 245h1v1h-1zM730 245h1v1h-1zM733 245h1v1h-1zM734 245h1v1h-1zM742 245h1v1h-1zM744 245h1v1h-1zM747 245h1v1h-1zM754 245h1v1h-1zM763 245h1v1h-1zM765 245h1v1h-1zM769 245h1v1h-1zM779 245h1v1h-1zM800 245h1v1h-1zM806 245h1v1h-1zM814 245h1v1h-1zM815 245h1v1h-1zM826 245h1v1h-1zM837 245h1v1h-1zM841 245h1v1h-1zM852 245h1v1h-1zM652 246h1v1h-1zM653 246h1v1h-1zM659 246h1v1h-1zM664 246h1v1h-1zM670 246h1v1h-1zM680 246h1v1h-1zM685 246h1v1h-1zM692 246h1v1h-1zM695 246h1v1h-1zM705 246h1v1h-1zM748 246h1v1h-1zM756 246h1v1h-1zM760 246h1v1h-1zM814 246h1v1h-1zM830 246h1v1h-1zM884 246h1v1h-1zM655 247h1v1h-1zM690 247h1v1h-1zM691 247h1v1h-1zM703 247h1v1h-1zM712 247h1v1h-1zM717 247h1v1h-1zM743 247h1v1h-1zM756 247h1v1h-1zM795 247h1v1h-1zM819 247h1v1h-1zM836 247h1v1h-1zM854 247h1v1h-1zM645 248h1v1h-1zM660 248h1v1h-1zM661 248h1v1h-1zM687 248h1v1h-1zM688 248h1v1h-1zM720 248h1v1h-1zM724 248h1v1h-1zM736 248h1v1h-1zM744 248h1v1h-1zM751 248h1v1h-1zM780 248h1v1h-1zM798 248h1v1h-1zM803 248h1v1h-1zM809 248h1v1h-1zM853 248h1v1h-1zM870 248h1v1h-1zM891 248h1v1h-1zM893 248h1v1h-1zM652 249h1v1h-1zM676 249h1v1h-1zM685 249h1v1h-1zM687 249h1v1h-1zM700 249h1v1h-1zM702 249h1v1h-1zM709 249h1v1h-1zM741 249h1v1h-1zM744 249h1v1h-1zM772 249h1v1h-1zM786 249h1v1h-1zM789 249h1v1h-1zM847 249h1v1h-1zM859 249h1v1h-1zM861 249h1v1h-1zM871 249h1v1h-1zM872 249h1v1h-1zM893 249h1v1h-1zM644 250h1v1h-1zM690 250h1v1h-1zM691 250h1v1h-1zM692 250h1v1h-1zM698 250h1v1h-1zM699 250h1v1h-1zM706 250h1v1h-1zM724 250h1v1h-1zM729 250h1v1h-1zM740 250h1v1h-1zM741 250h1v1h-1zM761 250h1v1h-1zM762 250h1v1h-1zM764 250h1v1h-1zM766 250h1v1h-1zM781 250h1v1h-1zM823 250h1v1h-1zM854 250h1v1h-1zM886 250h1v1h-1zM887 250h1v1h-1zM649 251h1v1h-1zM665 251h1v1h-1zM678 251h1v1h-1zM689 251h1v1h-1zM694 251h1v1h-1zM705 251h1v1h-1zM717 251h1v1h-1zM718 251h1v1h-1zM722 251h1v1h-1zM724 251h1v1h-1zM746 251h1v1h-1zM756 251h1v1h-1zM763 251h1v1h-1zM781 251h1v1h-1zM826 251h1v1h-1zM860 251h1v1h-1zM867 251h1v1h-1zM654 252h1v1h-1zM655 252h1v1h-1zM660 252h1v1h-1zM662 252h1v1h-1zM664 252h1v1h-1zM677 252h1v1h-1zM678 252h1v1h-1zM686 252h1v1h-1zM690 252h1v1h-1zM703 252h1v1h-1zM706 252h1v1h-1zM714 252h1v1h-1zM718 252h1v1h-1zM745 252h1v1h-1zM748 252h1v1h-1zM753 252h1v1h-1zM755 252h1v1h-1zM760 252h1v1h-1zM763 252h1v1h-1zM769 252h1v1h-1zM785 252h1v1h-1zM800 252h1v1h-1zM823 252h1v1h-1zM845 252h1v1h-1zM868 252h1v1h-1zM651 253h1v1h-1zM652 253h1v1h-1zM671 253h1v1h-1zM672 253h1v1h-1zM677 253h1v1h-1zM682 253h1v1h-1zM686 253h1v1h-1zM687 253h1v1h-1zM690 253h1v1h-1zM693 253h1v1h-1zM694 253h1v1h-1zM695 253h1v1h-1zM703 253h1v1h-1zM719 253h1v1h-1zM720 253h1v1h-1zM721 253h1v1h-1zM722 253h1v1h-1zM735 253h1v1h-1zM744 253h1v1h-1zM749 253h1v1h-1zM752 253h1v1h-1zM754 253h1v1h-1zM755 253h1v1h-1zM764 253h1v1h-1zM765 253h1v1h-1zM781 253h1v1h-1zM815 253h1v1h-1zM870 253h1v1h-1zM885 253h1v1h-1zM886 253h1v1h-1zM654 254h1v1h-1zM664 254h1v1h-1zM669 254h1v1h-1zM677 254h1v1h-1zM685 254h1v1h-1zM692 254h1v1h-1zM694 254h1v1h-1zM714 254h1v1h-1zM718 254h1v1h-1zM731 254h1v1h-1zM736 254h1v1h-1zM746 254h1v1h-1zM747 254h1v1h-1zM776 254h1v1h-1zM778 254h1v1h-1zM783 254h1v1h-1zM804 254h1v1h-1zM812 254h1v1h-1zM842 254h1v1h-1zM863 254h1v1h-1zM650 255h1v1h-1zM655 255h1v1h-1zM663 255h1v1h-1zM672 255h1v1h-1zM701 255h1v1h-1zM709 255h1v1h-1zM710 255h1v1h-1zM716 255h1v1h-1zM722 255h1v1h-1zM724 255h1v1h-1zM736 255h1v1h-1zM744 255h1v1h-1zM787 255h1v1h-1zM818 255h1v1h-1zM855 255h1v1h-1zM888 255h1v1h-1zM891 255h1v1h-1zM678 256h1v1h-1zM681 256h1v1h-1zM682 256h1v1h-1zM694 256h1v1h-1zM748 256h1v1h-1zM755 256h1v1h-1zM756 256h1v1h-1zM768 256h1v1h-1zM770 256h1v1h-1zM780 256h1v1h-1zM785 256h1v1h-1zM803 256h1v1h-1zM813 256h1v1h-1zM814 256h1v1h-1zM831 256h1v1h-1zM834 256h1v1h-1zM846 256h1v1h-1zM875 256h1v1h-1zM644 257h1v1h-1zM646 257h1v1h-1zM672 257h1v1h-1zM678 257h1v1h-1zM688 257h1v1h-1zM741 257h1v1h-1zM751 257h1v1h-1zM753 257h1v1h-1zM754 257h1v1h-1zM761 257h1v1h-1zM764 257h1v1h-1zM785 257h1v1h-1zM882 257h1v1h-1zM662 258h1v1h-1zM673 258h1v1h-1zM679 258h1v1h-1zM685 258h1v1h-1zM715 258h1v1h-1zM718 258h1v1h-1zM719 258h1v1h-1zM723 258h1v1h-1zM745 258h1v1h-1zM803 258h1v1h-1zM828 258h1v1h-1zM831 258h1v1h-1zM833 258h1v1h-1zM848 258h1v1h-1zM853 258h1v1h-1zM854 258h1v1h-1zM859 258h1v1h-1zM645 259h1v1h-1zM653 259h1v1h-1zM655 259h1v1h-1zM657 259h1v1h-1zM681 259h1v1h-1zM703 259h1v1h-1zM710 259h1v1h-1zM713 259h1v1h-1zM714 259h1v1h-1zM732 259h1v1h-1zM734 259h1v1h-1zM744 259h1v1h-1zM797 259h1v1h-1zM800 259h1v1h-1zM895 259h1v1h-1zM648 260h1v1h-1zM651 260h1v1h-1zM654 260h1v1h-1zM656 260h1v1h-1zM665 260h1v1h-1zM666 260h1v1h-1zM721 260h1v1h-1zM727 260h1v1h-1zM740 260h1v1h-1zM747 260h1v1h-1zM758 260h1v1h-1zM760 260h1v1h-1zM763 260h1v1h-1zM772 260h1v1h-1zM773 260h1v1h-1zM775 260h1v1h-1zM780 260h1v1h-1zM823 260h1v1h-1zM648 261h1v1h-1zM662 261h1v1h-1zM671 261h1v1h-1zM677 261h1v1h-1zM682 261h1v1h-1zM695 261h1v1h-1zM710 261h1v1h-1zM721 261h1v1h-1zM735 261h1v1h-1zM749 261h1v1h-1zM750 261h1v1h-1zM752 261h1v1h-1zM758 261h1v1h-1zM763 261h1v1h-1zM769 261h1v1h-1zM774 261h1v1h-1zM859 261h1v1h-1zM650 262h1v1h-1zM660 262h1v1h-1zM664 262h1v1h-1zM676 262h1v1h-1zM677 262h1v1h-1zM706 262h1v1h-1zM721 262h1v1h-1zM723 262h1v1h-1zM728 262h1v1h-1zM745 262h1v1h-1zM749 262h1v1h-1zM754 262h1v1h-1zM759 262h1v1h-1zM760 262h1v1h-1zM766 262h1v1h-1zM821 262h1v1h-1zM873 262h1v1h-1zM883 262h1v1h-1zM661 263h1v1h-1zM678 263h1v1h-1zM717 263h1v1h-1zM728 263h1v1h-1zM739 263h1v1h-1zM764 263h1v1h-1zM768 263h1v1h-1zM646 264h1v1h-1zM652 264h1v1h-1zM658 264h1v1h-1zM677 264h1v1h-1zM678 264h1v1h-1zM682 264h1v1h-1zM684 264h1v1h-1zM691 264h1v1h-1zM697 264h1v1h-1zM700 264h1v1h-1zM744 264h1v1h-1zM750 264h1v1h-1zM760 264h1v1h-1zM860 264h1v1h-1zM891 264h1v1h-1zM645 265h1v1h-1zM708 265h1v1h-1zM713 265h1v1h-1zM723 265h1v1h-1zM747 265h1v1h-1zM758 265h1v1h-1zM772 265h1v1h-1zM777 265h1v1h-1zM784 265h1v1h-1zM811 265h1v1h-1zM836 265h1v1h-1zM862 265h1v1h-1zM654 266h1v1h-1zM656 266h1v1h-1zM674 266h1v1h-1zM696 266h1v1h-1zM705 266h1v1h-1zM739 266h1v1h-1zM740 266h1v1h-1zM752 266h1v1h-1zM761 266h1v1h-1zM768 266h1v1h-1zM770 266h1v1h-1zM810 266h1v1h-1zM816 266h1v1h-1zM854 266h1v1h-1zM864 266h1v1h-1zM896 266h1v1h-1zM650 267h1v1h-1zM654 267h1v1h-1zM677 267h1v1h-1zM703 267h1v1h-1zM705 267h1v1h-1zM727 267h1v1h-1zM742 267h1v1h-1zM744 267h1v1h-1zM746 267h1v1h-1zM800 267h1v1h-1zM821 267h1v1h-1zM826 267h1v1h-1zM866 267h1v1h-1zM880 267h1v1h-1zM646 268h1v1h-1zM657 268h1v1h-1zM665 268h1v1h-1zM670 268h1v1h-1zM676 268h1v1h-1zM685 268h1v1h-1zM698 268h1v1h-1zM722 268h1v1h-1zM739 268h1v1h-1zM744 268h1v1h-1zM749 268h1v1h-1zM750 268h1v1h-1zM756 268h1v1h-1zM758 268h1v1h-1zM804 268h1v1h-1zM833 268h1v1h-1zM834 268h1v1h-1zM887 268h1v1h-1zM645 269h1v1h-1zM647 269h1v1h-1zM650 269h1v1h-1zM662 269h1v1h-1zM678 269h1v1h-1zM686 269h1v1h-1zM696 269h1v1h-1zM708 269h1v1h-1zM712 269h1v1h-1zM715 269h1v1h-1zM717 269h1v1h-1zM722 269h1v1h-1zM724 269h1v1h-1zM726 269h1v1h-1zM730 269h1v1h-1zM738 269h1v1h-1zM742 269h1v1h-1zM752 269h1v1h-1zM753 269h1v1h-1zM757 269h1v1h-1zM762 269h1v1h-1zM767 269h1v1h-1zM775 269h1v1h-1zM782 269h1v1h-1zM809 269h1v1h-1zM837 269h1v1h-1zM858 269h1v1h-1zM873 269h1v1h-1zM877 269h1v1h-1zM647 270h1v1h-1zM648 270h1v1h-1zM651 270h1v1h-1zM652 270h1v1h-1zM653 270h1v1h-1zM683 270h1v1h-1zM686 270h1v1h-1zM699 270h1v1h-1zM704 270h1v1h-1zM709 270h1v1h-1zM714 270h1v1h-1zM729 270h1v1h-1zM733 270h1v1h-1zM735 270h1v1h-1zM740 270h1v1h-1zM747 270h1v1h-1zM758 270h1v1h-1zM769 270h1v1h-1zM822 270h1v1h-1zM838 270h1v1h-1zM646 271h1v1h-1zM647 271h1v1h-1zM652 271h1v1h-1zM681 271h1v1h-1zM694 271h1v1h-1zM727 271h1v1h-1zM742 271h1v1h-1zM753 271h1v1h-1zM824 271h1v1h-1zM829 271h1v1h-1zM870 271h1v1h-1zM646 272h1v1h-1zM656 272h1v1h-1zM659 272h1v1h-1zM677 272h1v1h-1zM688 272h1v1h-1zM700 272h1v1h-1zM705 272h1v1h-1zM712 272h1v1h-1zM719 272h1v1h-1zM726 272h1v1h-1zM736 272h1v1h-1zM738 272h1v1h-1zM740 272h1v1h-1zM745 272h1v1h-1zM753 272h1v1h-1zM766 272h1v1h-1zM771 272h1v1h-1zM815 272h1v1h-1zM873 272h1v1h-1zM874 272h1v1h-1zM896 272h1v1h-1zM658 273h1v1h-1zM668 273h1v1h-1zM682 273h1v1h-1zM688 273h1v1h-1zM693 273h1v1h-1zM699 273h1v1h-1zM700 273h1v1h-1zM701 273h1v1h-1zM724 273h1v1h-1zM738 273h1v1h-1zM741 273h1v1h-1zM743 273h1v1h-1zM744 273h1v1h-1zM761 273h1v1h-1zM763 273h1v1h-1zM819 273h1v1h-1zM849 273h1v1h-1zM870 273h1v1h-1zM649 274h1v1h-1zM652 274h1v1h-1zM660 274h1v1h-1zM663 274h1v1h-1zM668 274h1v1h-1zM675 274h1v1h-1zM680 274h1v1h-1zM684 274h1v1h-1zM698 274h1v1h-1zM704 274h1v1h-1zM709 274h1v1h-1zM716 274h1v1h-1zM717 274h1v1h-1zM735 274h1v1h-1zM750 274h1v1h-1zM751 274h1v1h-1zM755 274h1v1h-1zM767 274h1v1h-1zM768 274h1v1h-1zM790 274h1v1h-1zM792 274h1v1h-1zM804 274h1v1h-1zM824 274h1v1h-1zM831 274h1v1h-1zM849 274h1v1h-1zM858 274h1v1h-1zM881 274h1v1h-1zM883 274h1v1h-1zM669 275h1v1h-1zM684 275h1v1h-1zM685 275h1v1h-1zM698 275h1v1h-1zM702 275h1v1h-1zM706 275h1v1h-1zM714 275h1v1h-1zM753 275h1v1h-1zM755 275h1v1h-1zM759 275h1v1h-1zM765 275h1v1h-1zM769 275h1v1h-1zM778 275h1v1h-1zM796 275h1v1h-1zM803 275h1v1h-1zM820 275h1v1h-1zM840 275h1v1h-1zM871 275h1v1h-1zM650 276h1v1h-1zM656 276h1v1h-1zM661 276h1v1h-1zM678 276h1v1h-1zM694 276h1v1h-1zM710 276h1v1h-1zM712 276h1v1h-1zM721 276h1v1h-1zM722 276h1v1h-1zM726 276h1v1h-1zM730 276h1v1h-1zM759 276h1v1h-1zM824 276h1v1h-1zM849 276h1v1h-1zM646 277h1v1h-1zM649 277h1v1h-1zM652 277h1v1h-1zM656 277h1v1h-1zM661 277h1v1h-1zM681 277h1v1h-1zM684 277h1v1h-1zM685 277h1v1h-1zM686 277h1v1h-1zM710 277h1v1h-1zM713 277h1v1h-1zM726 277h1v1h-1zM761 277h1v1h-1zM767 277h1v1h-1zM772 277h1v1h-1zM787 277h1v1h-1zM835 277h1v1h-1zM839 277h1v1h-1zM868 277h1v1h-1zM896 277h1v1h-1zM644 278h1v1h-1zM649 278h1v1h-1zM666 278h1v1h-1zM672 278h1v1h-1zM674 278h1v1h-1zM694 278h1v1h-1zM699 278h1v1h-1zM705 278h1v1h-1zM707 278h1v1h-1zM716 278h1v1h-1zM724 278h1v1h-1zM726 278h1v1h-1zM728 278h1v1h-1zM731 278h1v1h-1zM737 278h1v1h-1zM739 278h1v1h-1zM744 278h1v1h-1zM747 278h1v1h-1zM787 278h1v1h-1zM808 278h1v1h-1zM863 278h1v1h-1zM652 279h1v1h-1zM693 279h1v1h-1zM697 279h1v1h-1zM703 279h1v1h-1zM762 279h1v1h-1zM777 279h1v1h-1zM806 279h1v1h-1zM825 279h1v1h-1zM649 280h1v1h-1zM655 280h1v1h-1zM664 280h1v1h-1zM672 280h1v1h-1zM684 280h1v1h-1zM687 280h1v1h-1zM698 280h1v1h-1zM705 280h1v1h-1zM707 280h1v1h-1zM717 280h1v1h-1zM726 280h1v1h-1zM757 280h1v1h-1zM759 280h1v1h-1zM791 280h1v1h-1zM887 280h1v1h-1zM655 281h1v1h-1zM668 281h1v1h-1zM690 281h1v1h-1zM692 281h1v1h-1zM701 281h1v1h-1zM706 281h1v1h-1zM707 281h1v1h-1zM716 281h1v1h-1zM719 281h1v1h-1zM752 281h1v1h-1zM769 281h1v1h-1zM771 281h1v1h-1zM783 281h1v1h-1zM834 281h1v1h-1zM854 281h1v1h-1zM857 281h1v1h-1zM897 281h1v1h-1zM647 282h1v1h-1zM664 282h1v1h-1zM665 282h1v1h-1zM685 282h1v1h-1zM686 282h1v1h-1zM688 282h1v1h-1zM689 282h1v1h-1zM704 282h1v1h-1zM713 282h1v1h-1zM717 282h1v1h-1zM718 282h1v1h-1zM724 282h1v1h-1zM729 282h1v1h-1zM741 282h1v1h-1zM757 282h1v1h-1zM815 282h1v1h-1zM865 282h1v1h-1zM877 282h1v1h-1zM883 282h1v1h-1zM890 282h1v1h-1zM655 283h1v1h-1zM666 283h1v1h-1zM668 283h1v1h-1zM672 283h1v1h-1zM684 283h1v1h-1zM697 283h1v1h-1zM700 283h1v1h-1zM704 283h1v1h-1zM723 283h1v1h-1zM740 283h1v1h-1zM745 283h1v1h-1zM761 283h1v1h-1zM780 283h1v1h-1zM787 283h1v1h-1zM801 283h1v1h-1zM806 283h1v1h-1zM815 283h1v1h-1zM818 283h1v1h-1zM842 283h1v1h-1zM646 284h1v1h-1zM654 284h1v1h-1zM656 284h1v1h-1zM665 284h1v1h-1zM670 284h1v1h-1zM676 284h1v1h-1zM683 284h1v1h-1zM686 284h1v1h-1zM688 284h1v1h-1zM698 284h1v1h-1zM712 284h1v1h-1zM716 284h1v1h-1zM723 284h1v1h-1zM746 284h1v1h-1zM748 284h1v1h-1zM755 284h1v1h-1zM757 284h1v1h-1zM759 284h1v1h-1zM773 284h1v1h-1zM776 284h1v1h-1zM778 284h1v1h-1zM787 284h1v1h-1zM791 284h1v1h-1zM794 284h1v1h-1zM806 284h1v1h-1zM821 284h1v1h-1zM838 284h1v1h-1zM898 284h1v1h-1zM662 285h1v1h-1zM677 285h1v1h-1zM681 285h1v1h-1zM694 285h1v1h-1zM696 285h1v1h-1zM700 285h1v1h-1zM709 285h1v1h-1zM712 285h1v1h-1zM713 285h1v1h-1zM714 285h1v1h-1zM723 285h1v1h-1zM755 285h1v1h-1zM761 285h1v1h-1zM773 285h1v1h-1zM781 285h1v1h-1zM797 285h1v1h-1zM823 285h1v1h-1zM836 285h1v1h-1zM891 285h1v1h-1zM657 286h1v1h-1zM683 286h1v1h-1zM688 286h1v1h-1zM689 286h1v1h-1zM690 286h1v1h-1zM692 286h1v1h-1zM693 286h1v1h-1zM703 286h1v1h-1zM720 286h1v1h-1zM725 286h1v1h-1zM732 286h1v1h-1zM739 286h1v1h-1zM743 286h1v1h-1zM746 286h1v1h-1zM754 286h1v1h-1zM764 286h1v1h-1zM765 286h1v1h-1zM771 286h1v1h-1zM776 286h1v1h-1zM821 286h1v1h-1zM830 286h1v1h-1zM845 286h1v1h-1zM855 286h1v1h-1zM655 287h1v1h-1zM678 287h1v1h-1zM680 287h1v1h-1zM684 287h1v1h-1zM688 287h1v1h-1zM695 287h1v1h-1zM701 287h1v1h-1zM704 287h1v1h-1zM711 287h1v1h-1zM713 287h1v1h-1zM719 287h1v1h-1zM720 287h1v1h-1zM721 287h1v1h-1zM738 287h1v1h-1zM762 287h1v1h-1zM765 287h1v1h-1zM767 287h1v1h-1zM771 287h1v1h-1zM772 287h1v1h-1zM776 287h1v1h-1zM783 287h1v1h-1zM818 287h1v1h-1zM846 287h1v1h-1zM886 287h1v1h-1zM889 287h1v1h-1zM894 287h1v1h-1zM647 288h1v1h-1zM684 288h1v1h-1zM688 288h1v1h-1zM707 288h1v1h-1zM710 288h1v1h-1zM721 288h1v1h-1zM730 288h1v1h-1zM732 288h1v1h-1zM736 288h1v1h-1zM737 288h1v1h-1zM750 288h1v1h-1zM797 288h1v1h-1zM813 288h1v1h-1zM840 288h1v1h-1zM883 288h1v1h-1zM891 288h1v1h-1zM690 289h1v1h-1zM694 289h1v1h-1zM695 289h1v1h-1zM710 289h1v1h-1zM715 289h1v1h-1zM761 289h1v1h-1zM767 289h1v1h-1zM864 289h1v1h-1zM681 290h1v1h-1zM688 290h1v1h-1zM689 290h1v1h-1zM690 290h1v1h-1zM692 290h1v1h-1zM698 290h1v1h-1zM702 290h1v1h-1zM725 290h1v1h-1zM732 290h1v1h-1zM749 290h1v1h-1zM768 290h1v1h-1zM813 290h1v1h-1zM868 290h1v1h-1zM870 290h1v1h-1zM876 290h1v1h-1zM898 290h1v1h-1zM678 291h1v1h-1zM681 291h1v1h-1zM689 291h1v1h-1zM716 291h1v1h-1zM726 291h1v1h-1zM745 291h1v1h-1zM750 291h1v1h-1zM751 291h1v1h-1zM756 291h1v1h-1zM769 291h1v1h-1zM786 291h1v1h-1zM844 291h1v1h-1zM853 291h1v1h-1zM646 292h1v1h-1zM652 292h1v1h-1zM656 292h1v1h-1zM670 292h1v1h-1zM689 292h1v1h-1zM696 292h1v1h-1zM697 292h1v1h-1zM698 292h1v1h-1zM699 292h1v1h-1zM703 292h1v1h-1zM711 292h1v1h-1zM713 292h1v1h-1zM714 292h1v1h-1zM752 292h1v1h-1zM756 292h1v1h-1zM761 292h1v1h-1zM764 292h1v1h-1zM843 292h1v1h-1zM850 292h1v1h-1zM874 292h1v1h-1zM886 292h1v1h-1zM890 292h1v1h-1zM645 293h1v1h-1zM657 293h1v1h-1zM663 293h1v1h-1zM671 293h1v1h-1zM677 293h1v1h-1zM689 293h1v1h-1zM697 293h1v1h-1zM703 293h1v1h-1zM720 293h1v1h-1zM722 293h1v1h-1zM728 293h1v1h-1zM730 293h1v1h-1zM741 293h1v1h-1zM744 293h1v1h-1zM753 293h1v1h-1zM760 293h1v1h-1zM761 293h1v1h-1zM764 293h1v1h-1zM818 293h1v1h-1zM819 293h1v1h-1zM840 293h1v1h-1zM649 294h1v1h-1zM652 294h1v1h-1zM662 294h1v1h-1zM664 294h1v1h-1zM681 294h1v1h-1zM688 294h1v1h-1zM692 294h1v1h-1zM696 294h1v1h-1zM700 294h1v1h-1zM710 294h1v1h-1zM721 294h1v1h-1zM749 294h1v1h-1zM784 294h1v1h-1zM864 294h1v1h-1zM893 294h1v1h-1zM645 295h1v1h-1zM650 295h1v1h-1zM660 295h1v1h-1zM686 295h1v1h-1zM697 295h1v1h-1zM707 295h1v1h-1zM708 295h1v1h-1zM718 295h1v1h-1zM729 295h1v1h-1zM730 295h1v1h-1zM734 295h1v1h-1zM740 295h1v1h-1zM756 295h1v1h-1zM767 295h1v1h-1zM820 295h1v1h-1zM831 295h1v1h-1zM839 295h1v1h-1zM847 295h1v1h-1zM648 296h1v1h-1zM665 296h1v1h-1zM666 296h1v1h-1zM678 296h1v1h-1zM682 296h1v1h-1zM688 296h1v1h-1zM696 296h1v1h-1zM700 296h1v1h-1zM702 296h1v1h-1zM711 296h1v1h-1zM722 296h1v1h-1zM741 296h1v1h-1zM749 296h1v1h-1zM750 296h1v1h-1zM755 296h1v1h-1zM768 296h1v1h-1zM779 296h1v1h-1zM809 296h1v1h-1zM855 296h1v1h-1zM878 296h1v1h-1zM893 296h1v1h-1zM650 297h1v1h-1zM678 297h1v1h-1zM679 297h1v1h-1zM714 297h1v1h-1zM715 297h1v1h-1zM719 297h1v1h-1zM720 297h1v1h-1zM738 297h1v1h-1zM742 297h1v1h-1zM766 297h1v1h-1zM768 297h1v1h-1zM829 297h1v1h-1zM868 297h1v1h-1zM893 297h1v1h-1zM645 298h1v1h-1zM647 298h1v1h-1zM657 298h1v1h-1zM665 298h1v1h-1zM673 298h1v1h-1zM684 298h1v1h-1zM688 298h1v1h-1zM704 298h1v1h-1zM707 298h1v1h-1zM715 298h1v1h-1zM734 298h1v1h-1zM743 298h1v1h-1zM744 298h1v1h-1zM745 298h1v1h-1zM751 298h1v1h-1zM759 298h1v1h-1zM770 298h1v1h-1zM843 298h1v1h-1zM888 298h1v1h-1zM676 299h1v1h-1zM677 299h1v1h-1zM678 299h1v1h-1zM688 299h1v1h-1zM696 299h1v1h-1zM697 299h1v1h-1zM698 299h1v1h-1zM730 299h1v1h-1zM736 299h1v1h-1zM737 299h1v1h-1zM741 299h1v1h-1zM746 299h1v1h-1zM750 299h1v1h-1zM755 299h1v1h-1zM783 299h1v1h-1zM804 299h1v1h-1zM650 300h1v1h-1zM651 300h1v1h-1zM679 300h1v1h-1zM680 300h1v1h-1zM696 300h1v1h-1zM698 300h1v1h-1zM699 300h1v1h-1zM700 300h1v1h-1zM736 300h1v1h-1zM737 300h1v1h-1zM750 300h1v1h-1zM755 300h1v1h-1zM756 300h1v1h-1zM758 300h1v1h-1zM774 300h1v1h-1zM804 300h1v1h-1zM811 300h1v1h-1zM875 300h1v1h-1zM884 300h1v1h-1zM677 301h1v1h-1zM696 301h1v1h-1zM710 301h1v1h-1zM713 301h1v1h-1zM718 301h1v1h-1zM729 301h1v1h-1zM731 301h1v1h-1zM745 301h1v1h-1zM751 301h1v1h-1zM764 301h1v1h-1zM792 301h1v1h-1zM807 301h1v1h-1zM849 301h1v1h-1zM872 301h1v1h-1zM896 301h1v1h-1zM898 301h1v1h-1zM646 302h1v1h-1zM649 302h1v1h-1zM650 302h1v1h-1zM668 302h1v1h-1zM676 302h1v1h-1zM684 302h1v1h-1zM689 302h1v1h-1zM697 302h1v1h-1zM713 302h1v1h-1zM734 302h1v1h-1zM738 302h1v1h-1zM740 302h1v1h-1zM760 302h1v1h-1zM830 302h1v1h-1zM664 303h1v1h-1zM686 303h1v1h-1zM694 303h1v1h-1zM704 303h1v1h-1zM706 303h1v1h-1zM707 303h1v1h-1zM720 303h1v1h-1zM721 303h1v1h-1zM724 303h1v1h-1zM727 303h1v1h-1zM730 303h1v1h-1zM731 303h1v1h-1zM733 303h1v1h-1zM745 303h1v1h-1zM758 303h1v1h-1zM788 303h1v1h-1zM804 303h1v1h-1zM816 303h1v1h-1zM818 303h1v1h-1zM888 303h1v1h-1zM644 304h1v1h-1zM675 304h1v1h-1zM682 304h1v1h-1zM685 304h1v1h-1zM689 304h1v1h-1zM696 304h1v1h-1zM710 304h1v1h-1zM719 304h1v1h-1zM721 304h1v1h-1zM723 304h1v1h-1zM726 304h1v1h-1zM729 304h1v1h-1zM731 304h1v1h-1zM737 304h1v1h-1zM741 304h1v1h-1zM742 304h1v1h-1zM753 304h1v1h-1zM757 304h1v1h-1zM766 304h1v1h-1zM782 304h1v1h-1zM787 304h1v1h-1zM796 304h1v1h-1zM814 304h1v1h-1zM817 304h1v1h-1zM830 304h1v1h-1zM831 304h1v1h-1zM833 304h1v1h-1zM837 304h1v1h-1zM874 304h1v1h-1zM888 304h1v1h-1zM653 305h1v1h-1zM656 305h1v1h-1zM664 305h1v1h-1zM670 305h1v1h-1zM681 305h1v1h-1zM685 305h1v1h-1zM691 305h1v1h-1zM693 305h1v1h-1zM705 305h1v1h-1zM714 305h1v1h-1zM716 305h1v1h-1zM725 305h1v1h-1zM726 305h1v1h-1zM750 305h1v1h-1zM753 305h1v1h-1zM754 305h1v1h-1zM768 305h1v1h-1zM785 305h1v1h-1zM790 305h1v1h-1zM816 305h1v1h-1zM832 305h1v1h-1zM842 305h1v1h-1zM856 305h1v1h-1zM644 306h1v1h-1zM645 306h1v1h-1zM654 306h1v1h-1zM657 306h1v1h-1zM674 306h1v1h-1zM676 306h1v1h-1zM685 306h1v1h-1zM694 306h1v1h-1zM711 306h1v1h-1zM712 306h1v1h-1zM714 306h1v1h-1zM716 306h1v1h-1zM725 306h1v1h-1zM729 306h1v1h-1zM736 306h1v1h-1zM747 306h1v1h-1zM749 306h1v1h-1zM750 306h1v1h-1zM752 306h1v1h-1zM753 306h1v1h-1zM760 306h1v1h-1zM867 306h1v1h-1zM871 306h1v1h-1zM872 306h1v1h-1zM883 306h1v1h-1zM659 307h1v1h-1zM682 307h1v1h-1zM692 307h1v1h-1zM695 307h1v1h-1zM696 307h1v1h-1zM713 307h1v1h-1zM716 307h1v1h-1zM730 307h1v1h-1zM742 307h1v1h-1zM744 307h1v1h-1zM766 307h1v1h-1zM775 307h1v1h-1zM786 307h1v1h-1zM820 307h1v1h-1zM829 307h1v1h-1zM875 307h1v1h-1zM886 307h1v1h-1zM893 307h1v1h-1zM644 308h1v1h-1zM646 308h1v1h-1zM666 308h1v1h-1zM696 308h1v1h-1zM718 308h1v1h-1zM720 308h1v1h-1zM733 308h1v1h-1zM744 308h1v1h-1zM750 308h1v1h-1zM753 308h1v1h-1zM754 308h1v1h-1zM755 308h1v1h-1zM758 308h1v1h-1zM761 308h1v1h-1zM770 308h1v1h-1zM771 308h1v1h-1zM781 308h1v1h-1zM789 308h1v1h-1zM847 308h1v1h-1zM870 308h1v1h-1zM873 308h1v1h-1zM897 308h1v1h-1zM649 309h1v1h-1zM676 309h1v1h-1zM677 309h1v1h-1zM684 309h1v1h-1zM692 309h1v1h-1zM696 309h1v1h-1zM702 309h1v1h-1zM704 309h1v1h-1zM712 309h1v1h-1zM713 309h1v1h-1zM716 309h1v1h-1zM717 309h1v1h-1zM719 309h1v1h-1zM722 309h1v1h-1zM727 309h1v1h-1zM729 309h1v1h-1zM731 309h1v1h-1zM743 309h1v1h-1zM744 309h1v1h-1zM752 309h1v1h-1zM766 309h1v1h-1zM772 309h1v1h-1zM784 309h1v1h-1zM800 309h1v1h-1zM806 309h1v1h-1zM846 309h1v1h-1zM855 309h1v1h-1zM871 309h1v1h-1zM883 309h1v1h-1zM885 309h1v1h-1zM894 309h1v1h-1zM657 310h1v1h-1zM674 310h1v1h-1zM692 310h1v1h-1zM696 310h1v1h-1zM710 310h1v1h-1zM737 310h1v1h-1zM741 310h1v1h-1zM742 310h1v1h-1zM755 310h1v1h-1zM764 310h1v1h-1zM765 310h1v1h-1zM774 310h1v1h-1zM783 310h1v1h-1zM788 310h1v1h-1zM789 310h1v1h-1zM849 310h1v1h-1zM856 310h1v1h-1zM880 310h1v1h-1zM883 310h1v1h-1zM891 310h1v1h-1zM892 310h1v1h-1zM648 311h1v1h-1zM652 311h1v1h-1zM657 311h1v1h-1zM661 311h1v1h-1zM678 311h1v1h-1zM685 311h1v1h-1zM700 311h1v1h-1zM714 311h1v1h-1zM716 311h1v1h-1zM719 311h1v1h-1zM723 311h1v1h-1zM726 311h1v1h-1zM727 311h1v1h-1zM749 311h1v1h-1zM755 311h1v1h-1zM830 311h1v1h-1zM839 311h1v1h-1zM863 311h1v1h-1zM889 311h1v1h-1zM645 312h1v1h-1zM653 312h1v1h-1zM665 312h1v1h-1zM682 312h1v1h-1zM687 312h1v1h-1zM694 312h1v1h-1zM698 312h1v1h-1zM727 312h1v1h-1zM729 312h1v1h-1zM731 312h1v1h-1zM742 312h1v1h-1zM747 312h1v1h-1zM753 312h1v1h-1zM769 312h1v1h-1zM777 312h1v1h-1zM782 312h1v1h-1zM829 312h1v1h-1zM652 313h1v1h-1zM653 313h1v1h-1zM663 313h1v1h-1zM674 313h1v1h-1zM675 313h1v1h-1zM680 313h1v1h-1zM682 313h1v1h-1zM686 313h1v1h-1zM708 313h1v1h-1zM720 313h1v1h-1zM727 313h1v1h-1zM730 313h1v1h-1zM735 313h1v1h-1zM736 313h1v1h-1zM743 313h1v1h-1zM750 313h1v1h-1zM752 313h1v1h-1zM757 313h1v1h-1zM758 313h1v1h-1zM762 313h1v1h-1zM763 313h1v1h-1zM765 313h1v1h-1zM769 313h1v1h-1zM775 313h1v1h-1zM779 313h1v1h-1zM794 313h1v1h-1zM799 313h1v1h-1zM808 313h1v1h-1zM820 313h1v1h-1zM828 313h1v1h-1zM831 313h1v1h-1zM846 313h1v1h-1zM868 313h1v1h-1zM889 313h1v1h-1zM680 314h1v1h-1zM682 314h1v1h-1zM683 314h1v1h-1zM705 314h1v1h-1zM706 314h1v1h-1zM710 314h1v1h-1zM711 314h1v1h-1zM712 314h1v1h-1zM715 314h1v1h-1zM741 314h1v1h-1zM752 314h1v1h-1zM760 314h1v1h-1zM776 314h1v1h-1zM782 314h1v1h-1zM795 314h1v1h-1zM808 314h1v1h-1zM818 314h1v1h-1zM888 314h1v1h-1zM893 314h1v1h-1zM644 315h1v1h-1zM655 315h1v1h-1zM663 315h1v1h-1zM672 315h1v1h-1zM685 315h1v1h-1zM686 315h1v1h-1zM712 315h1v1h-1zM720 315h1v1h-1zM721 315h1v1h-1zM722 315h1v1h-1zM725 315h1v1h-1zM730 315h1v1h-1zM731 315h1v1h-1zM742 315h1v1h-1zM755 315h1v1h-1zM761 315h1v1h-1zM769 315h1v1h-1zM790 315h1v1h-1zM793 315h1v1h-1zM805 315h1v1h-1zM854 315h1v1h-1zM667 316h1v1h-1zM681 316h1v1h-1zM685 316h1v1h-1zM705 316h1v1h-1zM729 316h1v1h-1zM739 316h1v1h-1zM743 316h1v1h-1zM744 316h1v1h-1zM745 316h1v1h-1zM751 316h1v1h-1zM753 316h1v1h-1zM756 316h1v1h-1zM758 316h1v1h-1zM765 316h1v1h-1zM766 316h1v1h-1zM806 316h1v1h-1zM868 316h1v1h-1zM879 316h1v1h-1zM882 316h1v1h-1zM644 317h1v1h-1zM646 317h1v1h-1zM648 317h1v1h-1zM652 317h1v1h-1zM654 317h1v1h-1zM661 317h1v1h-1zM678 317h1v1h-1zM679 317h1v1h-1zM680 317h1v1h-1zM711 317h1v1h-1zM729 317h1v1h-1zM755 317h1v1h-1zM761 317h1v1h-1zM762 317h1v1h-1zM771 317h1v1h-1zM775 317h1v1h-1zM806 317h1v1h-1zM837 317h1v1h-1zM893 317h1v1h-1zM644 318h1v1h-1zM647 318h1v1h-1zM648 318h1v1h-1zM652 318h1v1h-1zM664 318h1v1h-1zM668 318h1v1h-1zM679 318h1v1h-1zM682 318h1v1h-1zM692 318h1v1h-1zM711 318h1v1h-1zM724 318h1v1h-1zM741 318h1v1h-1zM744 318h1v1h-1zM769 318h1v1h-1zM782 318h1v1h-1zM791 318h1v1h-1zM794 318h1v1h-1zM807 318h1v1h-1zM816 318h1v1h-1zM820 318h1v1h-1zM833 318h1v1h-1zM856 318h1v1h-1zM872 318h1v1h-1zM875 318h1v1h-1zM876 318h1v1h-1zM877 318h1v1h-1zM880 318h1v1h-1zM645 319h1v1h-1zM647 319h1v1h-1zM656 319h1v1h-1zM661 319h1v1h-1zM669 319h1v1h-1zM677 319h1v1h-1zM680 319h1v1h-1zM681 319h1v1h-1zM684 319h1v1h-1zM688 319h1v1h-1zM694 319h1v1h-1zM711 319h1v1h-1zM713 319h1v1h-1zM729 319h1v1h-1zM742 319h1v1h-1zM752 319h1v1h-1zM753 319h1v1h-1zM762 319h1v1h-1zM765 319h1v1h-1zM803 319h1v1h-1zM814 319h1v1h-1zM815 319h1v1h-1zM832 319h1v1h-1zM873 319h1v1h-1zM898 319h1v1h-1zM662 320h1v1h-1zM669 320h1v1h-1zM681 320h1v1h-1zM682 320h1v1h-1zM685 320h1v1h-1zM694 320h1v1h-1zM713 320h1v1h-1zM716 320h1v1h-1zM721 320h1v1h-1zM743 320h1v1h-1zM746 320h1v1h-1zM747 320h1v1h-1zM752 320h1v1h-1zM760 320h1v1h-1zM807 320h1v1h-1zM816 320h1v1h-1zM829 320h1v1h-1zM861 320h1v1h-1zM886 320h1v1h-1zM649 321h1v1h-1zM676 321h1v1h-1zM678 321h1v1h-1zM685 321h1v1h-1zM689 321h1v1h-1zM700 321h1v1h-1zM721 321h1v1h-1zM733 321h1v1h-1zM743 321h1v1h-1zM745 321h1v1h-1zM766 321h1v1h-1zM769 321h1v1h-1zM783 321h1v1h-1zM788 321h1v1h-1zM797 321h1v1h-1zM811 321h1v1h-1zM837 321h1v1h-1zM890 321h1v1h-1zM673 322h1v1h-1zM679 322h1v1h-1zM683 322h1v1h-1zM690 322h1v1h-1zM696 322h1v1h-1zM704 322h1v1h-1zM708 322h1v1h-1zM710 322h1v1h-1zM718 322h1v1h-1zM740 322h1v1h-1zM746 322h1v1h-1zM747 322h1v1h-1zM750 322h1v1h-1zM760 322h1v1h-1zM767 322h1v1h-1zM809 322h1v1h-1zM815 322h1v1h-1zM825 322h1v1h-1zM839 322h1v1h-1zM848 322h1v1h-1zM870 322h1v1h-1zM874 322h1v1h-1zM877 322h1v1h-1zM885 322h1v1h-1zM657 323h1v1h-1zM677 323h1v1h-1zM720 323h1v1h-1zM731 323h1v1h-1zM735 323h1v1h-1zM750 323h1v1h-1zM828 323h1v1h-1zM837 323h1v1h-1zM852 323h1v1h-1zM870 323h1v1h-1zM896 323h1v1h-1zM648 324h1v1h-1zM662 324h1v1h-1zM674 324h1v1h-1zM677 324h1v1h-1zM682 324h1v1h-1zM711 324h1v1h-1zM712 324h1v1h-1zM721 324h1v1h-1zM745 324h1v1h-1zM747 324h1v1h-1zM762 324h1v1h-1zM790 324h1v1h-1zM797 324h1v1h-1zM808 324h1v1h-1zM820 324h1v1h-1zM840 324h1v1h-1zM895 324h1v1h-1zM644 325h1v1h-1zM652 325h1v1h-1zM659 325h1v1h-1zM671 325h1v1h-1zM676 325h1v1h-1zM682 325h1v1h-1zM685 325h1v1h-1zM689 325h1v1h-1zM714 325h1v1h-1zM718 325h1v1h-1zM728 325h1v1h-1zM730 325h1v1h-1zM732 325h1v1h-1zM733 325h1v1h-1zM736 325h1v1h-1zM741 325h1v1h-1zM743 325h1v1h-1zM750 325h1v1h-1zM768 325h1v1h-1zM769 325h1v1h-1zM771 325h1v1h-1zM773 325h1v1h-1zM777 325h1v1h-1zM789 325h1v1h-1zM813 325h1v1h-1zM840 325h1v1h-1zM883 325h1v1h-1zM647 326h1v1h-1zM680 326h1v1h-1zM682 326h1v1h-1zM692 326h1v1h-1zM699 326h1v1h-1zM708 326h1v1h-1zM710 326h1v1h-1zM711 326h1v1h-1zM721 326h1v1h-1zM724 326h1v1h-1zM730 326h1v1h-1zM735 326h1v1h-1zM738 326h1v1h-1zM740 326h1v1h-1zM742 326h1v1h-1zM746 326h1v1h-1zM760 326h1v1h-1zM765 326h1v1h-1zM775 326h1v1h-1zM896 326h1v1h-1zM644 327h1v1h-1zM646 327h1v1h-1zM654 327h1v1h-1zM668 327h1v1h-1zM699 327h1v1h-1zM728 327h1v1h-1zM741 327h1v1h-1zM873 327h1v1h-1zM668 328h1v1h-1zM677 328h1v1h-1zM683 328h1v1h-1zM691 328h1v1h-1zM704 328h1v1h-1zM735 328h1v1h-1zM739 328h1v1h-1zM747 328h1v1h-1zM752 328h1v1h-1zM761 328h1v1h-1zM774 328h1v1h-1zM799 328h1v1h-1zM652 329h1v1h-1zM664 329h1v1h-1zM670 329h1v1h-1zM676 329h1v1h-1zM682 329h1v1h-1zM686 329h1v1h-1zM721 329h1v1h-1zM726 329h1v1h-1zM769 329h1v1h-1zM794 329h1v1h-1zM809 329h1v1h-1zM815 329h1v1h-1zM822 329h1v1h-1zM874 329h1v1h-1zM876 329h1v1h-1zM652 330h1v1h-1zM689 330h1v1h-1zM715 330h1v1h-1zM745 330h1v1h-1zM759 330h1v1h-1zM760 330h1v1h-1zM763 330h1v1h-1zM767 330h1v1h-1zM826 330h1v1h-1zM843 330h1v1h-1zM861 330h1v1h-1zM871 330h1v1h-1zM644 331h1v1h-1zM649 331h1v1h-1zM657 331h1v1h-1zM670 331h1v1h-1zM671 331h1v1h-1zM673 331h1v1h-1zM674 331h1v1h-1zM681 331h1v1h-1zM692 331h1v1h-1zM696 331h1v1h-1zM707 331h1v1h-1zM708 331h1v1h-1zM709 331h1v1h-1zM715 331h1v1h-1zM741 331h1v1h-1zM742 331h1v1h-1zM756 331h1v1h-1zM761 331h1v1h-1zM765 331h1v1h-1zM771 331h1v1h-1zM799 331h1v1h-1zM872 331h1v1h-1zM898 331h1v1h-1zM655 332h1v1h-1zM680 332h1v1h-1zM682 332h1v1h-1zM683 332h1v1h-1zM685 332h1v1h-1zM689 332h1v1h-1zM694 332h1v1h-1zM716 332h1v1h-1zM724 332h1v1h-1zM741 332h1v1h-1zM744 332h1v1h-1zM781 332h1v1h-1zM785 332h1v1h-1zM815 332h1v1h-1zM825 332h1v1h-1zM864 332h1v1h-1zM871 332h1v1h-1zM879 332h1v1h-1zM645 333h1v1h-1zM664 333h1v1h-1zM668 333h1v1h-1zM670 333h1v1h-1zM682 333h1v1h-1zM686 333h1v1h-1zM698 333h1v1h-1zM700 333h1v1h-1zM720 333h1v1h-1zM726 333h1v1h-1zM743 333h1v1h-1zM744 333h1v1h-1zM747 333h1v1h-1zM749 333h1v1h-1zM753 333h1v1h-1zM761 333h1v1h-1zM804 333h1v1h-1zM809 333h1v1h-1zM813 333h1v1h-1zM814 333h1v1h-1zM820 333h1v1h-1zM828 333h1v1h-1zM832 333h1v1h-1zM875 333h1v1h-1zM880 333h1v1h-1zM889 333h1v1h-1zM891 333h1v1h-1zM658 334h1v1h-1zM672 334h1v1h-1zM695 334h1v1h-1zM709 334h1v1h-1zM710 334h1v1h-1zM713 334h1v1h-1zM721 334h1v1h-1zM729 334h1v1h-1zM730 334h1v1h-1zM735 334h1v1h-1zM754 334h1v1h-1zM772 334h1v1h-1zM794 334h1v1h-1zM812 334h1v1h-1zM838 334h1v1h-1zM864 334h1v1h-1zM879 334h1v1h-1zM658 335h1v1h-1zM679 335h1v1h-1zM689 335h1v1h-1zM695 335h1v1h-1zM697 335h1v1h-1zM710 335h1v1h-1zM716 335h1v1h-1zM730 335h1v1h-1zM743 335h1v1h-1zM753 335h1v1h-1zM759 335h1v1h-1zM760 335h1v1h-1zM875 335h1v1h-1z" fill="#0808a8"/>
</svg>
<div class="t" id="t_seed" style="left:74.11px;top:347px;transform:scaleX(0.8745);">Spectral Distribution 8 bit (seed)</div><div class="t" id="t_fin" style="left:378.91px;top:347px;transform:scaleX(0.8821);">Spectral Distribution (final cache)</div><div class="t" id="t_xy" style="left:673.76px;top:347px;transform:scaleX(0.8953);">XY Scattergraph (final cache)</div>
<div class="t" id="t_s1a" style="left:378.92px;top:367px;transform:scaleX(0.8748);">Samples;</div><div class="t" id="t_s1b" style="left:434.74px;top:367px;transform:scaleX(0.8937);">1000000</div><div class="t" id="t_s2a" style="left:673.54px;top:367px;transform:scaleX(0.8810);">Samples;</div><div class="t" id="t_s2b" style="left:728.99px;top:367px;transform:scaleX(0.8969);">7500</div>
<div class="t" id="t_loops" style="left:34.00px;top:377px;transform:scaleX(0.8735);">Loops:</div>
<div style="position:absolute;left:74px;top:372px;width:44px;height:19px;border:1px solid #908c53;border-right-color:#ebe8d5;border-bottom-color:#ebe8d5"></div><div style="position:absolute;left:75px;top:373px;width:42px;height:17px;border:1px solid #000;border-right-color:#cbc8aa;border-bottom-color:#cbc8aa;background:#dad9be;overflow:hidden"></div>
<div class="t" id="t_one" style="left:77.81px;top:375px;transform:scaleX(0.8000);">1</div>
<div style="position:absolute;left:134px;top:372px;width:189px;height:19px;border:1px solid #000"></div>
<div style="position:absolute;left:135px;top:373px;width:187px;height:17px;border:1px solid #ebe8d5;border-right-color:#000;border-bottom-color:#000;background:#c8c7a6"></div><div style="position:absolute;left:136px;top:374px;width:185px;height:15px;border:1px solid #c8c7a6;border-right-color:#908c53;border-bottom-color:#908c53;"></div>
<div style="position:absolute;left:138px;top:376px;width:181px;height:11px;border:1px dotted #000"></div>
<div class="t" id="t_gen" style="left:175.55px;top:375px;transform:scaleX(0.8752);">Generate Entropy Data</div>
<div style="position:absolute;left:34px;top:407px;width:325px;height:1px;background:#908c53"></div><div style="position:absolute;left:34px;top:407px;width:1px;height:12px;background:#908c53"></div><div style="position:absolute;left:34px;top:419px;width:326px;height:1px;background:#ebe8d5"></div><div style="position:absolute;left:359px;top:407px;width:1px;height:13px;background:#ebe8d5"></div>
<div style="position:absolute;left:36px;top:409px;width:6px;height:9px;background:#7d3e43"></div><div style="position:absolute;left:44px;top:409px;width:6px;height:9px;background:#7d3e43"></div><div style="position:absolute;left:52px;top:409px;width:6px;height:9px;background:#7d3e43"></div><div style="position:absolute;left:60px;top:409px;width:6px;height:9px;background:#7d3e43"></div><div style="position:absolute;left:68px;top:409px;width:6px;height:9px;background:#7d3e43"></div><div style="position:absolute;left:76px;top:409px;width:6px;height:9px;background:#7d3e43"></div><div style="position:absolute;left:84px;top:409px;width:6px;height:9px;background:#7d3e43"></div><div style="position:absolute;left:92px;top:409px;width:6px;height:9px;background:#7d3e43"></div><div style="position:absolute;left:100px;top:409px;width:6px;height:9px;background:#7d3e43"></div><div style="position:absolute;left:108px;top:409px;width:6px;height:9px;background:#7d3e43"></div><div style="position:absolute;left:116px;top:409px;width:6px;height:9px;background:#7d3e43"></div><div style="position:absolute;left:124px;top:409px;width:6px;height:9px;background:#7d3e43"></div><div style="position:absolute;left:132px;top:409px;width:6px;height:9px;background:#7d3e43"></div><div style="position:absolute;left:140px;top:409px;width:6px;height:9px;background:#7d3e43"></div><div style="position:absolute;left:148px;top:409px;width:6px;height:9px;background:#7d3e43"></div><div style="position:absolute;left:156px;top:409px;width:6px;height:9px;background:#7d3e43"></div><div style="position:absolute;left:164px;top:409px;width:6px;height:9px;background:#7d3e43"></div><div style="position:absolute;left:172px;top:409px;width:6px;height:9px;background:#7d3e43"></div><div style="position:absolute;left:180px;top:409px;width:6px;height:9px;background:#7d3e43"></div><div style="position:absolute;left:188px;top:409px;width:6px;height:9px;background:#7d3e43"></div><div style="position:absolute;left:196px;top:409px;width:6px;height:9px;background:#7d3e43"></div><div style="position:absolute;left:204px;top:409px;width:6px;height:9px;background:#7d3e43"></div><div style="position:absolute;left:212px;top:409px;width:6px;height:9px;background:#7d3e43"></div><div style="position:absolute;left:220px;top:409px;width:6px;height:9px;background:#7d3e43"></div><div style="position:absolute;left:228px;top:409px;width:6px;height:9px;background:#7d3e43"></div><div style="position:absolute;left:236px;top:409px;width:6px;height:9px;background:#7d3e43"></div><div style="position:absolute;left:244px;top:409px;width:6px;height:9px;background:#7d3e43"></div><div style="position:absolute;left:252px;top:409px;width:6px;height:9px;background:#7d3e43"></div><div style="position:absolute;left:260px;top:409px;width:6px;height:9px;background:#7d3e43"></div><div style="position:absolute;left:268px;top:409px;width:6px;height:9px;background:#7d3e43"></div><div style="position:absolute;left:276px;top:409px;width:6px;height:9px;background:#7d3e43"></div><div style="position:absolute;left:284px;top:409px;width:6px;height:9px;background:#7d3e43"></div><div style="position:absolute;left:292px;top:409px;width:6px;height:9px;background:#7d3e43"></div><div style="position:absolute;left:300px;top:409px;width:6px;height:9px;background:#7d3e43"></div><div style="position:absolute;left:308px;top:409px;width:6px;height:9px;background:#7d3e43"></div><div style="position:absolute;left:316px;top:409px;width:6px;height:9px;background:#7d3e43"></div><div style="position:absolute;left:324px;top:409px;width:6px;height:9px;background:#7d3e43"></div><div style="position:absolute;left:332px;top:409px;width:6px;height:9px;background:#7d3e43"></div><div style="position:absolute;left:340px;top:409px;width:6px;height:9px;background:#7d3e43"></div><div style="position:absolute;left:348px;top:409px;width:6px;height:9px;background:#7d3e43"></div><div style="position:absolute;left:356px;top:409px;width:1px;height:9px;background:#7d3e43"></div>
<div class="t" id="t_scr" style="left:34.11px;top:432px;transform:scaleX(0.8730);">Scramble complete!</div><div class="t" id="t_eng1" style="left:34.02px;top:452px;transform:scaleX(0.8583);">Loops: 1</div><div class="t" id="t_eng2" style="left:81.17px;top:452px;transform:scaleX(0.8870);">Engine shuffles: 9136</div><div class="t" id="t_big" style="left:34.11px;top:472px;transform:scaleX(0.8792);">Spectral Biggest = 8339, Smallest = 1385</div>
<div style="position:absolute;left:379px;top:387px;width:155px;height:1px;background:#908c53"></div><div style="position:absolute;left:379px;top:387px;width:1px;height:65px;background:#908c53"></div><div style="position:absolute;left:379px;top:452px;width:156px;height:1px;background:#ebe8d5"></div><div style="position:absolute;left:534px;top:387px;width:1px;height:66px;background:#ebe8d5"></div><div style="position:absolute;left:380px;top:388px;width:153px;height:1px;background:#ebe8d5"></div><div style="position:absolute;left:380px;top:388px;width:1px;height:63px;background:#ebe8d5"></div><div style="position:absolute;left:380px;top:451px;width:154px;height:1px;background:#908c53"></div><div style="position:absolute;left:533px;top:388px;width:1px;height:64px;background:#908c53"></div>
<svg style="position:absolute;left:385px;top:394px" width="12" height="12" viewBox="0 0 12 12" shape-rendering="crispEdges"><path d="M4 0h1v1h-1zM5 0h1v1h-1zM6 0h1v1h-1zM7 0h1v1h-1zM2 1h1v1h-1zM3 1h1v1h-1zM8 1h1v1h-1zM9 1h1v1h-1zM1 2h1v1h-1zM1 3h1v1h-1zM0 4h1v1h-1zM0 5h1v1h-1zM0 6h1v1h-1zM0 7h1v1h-1zM1 8h1v1h-1zM1 9h1v1h-1z" fill="#908c53"/><path d="M4 1h1v1h-1zM5 1h1v1h-1zM6 1h1v1h-1zM7 1h1v1h-1zM2 2h1v1h-1zM3 2h1v1h-1zM8 2h1v1h-1zM9 2h1v1h-1zM2 3h1v1h-1zM1 4h1v1h-1zM5 4h1v1h-1zM6 4h1v1h-1zM1 5h1v1h-1zM4 5h1v1h-1zM5 5h1v1h-1zM6 5h1v1h-1zM7 5h1v1h-1zM1 6h1v1h-1zM4 6h1v1h-1zM5 6h1v1h-1zM6 6h1v1h-1zM7 6h1v1h-1zM1 7h1v1h-1zM5 7h1v1h-1zM6 7h1v1h-1zM2 8h1v1h-1z" fill="#000"/><path d="M4 2h1v1h-1zM5 2h1v1h-1zM6 2h1v1h-1zM7 2h1v1h-1zM3 3h1v1h-1zM4 3h1v1h-1zM5 3h1v1h-1zM6 3h1v1h-1zM7 3h1v1h-1zM8 3h1v1h-1zM2 4h1v1h-1zM3 4h1v1h-1zM4 4h1v1h-1zM7 4h1v1h-1zM8 4h1v1h-1zM9 4h1v1h-1zM2 5h1v1h-1zM3 5h1v1h-1zM8 5h1v1h-1zM9 5h1v1h-1zM2 6h1v1h-1zM3 6h1v1h-1zM8 6h1v1h-1zM9 6h1v1h-1zM2 7h1v1h-1zM3 7h1v1h-1zM4 7h1v1h-1zM7 7h1v1h-1zM8 7h1v1h-1zM9 7h1v1h-1zM3 8h1v1h-1zM4 8h1v1h-1zM5 8h1v1h-1zM6 8h1v1h-1zM7 8h1v1h-1zM8 8h1v1h-1zM4 9h1v1h-1zM5 9h1v1h-1zM6 9h1v1h-1zM7 9h1v1h-1z" fill="#dad9be"/><path d="M10 2h1v1h-1zM10 3h1v1h-1zM11 4h1v1h-1zM11 5h1v1h-1zM11 6h1v1h-1zM11 7h1v1h-1zM10 8h1v1h-1zM10 9h1v1h-1zM2 10h1v1h-1zM3 10h1v1h-1zM8 10h1v1h-1zM9 10h1v1h-1zM4 11h1v1h-1zM5 11h1v1h-1zM6 11h1v1h-1zM7 11h1v1h-1z" fill="#ebe8d5"/><path d="M9 3h1v1h-1zM10 4h1v1h-1zM10 5h1v1h-1zM10 6h1v1h-1zM10 7h1v1h-1zM9 8h1v1h-1zM2 9h1v1h-1zM3 9h1v1h-1zM8 9h1v1h-1zM9 9h1v1h-1zM4 10h1v1h-1zM5 10h1v1h-1zM6 10h1v1h-1zM7 10h1v1h-1z" fill="#cbc8aa"/></svg><div class="t" id="t_r1a" style="left:402.07px;top:393px;transform:scaleX(0.8612);">8 bit</div>
<svg style="position:absolute;left:385px;top:414px" width="12" height="12" viewBox="0 0 12 12" shape-rendering="crispEdges"><path d="M4 0h1v1h-1zM5 0h1v1h-1zM6 0h1v1h-1zM7 0h1v1h-1zM2 1h1v1h-1zM3 1h1v1h-1zM8 1h1v1h-1zM9 1h1v1h-1zM1 2h1v1h-1zM1 3h1v1h-1zM0 4h1v1h-1zM0 5h1v1h-1zM0 6h1v1h-1zM0 7h1v1h-1zM1 8h1v1h-1zM1 9h1v1h-1z" fill="#908c53"/><path d="M4 1h1v1h-1zM5 1h1v1h-1zM6 1h1v1h-1zM7 1h1v1h-1zM2 2h1v1h-1zM3 2h1v1h-1zM8 2h1v1h-1zM9 2h1v1h-1zM2 3h1v1h-1zM1 4h1v1h-1zM1 5h1v1h-1zM1 6h1v1h-1zM1 7h1v1h-1zM2 8h1v1h-1z" fill="#000"/><path d="M4 2h1v1h-1zM5 2h1v1h-1zM6 2h1v1h-1zM7 2h1v1h-1zM3 3h1v1h-1zM4 3h1v1h-1zM5 3h1v1h-1zM6 3h1v1h-1zM7 3h1v1h-1zM8 3h1v1h-1zM2 4h1v1h-1zM3 4h1v1h-1zM4 4h1v1h-1zM5 4h1v1h-1zM6 4h1v1h-1zM7 4h1v1h-1zM8 4h1v1h-1zM9 4h1v1h-1zM2 5h1v1h-1zM3 5h1v1h-1zM4 5h1v1h-1zM5 5h1v1h-1zM6 5h1v1h-1zM7 5h1v1h-1zM8 5h1v1h-1zM9 5h1v1h-1zM2 6h1v1h-1zM3 6h1v1h-1zM4 6h1v1h-1zM5 6h1v1h-1zM6 6h1v1h-1zM7 6h1v1h-1zM8 6h1v1h-1zM9 6h1v1h-1zM2 7h1v1h-1zM3 7h1v1h-1zM4 7h1v1h-1zM5 7h1v1h-1zM6 7h1v1h-1zM7 7h1v1h-1zM8 7h1v1h-1zM9 7h1v1h-1zM3 8h1v1h-1zM4 8h1v1h-1zM5 8h1v1h-1zM6 8h1v1h-1zM7 8h1v1h-1zM8 8h1v1h-1zM4 9h1v1h-1zM5 9h1v1h-1zM6 9h1v1h-1zM7 9h1v1h-1z" fill="#dad9be"/><path d="M10 2h1v1h-1zM10 3h1v1h-1zM11 4h1v1h-1zM11 5h1v1h-1zM11 6h1v1h-1zM11 7h1v1h-1zM10 8h1v1h-1zM10 9h1v1h-1zM2 10h1v1h-1zM3 10h1v1h-1zM8 10h1v1h-1zM9 10h1v1h-1zM4 11h1v1h-1zM5 11h1v1h-1zM6 11h1v1h-1zM7 11h1v1h-1z" fill="#ebe8d5"/><path d="M9 3h1v1h-1zM10 4h1v1h-1zM10 5h1v1h-1zM10 6h1v1h-1zM10 7h1v1h-1zM9 8h1v1h-1zM2 9h1v1h-1zM3 9h1v1h-1zM8 9h1v1h-1zM9 9h1v1h-1zM4 10h1v1h-1zM5 10h1v1h-1zM6 10h1v1h-1zM7 10h1v1h-1z" fill="#cbc8aa"/></svg><div class="t" id="t_r1b" style="left:402.95px;top:413px;transform:scaleX(0.8504);">16 bit</div>
<svg style="position:absolute;left:385px;top:434px" width="12" height="12" viewBox="0 0 12 12" shape-rendering="crispEdges"><path d="M4 0h1v1h-1zM5 0h1v1h-1zM6 0h1v1h-1zM7 0h1v1h-1zM2 1h1v1h-1zM3 1h1v1h-1zM8 1h1v1h-1zM9 1h1v1h-1zM1 2h1v1h-1zM1 3h1v1h-1zM0 4h1v1h-1zM0 5h1v1h-1zM0 6h1v1h-1zM0 7h1v1h-1zM1 8h1v1h-1zM1 9h1v1h-1z" fill="#908c53"/><path d="M4 1h1v1h-1zM5 1h1v1h-1zM6 1h1v1h-1zM7 1h1v1h-1zM2 2h1v1h-1zM3 2h1v1h-1zM8 2h1v1h-1zM9 2h1v1h-1zM2 3h1v1h-1zM1 4h1v1h-1zM1 5h1v1h-1zM1 6h1v1h-1zM1 7h1v1h-1zM2 8h1v1h-1z" fill="#000"/><path d="M4 2h1v1h-1zM5 2h1v1h-1zM6 2h1v1h-1zM7 2h1v1h-1zM3 3h1v1h-1zM4 3h1v1h-1zM5 3h1v1h-1zM6 3h1v1h-1zM7 3h1v1h-1zM8 3h1v1h-1zM2 4h1v1h-1zM3 4h1v1h-1zM4 4h1v1h-1zM5 4h1v1h-1zM6 4h1v1h-1zM7 4h1v1h-1zM8 4h1v1h-1zM9 4h1v1h-1zM2 5h1v1h-1zM3 5h1v1h-1zM4 5h1v1h-1zM5 5h1v1h-1zM6 5h1v1h-1zM7 5h1v1h-1zM8 5h1v1h-1zM9 5h1v1h-1zM2 6h1v1h-1zM3 6h1v1h-1zM4 6h1v1h-1zM5 6h1v1h-1zM6 6h1v1h-1zM7 6h1v1h-1zM8 6h1v1h-1zM9 6h1v1h-1zM2 7h1v1h-1zM3 7h1v1h-1zM4 7h1v1h-1zM5 7h1v1h-1zM6 7h1v1h-1zM7 7h1v1h-1zM8 7h1v1h-1zM9 7h1v1h-1zM3 8h1v1h-1zM4 8h1v1h-1zM5 8h1v1h-1zM6 8h1v1h-1zM7 8h1v1h-1zM8 8h1v1h-1zM4 9h1v1h-1zM5 9h1v1h-1zM6 9h1v1h-1zM7 9h1v1h-1z" fill="#dad9be"/><path d="M10 2h1v1h-1zM10 3h1v1h-1zM11 4h1v1h-1zM11 5h1v1h-1zM11 6h1v1h-1zM11 7h1v1h-1zM10 8h1v1h-1zM10 9h1v1h-1zM2 10h1v1h-1zM3 10h1v1h-1zM8 10h1v1h-1zM9 10h1v1h-1zM4 11h1v1h-1zM5 11h1v1h-1zM6 11h1v1h-1zM7 11h1v1h-1z" fill="#ebe8d5"/><path d="M9 3h1v1h-1zM10 4h1v1h-1zM10 5h1v1h-1zM10 6h1v1h-1zM10 7h1v1h-1zM9 8h1v1h-1zM2 9h1v1h-1zM3 9h1v1h-1zM8 9h1v1h-1zM9 9h1v1h-1zM4 10h1v1h-1zM5 10h1v1h-1zM6 10h1v1h-1zM7 10h1v1h-1z" fill="#cbc8aa"/></svg><div class="t" id="t_r1c" style="left:401.95px;top:433px;transform:scaleX(0.8643);">32 bit</div>
<div style="position:absolute;left:669px;top:387px;width:240px;height:1px;background:#908c53"></div><div style="position:absolute;left:669px;top:387px;width:1px;height:65px;background:#908c53"></div><div style="position:absolute;left:669px;top:452px;width:241px;height:1px;background:#ebe8d5"></div><div style="position:absolute;left:909px;top:387px;width:1px;height:66px;background:#ebe8d5"></div><div style="position:absolute;left:670px;top:388px;width:238px;height:1px;background:#ebe8d5"></div><div style="position:absolute;left:670px;top:388px;width:1px;height:63px;background:#ebe8d5"></div><div style="position:absolute;left:670px;top:451px;width:239px;height:1px;background:#908c53"></div><div style="position:absolute;left:908px;top:388px;width:1px;height:64px;background:#908c53"></div>
<svg style="position:absolute;left:675px;top:394px" width="12" height="12" viewBox="0 0 12 12" shape-rendering="crispEdges"><path d="M4 0h1v1h-1zM5 0h1v1h-1zM6 0h1v1h-1zM7 0h1v1h-1zM2 1h1v1h-1zM3 1h1v1h-1zM8 1h1v1h-1zM9 1h1v1h-1zM1 2h1v1h-1zM1 3h1v1h-1zM0 4h1v1h-1zM0 5h1v1h-1zM0 6h1v1h-1zM0 7h1v1h-1zM1 8h1v1h-1zM1 9h1v1h-1z" fill="#908c53"/><path d="M4 1h1v1h-1zM5 1h1v1h-1zM6 1h1v1h-1zM7 1h1v1h-1zM2 2h1v1h-1zM3 2h1v1h-1zM8 2h1v1h-1zM9 2h1v1h-1zM2 3h1v1h-1zM1 4h1v1h-1zM5 4h1v1h-1zM6 4h1v1h-1zM1 5h1v1h-1zM4 5h1v1h-1zM5 5h1v1h-1zM6 5h1v1h-1zM7 5h1v1h-1zM1 6h1v1h-1zM4 6h1v1h-1zM5 6h1v1h-1zM6 6h1v1h-1zM7 6h1v1h-1zM1 7h1v1h-1zM5 7h1v1h-1zM6 7h1v1h-1zM2 8h1v1h-1z" fill="#000"/><path d="M4 2h1v1h-1zM5 2h1v1h-1zM6 2h1v1h-1zM7 2h1v1h-1zM3 3h1v1h-1zM4 3h1v1h-1zM5 3h1v1h-1zM6 3h1v1h-1zM7 3h1v1h-1zM8 3h1v1h-1zM2 4h1v1h-1zM3 4h1v1h-1zM4 4h1v1h-1zM7 4h1v1h-1zM8 4h1v1h-1zM9 4h1v1h-1zM2 5h1v1h-1zM3 5h1v1h-1zM8 5h1v1h-1zM9 5h1v1h-1zM2 6h1v1h-1zM3 6h1v1h-1zM8 6h1v1h-1zM9 6h1v1h-1zM2 7h1v1h-1zM3 7h1v1h-1zM4 7h1v1h-1zM7 7h1v1h-1zM8 7h1v1h-1zM9 7h1v1h-1zM3 8h1v1h-1zM4 8h1v1h-1zM5 8h1v1h-1zM6 8h1v1h-1zM7 8h1v1h-1zM8 8h1v1h-1zM4 9h1v1h-1zM5 9h1v1h-1zM6 9h1v1h-1zM7 9h1v1h-1z" fill="#dad9be"/><path d="M10 2h1v1h-1zM10 3h1v1h-1zM11 4h1v1h-1zM11 5h1v1h-1zM11 6h1v1h-1zM11 7h1v1h-1zM10 8h1v1h-1zM10 9h1v1h-1zM2 10h1v1h-1zM3 10h1v1h-1zM8 10h1v1h-1zM9 10h1v1h-1zM4 11h1v1h-1zM5 11h1v1h-1zM6 11h1v1h-1zM7 11h1v1h-1z" fill="#ebe8d5"/><path d="M9 3h1v1h-1zM10 4h1v1h-1zM10 5h1v1h-1zM10 6h1v1h-1zM10 7h1v1h-1zM9 8h1v1h-1zM2 9h1v1h-1zM3 9h1v1h-1zM8 9h1v1h-1zM9 9h1v1h-1zM4 10h1v1h-1zM5 10h1v1h-1zM6 10h1v1h-1zM7 10h1v1h-1z" fill="#cbc8aa"/></svg><div class="t" id="t_r2a" style="left:692.07px;top:393px;transform:scaleX(0.8612);">8 bit</div>
<svg style="position:absolute;left:675px;top:414px" width="12" height="12" viewBox="0 0 12 12" shape-rendering="crispEdges"><path d="M4 0h1v1h-1zM5 0h1v1h-1zM6 0h1v1h-1zM7 0h1v1h-1zM2 1h1v1h-1zM3 1h1v1h-1zM8 1h1v1h-1zM9 1h1v1h-1zM1 2h1v1h-1zM1 3h1v1h-1zM0 4h1v1h-1zM0 5h1v1h-1zM0 6h1v1h-1zM0 7h1v1h-1zM1 8h1v1h-1zM1 9h1v1h-1z" fill="#908c53"/><path d="M4 1h1v1h-1zM5 1h1v1h-1zM6 1h1v1h-1zM7 1h1v1h-1zM2 2h1v1h-1zM3 2h1v1h-1zM8 2h1v1h-1zM9 2h1v1h-1zM2 3h1v1h-1zM1 4h1v1h-1zM1 5h1v1h-1zM1 6h1v1h-1zM1 7h1v1h-1zM2 8h1v1h-1z" fill="#000"/><path d="M4 2h1v1h-1zM5 2h1v1h-1zM6 2h1v1h-1zM7 2h1v1h-1zM3 3h1v1h-1zM4 3h1v1h-1zM5 3h1v1h-1zM6 3h1v1h-1zM7 3h1v1h-1zM8 3h1v1h-1zM2 4h1v1h-1zM3 4h1v1h-1zM4 4h1v1h-1zM5 4h1v1h-1zM6 4h1v1h-1zM7 4h1v1h-1zM8 4h1v1h-1zM9 4h1v1h-1zM2 5h1v1h-1zM3 5h1v1h-1zM4 5h1v1h-1zM5 5h1v1h-1zM6 5h1v1h-1zM7 5h1v1h-1zM8 5h1v1h-1zM9 5h1v1h-1zM2 6h1v1h-1zM3 6h1v1h-1zM4 6h1v1h-1zM5 6h1v1h-1zM6 6h1v1h-1zM7 6h1v1h-1zM8 6h1v1h-1zM9 6h1v1h-1zM2 7h1v1h-1zM3 7h1v1h-1zM4 7h1v1h-1zM5 7h1v1h-1zM6 7h1v1h-1zM7 7h1v1h-1zM8 7h1v1h-1zM9 7h1v1h-1zM3 8h1v1h-1zM4 8h1v1h-1zM5 8h1v1h-1zM6 8h1v1h-1zM7 8h1v1h-1zM8 8h1v1h-1zM4 9h1v1h-1zM5 9h1v1h-1zM6 9h1v1h-1zM7 9h1v1h-1z" fill="#dad9be"/><path d="M10 2h1v1h-1zM10 3h1v1h-1zM11 4h1v1h-1zM11 5h1v1h-1zM11 6h1v1h-1zM11 7h1v1h-1zM10 8h1v1h-1zM10 9h1v1h-1zM2 10h1v1h-1zM3 10h1v1h-1zM8 10h1v1h-1zM9 10h1v1h-1zM4 11h1v1h-1zM5 11h1v1h-1zM6 11h1v1h-1zM7 11h1v1h-1z" fill="#ebe8d5"/><path d="M9 3h1v1h-1zM10 4h1v1h-1zM10 5h1v1h-1zM10 6h1v1h-1zM10 7h1v1h-1zM9 8h1v1h-1zM2 9h1v1h-1zM3 9h1v1h-1zM8 9h1v1h-1zM9 9h1v1h-1zM4 10h1v1h-1zM5 10h1v1h-1zM6 10h1v1h-1zM7 10h1v1h-1z" fill="#cbc8aa"/></svg><div class="t" id="t_r2b" style="left:692.95px;top:413px;transform:scaleX(0.8504);">16 bit</div>
<svg style="position:absolute;left:675px;top:434px" width="12" height="12" viewBox="0 0 12 12" shape-rendering="crispEdges"><path d="M4 0h1v1h-1zM5 0h1v1h-1zM6 0h1v1h-1zM7 0h1v1h-1zM2 1h1v1h-1zM3 1h1v1h-1zM8 1h1v1h-1zM9 1h1v1h-1zM1 2h1v1h-1zM1 3h1v1h-1zM0 4h1v1h-1zM0 5h1v1h-1zM0 6h1v1h-1zM0 7h1v1h-1zM1 8h1v1h-1zM1 9h1v1h-1z" fill="#908c53"/><path d="M4 1h1v1h-1zM5 1h1v1h-1zM6 1h1v1h-1zM7 1h1v1h-1zM2 2h1v1h-1zM3 2h1v1h-1zM8 2h1v1h-1zM9 2h1v1h-1zM2 3h1v1h-1zM1 4h1v1h-1zM1 5h1v1h-1zM1 6h1v1h-1zM1 7h1v1h-1zM2 8h1v1h-1z" fill="#000"/><path d="M4 2h1v1h-1zM5 2h1v1h-1zM6 2h1v1h-1zM7 2h1v1h-1zM3 3h1v1h-1zM4 3h1v1h-1zM5 3h1v1h-1zM6 3h1v1h-1zM7 3h1v1h-1zM8 3h1v1h-1zM2 4h1v1h-1zM3 4h1v1h-1zM4 4h1v1h-1zM5 4h1v1h-1zM6 4h1v1h-1zM7 4h1v1h-1zM8 4h1v1h-1zM9 4h1v1h-1zM2 5h1v1h-1zM3 5h1v1h-1zM4 5h1v1h-1zM5 5h1v1h-1zM6 5h1v1h-1zM7 5h1v1h-1zM8 5h1v1h-1zM9 5h1v1h-1zM2 6h1v1h-1zM3 6h1v1h-1zM4 6h1v1h-1zM5 6h1v1h-1zM6 6h1v1h-1zM7 6h1v1h-1zM8 6h1v1h-1zM9 6h1v1h-1zM2 7h1v1h-1zM3 7h1v1h-1zM4 7h1v1h-1zM5 7h1v1h-1zM6 7h1v1h-1zM7 7h1v1h-1zM8 7h1v1h-1zM9 7h1v1h-1zM3 8h1v1h-1zM4 8h1v1h-1zM5 8h1v1h-1zM6 8h1v1h-1zM7 8h1v1h-1zM8 8h1v1h-1zM4 9h1v1h-1zM5 9h1v1h-1zM6 9h1v1h-1zM7 9h1v1h-1z" fill="#dad9be"/><path d="M10 2h1v1h-1zM10 3h1v1h-1zM11 4h1v1h-1zM11 5h1v1h-1zM11 6h1v1h-1zM11 7h1v1h-1zM10 8h1v1h-1zM10 9h1v1h-1zM2 10h1v1h-1zM3 10h1v1h-1zM8 10h1v1h-1zM9 10h1v1h-1zM4 11h1v1h-1zM5 11h1v1h-1zM6 11h1v1h-1zM7 11h1v1h-1z" fill="#ebe8d5"/><path d="M9 3h1v1h-1zM10 4h1v1h-1zM10 5h1v1h-1zM10 6h1v1h-1zM10 7h1v1h-1zM9 8h1v1h-1zM2 9h1v1h-1zM3 9h1v1h-1zM8 9h1v1h-1zM9 9h1v1h-1zM4 10h1v1h-1zM5 10h1v1h-1zM6 10h1v1h-1zM7 10h1v1h-1z" fill="#cbc8aa"/></svg><div class="t" id="t_r2c" style="left:691.95px;top:433px;transform:scaleX(0.8643);">32 bit</div>
<div style="position:absolute;left:669px;top:457px;width:240px;height:1px;background:#908c53"></div><div style="position:absolute;left:669px;top:457px;width:1px;height:55px;background:#908c53"></div><div style="position:absolute;left:669px;top:512px;width:241px;height:1px;background:#ebe8d5"></div><div style="position:absolute;left:909px;top:457px;width:1px;height:56px;background:#ebe8d5"></div><div style="position:absolute;left:670px;top:458px;width:238px;height:1px;background:#ebe8d5"></div><div style="position:absolute;left:670px;top:458px;width:1px;height:53px;background:#ebe8d5"></div><div style="position:absolute;left:670px;top:511px;width:239px;height:1px;background:#908c53"></div><div style="position:absolute;left:908px;top:458px;width:1px;height:54px;background:#908c53"></div>
<svg style="position:absolute;left:680px;top:469px" width="12" height="12" viewBox="0 0 12 12" shape-rendering="crispEdges"><path d="M4 0h1v1h-1zM5 0h1v1h-1zM6 0h1v1h-1zM7 0h1v1h-1zM2 1h1v1h-1zM3 1h1v1h-1zM8 1h1v1h-1zM9 1h1v1h-1zM1 2h1v1h-1zM1 3h1v1h-1zM0 4h1v1h-1zM0 5h1v1h-1zM0 6h1v1h-1zM0 7h1v1h-1zM1 8h1v1h-1zM1 9h1v1h-1z" fill="#908c53"/><path d="M4 1h1v1h-1zM5 1h1v1h-1zM6 1h1v1h-1zM7 1h1v1h-1zM2 2h1v1h-1zM3 2h1v1h-1zM8 2h1v1h-1zM9 2h1v1h-1zM2 3h1v1h-1zM1 4h1v1h-1zM5 4h1v1h-1zM6 4h1v1h-1zM1 5h1v1h-1zM4 5h1v1h-1zM5 5h1v1h-1zM6 5h1v1h-1zM7 5h1v1h-1zM1 6h1v1h-1zM4 6h1v1h-1zM5 6h1v1h-1zM6 6h1v1h-1zM7 6h1v1h-1zM1 7h1v1h-1zM5 7h1v1h-1zM6 7h1v1h-1zM2 8h1v1h-1z" fill="#000"/><path d="M4 2h1v1h-1zM5 2h1v1h-1zM6 2h1v1h-1zM7 2h1v1h-1zM3 3h1v1h-1zM4 3h1v1h-1zM5 3h1v1h-1zM6 3h1v1h-1zM7 3h1v1h-1zM8 3h1v1h-1zM2 4h1v1h-1zM3 4h1v1h-1zM4 4h1v1h-1zM7 4h1v1h-1zM8 4h1v1h-1zM9 4h1v1h-1zM2 5h1v1h-1zM3 5h1v1h-1zM8 5h1v1h-1zM9 5h1v1h-1zM2 6h1v1h-1zM3 6h1v1h-1zM8 6h1v1h-1zM9 6h1v1h-1zM2 7h1v1h-1zM3 7h1v1h-1zM4 7h1v1h-1zM7 7h1v1h-1zM8 7h1v1h-1zM9 7h1v1h-1zM3 8h1v1h-1zM4 8h1v1h-1zM5 8h1v1h-1zM6 8h1v1h-1zM7 8h1v1h-1zM8 8h1v1h-1zM4 9h1v1h-1zM5 9h1v1h-1zM6 9h1v1h-1zM7 9h1v1h-1z" fill="#dad9be"/><path d="M10 2h1v1h-1zM10 3h1v1h-1zM11 4h1v1h-1zM11 5h1v1h-1zM11 6h1v1h-1zM11 7h1v1h-1zM10 8h1v1h-1zM10 9h1v1h-1zM2 10h1v1h-1zM3 10h1v1h-1zM8 10h1v1h-1zM9 10h1v1h-1zM4 11h1v1h-1zM5 11h1v1h-1zM6 11h1v1h-1zM7 11h1v1h-1z" fill="#ebe8d5"/><path d="M9 3h1v1h-1zM10 4h1v1h-1zM10 5h1v1h-1zM10 6h1v1h-1zM10 7h1v1h-1zM9 8h1v1h-1zM2 9h1v1h-1zM3 9h1v1h-1zM8 9h1v1h-1zM9 9h1v1h-1zM4 10h1v1h-1zM5 10h1v1h-1zM6 10h1v1h-1zM7 10h1v1h-1z" fill="#cbc8aa"/></svg><div class="t" id="t_u1" style="left:696.94px;top:468px;transform:scaleX(0.8747);">Use first 7500 XY samples</div>
<svg style="position:absolute;left:680px;top:489px" width="12" height="12" viewBox="0 0 12 12" shape-rendering="crispEdges"><path d="M4 0h1v1h-1zM5 0h1v1h-1zM6 0h1v1h-1zM7 0h1v1h-1zM2 1h1v1h-1zM3 1h1v1h-1zM8 1h1v1h-1zM9 1h1v1h-1zM1 2h1v1h-1zM1 3h1v1h-1zM0 4h1v1h-1zM0 5h1v1h-1zM0 6h1v1h-1zM0 7h1v1h-1zM1 8h1v1h-1zM1 9h1v1h-1z" fill="#908c53"/><path d="M4 1h1v1h-1zM5 1h1v1h-1zM6 1h1v1h-1zM7 1h1v1h-1zM2 2h1v1h-1zM3 2h1v1h-1zM8 2h1v1h-1zM9 2h1v1h-1zM2 3h1v1h-1zM1 4h1v1h-1zM1 5h1v1h-1zM1 6h1v1h-1zM1 7h1v1h-1zM2 8h1v1h-1z" fill="#000"/><path d="M4 2h1v1h-1zM5 2h1v1h-1zM6 2h1v1h-1zM7 2h1v1h-1zM3 3h1v1h-1zM4 3h1v1h-1zM5 3h1v1h-1zM6 3h1v1h-1zM7 3h1v1h-1zM8 3h1v1h-1zM2 4h1v1h-1zM3 4h1v1h-1zM4 4h1v1h-1zM5 4h1v1h-1zM6 4h1v1h-1zM7 4h1v1h-1zM8 4h1v1h-1zM9 4h1v1h-1zM2 5h1v1h-1zM3 5h1v1h-1zM4 5h1v1h-1zM5 5h1v1h-1zM6 5h1v1h-1zM7 5h1v1h-1zM8 5h1v1h-1zM9 5h1v1h-1zM2 6h1v1h-1zM3 6h1v1h-1zM4 6h1v1h-1zM5 6h1v1h-1zM6 6h1v1h-1zM7 6h1v1h-1zM8 6h1v1h-1zM9 6h1v1h-1zM2 7h1v1h-1zM3 7h1v1h-1zM4 7h1v1h-1zM5 7h1v1h-1zM6 7h1v1h-1zM7 7h1v1h-1zM8 7h1v1h-1zM9 7h1v1h-1zM3 8h1v1h-1zM4 8h1v1h-1zM5 8h1v1h-1zM6 8h1v1h-1zM7 8h1v1h-1zM8 8h1v1h-1zM4 9h1v1h-1zM5 9h1v1h-1zM6 9h1v1h-1zM7 9h1v1h-1z" fill="#dad9be"/><path d="M10 2h1v1h-1zM10 3h1v1h-1zM11 4h1v1h-1zM11 5h1v1h-1zM11 6h1v1h-1zM11 7h1v1h-1zM10 8h1v1h-1zM10 9h1v1h-1zM2 10h1v1h-1zM3 10h1v1h-1zM8 10h1v1h-1zM9 10h1v1h-1zM4 11h1v1h-1zM5 11h1v1h-1zM6 11h1v1h-1zM7 11h1v1h-1z" fill="#ebe8d5"/><path d="M9 3h1v1h-1zM10 4h1v1h-1zM10 5h1v1h-1zM10 6h1v1h-1zM10 7h1v1h-1zM9 8h1v1h-1zM2 9h1v1h-1zM3 9h1v1h-1zM8 9h1v1h-1zM9 9h1v1h-1zM4 10h1v1h-1zM5 10h1v1h-1zM6 10h1v1h-1zM7 10h1v1h-1z" fill="#cbc8aa"/></svg><div class="t" id="t_u2" style="left:696.93px;top:488px;transform:scaleX(0.8904);">Use 7500 evenly spaced XY samples</div>
<div style="position:absolute;left:309px;top:467px;width:314px;height:19px;border:1px solid #908c53;border-right-color:#ebe8d5;border-bottom-color:#ebe8d5"></div><div style="position:absolute;left:310px;top:468px;width:312px;height:17px;border:1px solid #000;border-right-color:#cbc8aa;border-bottom-color:#cbc8aa;background:#dad9be;overflow:hidden"></div>
<div style="position:absolute;left:34px;top:497px;width:594px;height:49px;border:1px solid #908c53;border-right-color:#ebe8d5;border-bottom-color:#ebe8d5"></div><div style="position:absolute;left:35px;top:498px;width:592px;height:47px;border:1px solid #000;border-right-color:#cbc8aa;border-bottom-color:#cbc8aa;background:#dad9be;overflow:hidden"><div class="m" style="top:4px">Black RNG Algorithm, see  -   www.RomanBlack.com/Black_RNG.htm</div><div class="m" style="top:19px">Cache = 1000000 bytes,  Cylinders = 17 + 1</div><div class="m" style="top:34px">Cylinder starting values = 1,2,3,1,2,3,4,5,7,1,2,3,6,4,1,3,11 + 9</div></div>
<div style="position:absolute;left:615px;top:499px;width:13px;height:47px;background:#ebe8d6"></div>
<div style="position:absolute;left:615px;top:499px;width:11px;height:11px;border:1px solid #c8c7a6;border-right-color:#000;border-bottom-color:#000;background:#c8c7a6"></div><div style="position:absolute;left:616px;top:500px;width:9px;height:9px;border:1px solid #ebe8d5;border-right-color:#908c53;border-bottom-color:#908c53;"><svg style="position:absolute;left:2px;top:3px" width="5" height="3" viewBox="0 0 5 3" shape-rendering="crispEdges"><path d="M2 0h1v1h1v1h1v1h-5v-1h1v-1h1z" fill="#000"/></svg></div>
<div style="position:absolute;left:615px;top:512px;width:11px;height:13px;border:1px solid #c8c7a6;border-right-color:#000;border-bottom-color:#000;background:#c8c7a6"></div><div style="position:absolute;left:616px;top:513px;width:9px;height:11px;border:1px solid #ebe8d5;border-right-color:#908c53;border-bottom-color:#908c53;"></div>
<div style="position:absolute;left:615px;top:533px;width:11px;height:11px;border:1px solid #c8c7a6;border-right-color:#000;border-bottom-color:#000;background:#c8c7a6"></div><div style="position:absolute;left:616px;top:534px;width:9px;height:9px;border:1px solid #ebe8d5;border-right-color:#908c53;border-bottom-color:#908c53;"><svg style="position:absolute;left:2px;top:3px" width="5" height="3" viewBox="0 0 5 3" shape-rendering="crispEdges"><path d="M0 0h5v1h-1v1h-1v1h-1v-1h-1v-1h-1z" fill="#000"/></svg></div>
</body></html>
